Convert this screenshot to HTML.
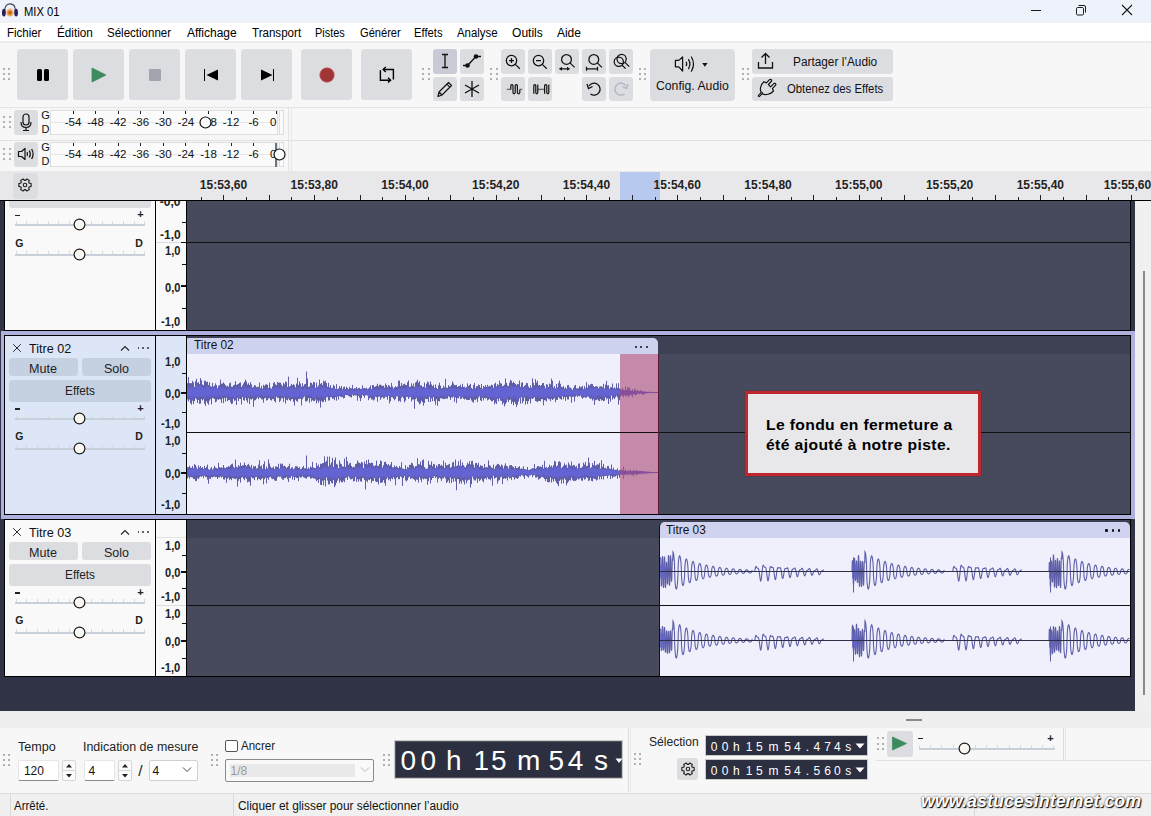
<!DOCTYPE html><html><head><meta charset="utf-8"><style>html,body{margin:0;padding:0;width:1151px;height:816px;overflow:hidden;}body{position:relative;background:#f0f0f0;font-family:"Liberation Sans",sans-serif;}div{box-sizing:border-box;}</style></head><body><div style="position:absolute;left:0px;top:0px;width:1151px;height:23px;background:#eef2fa;"></div><div style="position:absolute;left:0px;top:19.5px;width:1151px;height:3.5px;background:#eef1f5;"></div><svg style="position:absolute;left:0px;top:0px;" width="22" height="22" viewBox="0 0 22 22"><defs><radialGradient id="ag" cx="50%" cy="62%" r="55%"><stop offset="0" stop-color="#a84a08"/><stop offset="0.45" stop-color="#e89a40"/><stop offset="1" stop-color="#f6dcc0" stop-opacity="0"/></radialGradient></defs><ellipse cx="10" cy="11.5" rx="4.8" ry="5.2" fill="url(#ag)"/><path d="M4.7 10.5 C4.7 5.6 7.4 3.9 10 3.9 C12.6 3.9 15.3 5.6 15.3 10.5" fill="none" stroke="#3a3f58" stroke-width="1.1"/><ellipse cx="3.9" cy="12.6" rx="1.9" ry="3.9" fill="#2b1c5c"/><ellipse cx="16.1" cy="12.6" rx="1.9" ry="3.9" fill="#2b1c5c"/></svg><div style="position:absolute;left:23.50px;top:5.84px;font-size:12px;line-height:12px;white-space:pre;color:#000;transform:scaleX(0.9338);transform-origin:0 0;">MIX 01</div><div style="position:absolute;left:1031px;top:10px;width:10px;height:1px;background:#1a1a1a;"></div><svg style="position:absolute;left:1075px;top:4px;" width="13" height="13" viewBox="0 0 13 13"><rect x="1.5" y="3.5" width="7" height="7.5" rx="1.2" fill="none" stroke="#1a1a1a" stroke-width="1"/><path d="M3.5 1.5 H9 Q10.5 1.5 10.5 3 V8.5" fill="none" stroke="#1a1a1a" stroke-width="1"/></svg><svg style="position:absolute;left:1121px;top:4px;" width="12" height="12" viewBox="0 0 12 12"><path d="M1 1 L11 11 M11 1 L1 11" stroke="#1a1a1a" stroke-width="1.1"/></svg><div style="position:absolute;left:0px;top:23px;width:1151px;height:18px;background:#ffffff;"></div><div style="position:absolute;left:7.30px;top:26.84px;font-size:12px;line-height:12px;white-space:pre;color:#000;transform:scaleX(0.9554);transform-origin:0 0;">Fichier</div><div style="position:absolute;left:56.60px;top:26.84px;font-size:12px;line-height:12px;white-space:pre;color:#000;transform:scaleX(0.9784);transform-origin:0 0;">Édition</div><div style="position:absolute;left:107.40px;top:26.84px;font-size:12px;line-height:12px;white-space:pre;color:#000;transform:scaleX(0.9609);transform-origin:0 0;">Sélectionner</div><div style="position:absolute;left:186.90px;top:26.84px;font-size:12px;line-height:12px;white-space:pre;color:#000;">Affichage</div><div style="position:absolute;left:251.90px;top:26.84px;font-size:12px;line-height:12px;white-space:pre;color:#000;transform:scaleX(0.9645);transform-origin:0 0;">Transport</div><div style="position:absolute;left:315.00px;top:26.84px;font-size:12px;line-height:12px;white-space:pre;color:#000;transform:scaleX(0.9119);transform-origin:0 0;">Pistes</div><div style="position:absolute;left:359.50px;top:26.84px;font-size:12px;line-height:12px;white-space:pre;color:#000;transform:scaleX(0.9245);transform-origin:0 0;">Générer</div><div style="position:absolute;left:414.20px;top:26.84px;font-size:12px;line-height:12px;white-space:pre;color:#000;transform:scaleX(0.9356);transform-origin:0 0;">Effets</div><div style="position:absolute;left:457.40px;top:26.84px;font-size:12px;line-height:12px;white-space:pre;color:#000;transform:scaleX(0.9510);transform-origin:0 0;">Analyse</div><div style="position:absolute;left:512.10px;top:26.84px;font-size:12px;line-height:12px;white-space:pre;color:#000;">Outils</div><div style="position:absolute;left:556.90px;top:26.84px;font-size:12px;line-height:12px;white-space:pre;color:#000;">Aide</div><div style="position:absolute;left:0px;top:41px;width:1151px;height:66px;background:#f7f7f7;"></div><div style="position:absolute;left:0px;top:41px;width:1151px;height:2px;background:#ececec;"></div><div style="position:absolute;left:0px;top:107px;width:1151px;height:1px;background:#e4e4e4;"></div><div style="position:absolute;left:2.8px;top:67.6px;width:2px;height:2px;background:#9a9a9a;border-radius:1px;"></div><div style="position:absolute;left:2.8px;top:72.8px;width:2px;height:2px;background:#9a9a9a;border-radius:1px;"></div><div style="position:absolute;left:2.8px;top:78.0px;width:2px;height:2px;background:#9a9a9a;border-radius:1px;"></div><div style="position:absolute;left:8.2px;top:67.6px;width:2px;height:2px;background:#9a9a9a;border-radius:1px;"></div><div style="position:absolute;left:8.2px;top:72.8px;width:2px;height:2px;background:#9a9a9a;border-radius:1px;"></div><div style="position:absolute;left:8.2px;top:78.0px;width:2px;height:2px;background:#9a9a9a;border-radius:1px;"></div><div style="position:absolute;left:17.3px;top:49px;width:51.2px;height:51.3px;background:#dcdde1;border-radius:3px;"></div><div style="position:absolute;left:73.3px;top:49px;width:51.2px;height:51.3px;background:#dcdde1;border-radius:3px;"></div><div style="position:absolute;left:129.3px;top:49px;width:51.2px;height:51.3px;background:#dcdde1;border-radius:3px;"></div><div style="position:absolute;left:185.3px;top:49px;width:51.2px;height:51.3px;background:#dcdde1;border-radius:3px;"></div><div style="position:absolute;left:241.3px;top:49px;width:51.2px;height:51.3px;background:#dcdde1;border-radius:3px;"></div><div style="position:absolute;left:301.3px;top:49px;width:51.2px;height:51.3px;background:#dcdde1;border-radius:3px;"></div><div style="position:absolute;left:361.3px;top:49px;width:51.2px;height:51.3px;background:#dcdde1;border-radius:3px;"></div><div style="position:absolute;left:36.5px;top:68.5px;width:5px;height:12.5px;background:#000;border-radius:1.5px;"></div><div style="position:absolute;left:44px;top:68.5px;width:5px;height:12.5px;background:#000;border-radius:1.5px;"></div><svg style="position:absolute;left:91px;top:67px;" width="16" height="16" viewBox="0 0 16 16"><path d="M1 1 L15 8 L1 15 Z" fill="#3d8b5e" stroke="#3d8b5e" stroke-width="0.8" stroke-linejoin="round"/></svg><div style="position:absolute;left:149px;top:69px;width:11.7px;height:11.7px;background:#a2a5ae;border-radius:1px;"></div><div style="position:absolute;left:203.8px;top:69px;width:1.5px;height:12px;background:#000;"></div><svg style="position:absolute;left:206px;top:69px;" width="13" height="12" viewBox="0 0 13 12"><path d="M0.5 6 L12 0.5 L12 11.5 Z" fill="#000"/></svg><svg style="position:absolute;left:259.5px;top:69px;" width="13" height="12" viewBox="0 0 13 12"><path d="M12.5 6 L1 0.5 L1 11.5 Z" fill="#000"/></svg><div style="position:absolute;left:272.7px;top:69px;width:1.5px;height:12px;background:#000;"></div><svg style="position:absolute;left:318px;top:66px;" width="18" height="18" viewBox="0 0 18 18"><circle cx="9" cy="9" r="7.3" fill="#a03535" stroke="#c86464" stroke-width="0.6"/></svg><svg style="position:absolute;left:376px;top:64px;" width="22" height="22" viewBox="0 0 22 22"><path d="M4.4 6.2 V16.2 H14.2" fill="none" stroke="#000" stroke-width="1.4"/><path d="M12 13.8 L14.6 16.2 L12 18.6" fill="none" stroke="#000" stroke-width="1.4"/><path d="M17.4 15.5 V5.5 H7.6" fill="none" stroke="#000" stroke-width="1.4"/><path d="M9.8 3.1 L7.2 5.5 L9.8 7.9" fill="none" stroke="#000" stroke-width="1.4"/></svg><div style="position:absolute;left:422.3px;top:67.6px;width:2px;height:2px;background:#9a9a9a;border-radius:1px;"></div><div style="position:absolute;left:422.3px;top:72.8px;width:2px;height:2px;background:#9a9a9a;border-radius:1px;"></div><div style="position:absolute;left:422.3px;top:78.0px;width:2px;height:2px;background:#9a9a9a;border-radius:1px;"></div><div style="position:absolute;left:427.7px;top:67.6px;width:2px;height:2px;background:#9a9a9a;border-radius:1px;"></div><div style="position:absolute;left:427.7px;top:72.8px;width:2px;height:2px;background:#9a9a9a;border-radius:1px;"></div><div style="position:absolute;left:427.7px;top:78.0px;width:2px;height:2px;background:#9a9a9a;border-radius:1px;"></div><div style="position:absolute;left:432.5px;top:49px;width:24px;height:24.5px;background:#c8cad6;border-radius:3px;"></div><div style="position:absolute;left:459.5px;top:49px;width:24px;height:24.5px;background:#dcdde1;border-radius:3px;"></div><div style="position:absolute;left:432.5px;top:76.5px;width:24px;height:24px;background:#dcdde1;border-radius:3px;"></div><div style="position:absolute;left:459.5px;top:76.5px;width:24px;height:24px;background:#dcdde1;border-radius:3px;"></div><svg style="position:absolute;left:432.5px;top:49px;" width="24" height="24" viewBox="0 0 24 24"><path d="M9 5.5 H15 M12 5.5 V18.5 M9 18.5 H15" stroke="#111" stroke-width="1.3" fill="none"/></svg><svg style="position:absolute;left:459.5px;top:49px;" width="24" height="24" viewBox="0 0 24 24"><path d="M3 16.5 H7.5 L16 7.5 H21" stroke="#111" stroke-width="1.3" fill="none"/><circle cx="7.5" cy="16.5" r="2.3" fill="#111"/><circle cx="16" cy="7.5" r="2.3" fill="#111"/></svg><svg style="position:absolute;left:432.5px;top:76.5px;" width="24" height="24" viewBox="0 0 24 24"><path d="M5 19.5 L6 15 L15.5 5.5 L18.5 8.5 L9 18 Z M13.8 7.2 L16.8 10.2 M6 15 L9 18" stroke="#111" stroke-width="1.2" fill="none" stroke-linejoin="round"/></svg><svg style="position:absolute;left:459.5px;top:76.5px;" width="24" height="24" viewBox="0 0 24 24"><path d="M12 4 V20 M5 8 L19 16 M19 8 L5 16" stroke="#111" stroke-width="1.3" fill="none"/></svg><div style="position:absolute;left:490.3px;top:67.6px;width:2px;height:2px;background:#9a9a9a;border-radius:1px;"></div><div style="position:absolute;left:490.3px;top:72.8px;width:2px;height:2px;background:#9a9a9a;border-radius:1px;"></div><div style="position:absolute;left:490.3px;top:78.0px;width:2px;height:2px;background:#9a9a9a;border-radius:1px;"></div><div style="position:absolute;left:495.7px;top:67.6px;width:2px;height:2px;background:#9a9a9a;border-radius:1px;"></div><div style="position:absolute;left:495.7px;top:72.8px;width:2px;height:2px;background:#9a9a9a;border-radius:1px;"></div><div style="position:absolute;left:495.7px;top:78.0px;width:2px;height:2px;background:#9a9a9a;border-radius:1px;"></div><div style="position:absolute;left:500.5px;top:49px;width:24px;height:24.5px;background:#dcdde1;border-radius:3px;"></div><div style="position:absolute;left:527.5px;top:49px;width:24px;height:24.5px;background:#dcdde1;border-radius:3px;"></div><div style="position:absolute;left:554.5px;top:49px;width:24px;height:24.5px;background:#dcdde1;border-radius:3px;"></div><div style="position:absolute;left:581.5px;top:49px;width:24px;height:24.5px;background:#dcdde1;border-radius:3px;"></div><div style="position:absolute;left:608.5px;top:49px;width:24px;height:24.5px;background:#dcdde1;border-radius:3px;"></div><div style="position:absolute;left:500.5px;top:76.5px;width:24px;height:24px;background:#dcdde1;border-radius:3px;"></div><div style="position:absolute;left:527.5px;top:76.5px;width:24px;height:24px;background:#dcdde1;border-radius:3px;"></div><div style="position:absolute;left:581.5px;top:76.5px;width:24px;height:24px;background:#dcdde1;border-radius:3px;"></div><div style="position:absolute;left:608.5px;top:76.5px;width:24px;height:24px;background:#dcdde1;border-radius:3px;"></div><svg style="position:absolute;left:500.5px;top:49px;" width="24" height="24" viewBox="0 0 24 24"><circle cx="10.5" cy="11.6" r="5.2" stroke="#111" stroke-width="1.25" fill="none"/><path d="M14.3 15.4 L18.8 19.8 M8 11.6 H13 M10.5 9.1 V14.1" stroke="#111" stroke-width="1.25"/></svg><svg style="position:absolute;left:527.5px;top:49px;" width="24" height="24" viewBox="0 0 24 24"><circle cx="10.5" cy="11.6" r="5.2" stroke="#111" stroke-width="1.25" fill="none"/><path d="M14.3 15.4 L18.8 19.8 M8 11.6 H13" stroke="#111" stroke-width="1.25"/></svg><svg style="position:absolute;left:554.5px;top:49px;" width="24" height="24" viewBox="0 0 24 24"><circle cx="11.5" cy="10.4" r="4.9" stroke="#111" stroke-width="1.25" fill="none"/><path d="M15 13.9 L19.6 18.4 M4.5 19.8 H14.5" stroke="#111" stroke-width="1.25" fill="none"/><path d="M4.2 19.8 L7 17.8 V21.8 Z M14.8 19.8 L12 17.8 V21.8 Z" fill="#111"/></svg><svg style="position:absolute;left:581.5px;top:49px;" width="24" height="24" viewBox="0 0 24 24"><circle cx="11.8" cy="10.4" r="4.9" stroke="#111" stroke-width="1.25" fill="none"/><path d="M15.3 13.9 L19.9 18.4 M4.5 19.8 H15.5 M4.5 17.8 V21.8 M15.5 17.8 V21.8" stroke="#111" stroke-width="1.25" fill="none"/></svg><svg style="position:absolute;left:608.5px;top:49px;" width="24" height="24" viewBox="0 0 24 24"><circle cx="9.8" cy="12.8" r="4.6" stroke="#111" stroke-width="1.25" fill="none"/><circle cx="12.6" cy="10" r="4.6" stroke="#111" stroke-width="1.25" fill="none"/><path d="M16 13.4 L20.2 17.6 M13.2 16.2 L16.6 19.6" stroke="#111" stroke-width="1.25"/></svg><svg style="position:absolute;left:500.5px;top:76.5px;" width="24" height="24" viewBox="0 0 24 24"><path d="M5.8 12.4 H9.8 M18.8 12.4 H21.2" stroke="#6a6a6a" stroke-width="1.4"/><path d="M9.8 12.4 V8.8 Q9.8 7.6 10.9 7.6 Q12 7.6 12 8.8 V15.6 Q12 16.8 13.1 16.8 Q14.2 16.8 14.2 15.6 V8.8 Q14.2 7.6 15.3 7.6 Q16.4 7.6 16.4 8.8 V15.6 Q16.4 16.8 17.6 16.8 Q18.8 16.8 18.8 15.6 V12.4" stroke="#111" stroke-width="1.2" fill="none"/></svg><svg style="position:absolute;left:527.5px;top:76.5px;" width="24" height="24" viewBox="0 0 24 24"><path d="M9.8 12.4 H16.6" stroke="#6a6a6a" stroke-width="1.4"/><path d="M5.8 16.8 V8.8 Q5.8 7.6 6.8 7.6 Q7.8 7.6 7.8 8.8 V15.6 Q7.8 16.8 8.8 16.8 Q9.8 16.8 9.8 15.6 V7.6 M16.6 16.8 V8.8 Q16.6 7.6 17.7 7.6 Q18.8 7.6 18.8 8.8 V15.6 Q18.8 16.8 19.8 16.8 Q20.8 16.8 20.8 15.6 V7.6" stroke="#111" stroke-width="1.2" fill="none"/></svg><svg style="position:absolute;left:581.5px;top:76.5px;" width="24" height="24" viewBox="0 0 24 24"><path d="M7 9 A6 6 0 1 1 8.5 17" stroke="#111" stroke-width="1.3" fill="none"/><path d="M5 7 L6.5 11.5 L10.5 9.5" stroke="#111" stroke-width="1.3" fill="none"/></svg><svg style="position:absolute;left:608.5px;top:76.5px;" width="24" height="24" viewBox="0 0 24 24"><path d="M17 9 A6 6 0 1 0 15.5 17" stroke="#b0b3c0" stroke-width="1.3" fill="none"/><path d="M19 7 L17.5 11.5 L13.5 9.5" stroke="#b0b3c0" stroke-width="1.3" fill="none"/></svg><div style="position:absolute;left:639.0px;top:67.6px;width:2px;height:2px;background:#9a9a9a;border-radius:1px;"></div><div style="position:absolute;left:639.0px;top:72.8px;width:2px;height:2px;background:#9a9a9a;border-radius:1px;"></div><div style="position:absolute;left:639.0px;top:78.0px;width:2px;height:2px;background:#9a9a9a;border-radius:1px;"></div><div style="position:absolute;left:644.4px;top:67.6px;width:2px;height:2px;background:#9a9a9a;border-radius:1px;"></div><div style="position:absolute;left:644.4px;top:72.8px;width:2px;height:2px;background:#9a9a9a;border-radius:1px;"></div><div style="position:absolute;left:644.4px;top:78.0px;width:2px;height:2px;background:#9a9a9a;border-radius:1px;"></div><div style="position:absolute;left:649.5px;top:49px;width:85px;height:51.5px;background:#dcdde1;border-radius:4px;"></div><svg style="position:absolute;left:672px;top:55px;" width="36" height="18" viewBox="0 0 36 18"><path d="M3.4 5.4 H6.8 L10.6 2 V16 L6.8 11.8 H3.4 Z" stroke="#111" stroke-width="1.25" fill="none" stroke-linejoin="round"/><path d="M14.2 7.2 Q15.3 8.9 14.2 10.6 M16.6 4.6 Q19.2 9 16.6 13.6 M19.4 2 Q23.6 9 19.4 16.2" stroke="#111" stroke-width="1.25" fill="none" stroke-linecap="round"/><path d="M30.2 8 L35.6 8 L32.9 11.8 Z" fill="#111"/></svg><div style="position:absolute;left:655.80px;top:80.34px;font-size:12px;line-height:12px;white-space:pre;color:#111;transform:scaleX(1.0184);transform-origin:0 0;">Config. Audio</div><div style="position:absolute;left:741.5px;top:67.6px;width:2px;height:2px;background:#9a9a9a;border-radius:1px;"></div><div style="position:absolute;left:741.5px;top:72.8px;width:2px;height:2px;background:#9a9a9a;border-radius:1px;"></div><div style="position:absolute;left:741.5px;top:78.0px;width:2px;height:2px;background:#9a9a9a;border-radius:1px;"></div><div style="position:absolute;left:746.9px;top:67.6px;width:2px;height:2px;background:#9a9a9a;border-radius:1px;"></div><div style="position:absolute;left:746.9px;top:72.8px;width:2px;height:2px;background:#9a9a9a;border-radius:1px;"></div><div style="position:absolute;left:746.9px;top:78.0px;width:2px;height:2px;background:#9a9a9a;border-radius:1px;"></div><div style="position:absolute;left:751.5px;top:49px;width:141.5px;height:24.5px;background:#dcdde1;border-radius:3px;"></div><div style="position:absolute;left:751.5px;top:76.5px;width:141.5px;height:24px;background:#dcdde1;border-radius:3px;"></div><svg style="position:absolute;left:756px;top:51px;" width="20" height="20" viewBox="0 0 20 20"><path d="M2.5 11 V17 H16.5 V11" stroke="#111" stroke-width="1.3" fill="none"/><path d="M9.5 13 V2.5 M5.5 6.5 L9.5 2.5 L13.5 6.5" stroke="#111" stroke-width="1.3" fill="none"/></svg><div style="position:absolute;left:792.60px;top:55.84px;font-size:12px;line-height:12px;white-space:pre;color:#111;transform:scaleX(0.9861);transform-origin:0 0;">Partager l’Audio</div><svg style="position:absolute;left:756px;top:78px;" width="22" height="22" viewBox="0 0 22 22"><path d="M5.4 14.6 C3.4 11.8 4.4 7 7.9 3.8 L10.4 4.9 L13.5 1.7 Q14.5 0.9 15.3 1.7 Q16.1 2.6 15.2 3.5 L12.4 6.5 L14.6 8.8 L17.8 5.6 Q18.7 4.8 19.5 5.6 Q20.3 6.5 19.4 7.4 L16.4 10.6 L17.5 13 C14.6 16.4 9.2 17.4 6.4 15.8 Z" stroke="#111" stroke-width="1.2" fill="none" stroke-linejoin="round"/><path d="M5.6 15.2 L3 17.8" stroke="#111" stroke-width="2.6" stroke-linecap="round"/><path d="M5.6 15.2 L3 17.8" stroke="#dcdde1" stroke-width="0.6" stroke-linecap="round"/></svg><div style="position:absolute;left:786.70px;top:82.84px;font-size:12px;line-height:12px;white-space:pre;color:#111;transform:scaleX(0.9446);transform-origin:0 0;">Obtenez des Effets</div><div style="position:absolute;left:0px;top:108px;width:1151px;height:63px;background:#f7f7f7;"></div><div style="position:absolute;left:3.3px;top:115.6px;width:2px;height:2px;background:#9a9a9a;border-radius:1px;"></div><div style="position:absolute;left:3.3px;top:120.8px;width:2px;height:2px;background:#9a9a9a;border-radius:1px;"></div><div style="position:absolute;left:3.3px;top:126.0px;width:2px;height:2px;background:#9a9a9a;border-radius:1px;"></div><div style="position:absolute;left:8.7px;top:115.6px;width:2px;height:2px;background:#9a9a9a;border-radius:1px;"></div><div style="position:absolute;left:8.7px;top:120.8px;width:2px;height:2px;background:#9a9a9a;border-radius:1px;"></div><div style="position:absolute;left:8.7px;top:126.0px;width:2px;height:2px;background:#9a9a9a;border-radius:1px;"></div><div style="position:absolute;left:14.3px;top:110px;width:24px;height:24.5px;background:#dcdde1;border-radius:3px;"></div><svg style="position:absolute;left:14.3px;top:110px;" width="24" height="24" viewBox="0 0 24 24"><rect x="9" y="4" width="6" height="11" rx="3" fill="none" stroke="#111" stroke-width="1.2"/><path d="M7 12 Q7 17.5 12 17.5 Q17 17.5 17 12 M12 17.5 V20 M9 20.5 H15" fill="none" stroke="#111" stroke-width="1.2"/></svg><div style="position:absolute;left:41.20px;top:109.99px;font-size:11px;line-height:11px;white-space:pre;color:#111;">G</div><div style="position:absolute;left:41.50px;top:124.29px;font-size:11px;line-height:11px;white-space:pre;color:#111;">D</div><div style="position:absolute;left:49.5px;top:110px;width:228.5px;height:25px;background:#fbfbfb;border:1px solid #dedede;"></div><div style="position:absolute;left:49.5px;top:122px;width:228.5px;height:1px;background:#e6e6e6;"></div><div style="position:absolute;left:279px;top:110px;width:5px;height:25px;background:#fbfbfb;border:1px solid #dedede;"></div><div style="position:absolute;left:72.5px;top:111px;width:1px;height:3px;background:#222;"></div><div style="position:absolute;left:64.69px;top:117.07px;font-size:11.5px;line-height:11.5px;white-space:pre;color:#111;">-54</div><div style="position:absolute;left:95.08px;top:111px;width:1px;height:3px;background:#222;"></div><div style="position:absolute;left:87.27px;top:117.07px;font-size:11.5px;line-height:11.5px;white-space:pre;color:#111;">-48</div><div style="position:absolute;left:117.66px;top:111px;width:1px;height:3px;background:#222;"></div><div style="position:absolute;left:109.85px;top:117.07px;font-size:11.5px;line-height:11.5px;white-space:pre;color:#111;">-42</div><div style="position:absolute;left:140.24px;top:111px;width:1px;height:3px;background:#222;"></div><div style="position:absolute;left:132.43px;top:117.07px;font-size:11.5px;line-height:11.5px;white-space:pre;color:#111;">-36</div><div style="position:absolute;left:162.82px;top:111px;width:1px;height:3px;background:#222;"></div><div style="position:absolute;left:155.01px;top:117.07px;font-size:11.5px;line-height:11.5px;white-space:pre;color:#111;">-30</div><div style="position:absolute;left:185.39999999999998px;top:111px;width:1px;height:3px;background:#222;"></div><div style="position:absolute;left:177.59px;top:117.07px;font-size:11.5px;line-height:11.5px;white-space:pre;color:#111;">-24</div><div style="position:absolute;left:207.98px;top:111px;width:1px;height:3px;background:#222;"></div><div style="position:absolute;left:200.17px;top:117.07px;font-size:11.5px;line-height:11.5px;white-space:pre;color:#111;">-18</div><div style="position:absolute;left:230.56px;top:111px;width:1px;height:3px;background:#222;"></div><div style="position:absolute;left:222.75px;top:117.07px;font-size:11.5px;line-height:11.5px;white-space:pre;color:#111;">-12</div><div style="position:absolute;left:253.14px;top:111px;width:1px;height:3px;background:#222;"></div><div style="position:absolute;left:248.53px;top:117.07px;font-size:11.5px;line-height:11.5px;white-space:pre;color:#111;">-6</div><div style="position:absolute;left:275.71999999999997px;top:111px;width:1px;height:3px;background:#222;"></div><div style="position:absolute;left:269.90px;top:117.07px;font-size:11.5px;line-height:11.5px;white-space:pre;color:#111;">0</div><div style="position:absolute;left:288px;top:107px;width:1px;height:32px;background:#e2e2e2;"></div><div style="position:absolute;left:290.5px;top:107px;width:1px;height:32px;background:#e8e8e8;"></div><div style="position:absolute;left:0px;top:139.5px;width:1151px;height:1px;background:#e0e0e0;"></div><div style="position:absolute;left:3.3px;top:147.6px;width:2px;height:2px;background:#9a9a9a;border-radius:1px;"></div><div style="position:absolute;left:3.3px;top:152.79999999999998px;width:2px;height:2px;background:#9a9a9a;border-radius:1px;"></div><div style="position:absolute;left:3.3px;top:158.0px;width:2px;height:2px;background:#9a9a9a;border-radius:1px;"></div><div style="position:absolute;left:8.7px;top:147.6px;width:2px;height:2px;background:#9a9a9a;border-radius:1px;"></div><div style="position:absolute;left:8.7px;top:152.79999999999998px;width:2px;height:2px;background:#9a9a9a;border-radius:1px;"></div><div style="position:absolute;left:8.7px;top:158.0px;width:2px;height:2px;background:#9a9a9a;border-radius:1px;"></div><div style="position:absolute;left:14.3px;top:142px;width:24px;height:24.5px;background:#dcdde1;border-radius:3px;"></div><svg style="position:absolute;left:14.3px;top:142px;" width="24" height="24" viewBox="0 0 24 24"><path d="M4.5 9.5 H7.5 L11 6.5 V17.5 L7.5 14.5 H4.5 Z" stroke="#111" stroke-width="1.2" fill="none" stroke-linejoin="round"/><path d="M13 10 Q14 12 13 14 M15.3 8.5 Q17.3 12 15.3 15.5 M17.6 7 Q20.6 12 17.6 17" stroke="#111" stroke-width="1.2" fill="none"/></svg><div style="position:absolute;left:41.20px;top:141.99px;font-size:11px;line-height:11px;white-space:pre;color:#111;">G</div><div style="position:absolute;left:41.50px;top:156.29px;font-size:11px;line-height:11px;white-space:pre;color:#111;">D</div><div style="position:absolute;left:49.5px;top:142px;width:228.5px;height:25px;background:#fbfbfb;border:1px solid #dedede;"></div><div style="position:absolute;left:49.5px;top:154px;width:228.5px;height:1px;background:#e6e6e6;"></div><div style="position:absolute;left:279px;top:142px;width:5px;height:25px;background:#fbfbfb;border:1px solid #dedede;"></div><div style="position:absolute;left:72.5px;top:143px;width:1px;height:3px;background:#222;"></div><div style="position:absolute;left:64.69px;top:149.07px;font-size:11.5px;line-height:11.5px;white-space:pre;color:#111;">-54</div><div style="position:absolute;left:95.08px;top:143px;width:1px;height:3px;background:#222;"></div><div style="position:absolute;left:87.27px;top:149.07px;font-size:11.5px;line-height:11.5px;white-space:pre;color:#111;">-48</div><div style="position:absolute;left:117.66px;top:143px;width:1px;height:3px;background:#222;"></div><div style="position:absolute;left:109.85px;top:149.07px;font-size:11.5px;line-height:11.5px;white-space:pre;color:#111;">-42</div><div style="position:absolute;left:140.24px;top:143px;width:1px;height:3px;background:#222;"></div><div style="position:absolute;left:132.43px;top:149.07px;font-size:11.5px;line-height:11.5px;white-space:pre;color:#111;">-36</div><div style="position:absolute;left:162.82px;top:143px;width:1px;height:3px;background:#222;"></div><div style="position:absolute;left:155.01px;top:149.07px;font-size:11.5px;line-height:11.5px;white-space:pre;color:#111;">-30</div><div style="position:absolute;left:185.39999999999998px;top:143px;width:1px;height:3px;background:#222;"></div><div style="position:absolute;left:177.59px;top:149.07px;font-size:11.5px;line-height:11.5px;white-space:pre;color:#111;">-24</div><div style="position:absolute;left:207.98px;top:143px;width:1px;height:3px;background:#222;"></div><div style="position:absolute;left:200.17px;top:149.07px;font-size:11.5px;line-height:11.5px;white-space:pre;color:#111;">-18</div><div style="position:absolute;left:230.56px;top:143px;width:1px;height:3px;background:#222;"></div><div style="position:absolute;left:222.75px;top:149.07px;font-size:11.5px;line-height:11.5px;white-space:pre;color:#111;">-12</div><div style="position:absolute;left:253.14px;top:143px;width:1px;height:3px;background:#222;"></div><div style="position:absolute;left:248.53px;top:149.07px;font-size:11.5px;line-height:11.5px;white-space:pre;color:#111;">-6</div><div style="position:absolute;left:275.71999999999997px;top:143px;width:1px;height:3px;background:#222;"></div><div style="position:absolute;left:269.90px;top:149.07px;font-size:11.5px;line-height:11.5px;white-space:pre;color:#111;">0</div><div style="position:absolute;left:288px;top:139px;width:1px;height:32px;background:#e2e2e2;"></div><div style="position:absolute;left:290.5px;top:139px;width:1px;height:32px;background:#e8e8e8;"></div><div style="position:absolute;left:0px;top:170.5px;width:1151px;height:1px;background:#e0e0e0;"></div><svg style="position:absolute;left:199px;top:116px;" width="13" height="13" viewBox="0 0 13 13"><circle cx="6.5" cy="6.5" r="5.5" fill="#fbfbfb" stroke="#111" stroke-width="1.2"/></svg><div style="position:absolute;left:274.5px;top:143px;width:2px;height:24px;background:#6e7480;"></div><svg style="position:absolute;left:272.5px;top:148px;" width="13" height="13" viewBox="0 0 13 13"><circle cx="6.5" cy="6.5" r="5.5" fill="#fbfbfb" stroke="#111" stroke-width="1.2"/></svg><div style="position:absolute;left:0px;top:201px;width:1135px;height:510px;background:#313447;"></div><div style="position:absolute;left:1135px;top:201px;width:16px;height:510px;background:#f0f0f0;"></div><div style="position:absolute;left:1143px;top:271px;width:2px;height:424px;background:#8a8a8a;"></div><div style="position:absolute;left:4px;top:201px;width:1127px;height:130px;background:#000;"></div><div style="position:absolute;left:5px;top:201px;width:150px;height:129px;background:#f9f9f9;"></div><div style="position:absolute;left:156px;top:201px;width:30px;height:129px;background:#f9f9f9;"></div><div style="position:absolute;left:187px;top:201px;width:943px;height:129px;background:#474a5c;"></div><div style="position:absolute;left:9.2px;top:196px;width:141.6px;height:11.5px;background:#dcdde1;border-radius:3px;"></div><div style="position:absolute;left:5px;top:196px;width:150px;height:5px;background:#e8e8ea;"></div><div style="position:absolute;left:15.2px;top:214.6px;width:4.8px;height:1.3px;background:#222;"></div><div style="position:absolute;left:137.29px;top:209.29px;font-size:11px;line-height:11px;white-space:pre;color:#222;font-weight:bold;">+</div><div style="position:absolute;left:14.8px;top:224.2px;width:130.7px;height:2px;background:#c8d0da;"></div><div style="position:absolute;left:16px;top:221.2px;width:1px;height:3px;background:#d4dae2;"></div><div style="position:absolute;left:26px;top:221.2px;width:1px;height:3px;background:#d4dae2;"></div><div style="position:absolute;left:37px;top:221.2px;width:1px;height:3px;background:#d4dae2;"></div><div style="position:absolute;left:48px;top:221.2px;width:1px;height:3px;background:#d4dae2;"></div><div style="position:absolute;left:58px;top:221.2px;width:1px;height:3px;background:#d4dae2;"></div><div style="position:absolute;left:69px;top:221.2px;width:1px;height:3px;background:#d4dae2;"></div><div style="position:absolute;left:80px;top:221.2px;width:1px;height:3px;background:#d4dae2;"></div><div style="position:absolute;left:91px;top:221.2px;width:1px;height:3px;background:#d4dae2;"></div><div style="position:absolute;left:102px;top:221.2px;width:1px;height:3px;background:#d4dae2;"></div><div style="position:absolute;left:112px;top:221.2px;width:1px;height:3px;background:#d4dae2;"></div><div style="position:absolute;left:123px;top:221.2px;width:1px;height:3px;background:#d4dae2;"></div><div style="position:absolute;left:134px;top:221.2px;width:1px;height:3px;background:#d4dae2;"></div><div style="position:absolute;left:144px;top:221.2px;width:1px;height:3px;background:#d4dae2;"></div><svg style="position:absolute;left:73px;top:218px;" width="13" height="13" viewBox="0 0 13 13"><circle cx="6.5" cy="6.5" r="5.4" fill="#f8f7f2" stroke="#1a1a1a" stroke-width="1.2"/></svg><div style="position:absolute;left:15.20px;top:237.61px;font-size:10.5px;line-height:10.5px;white-space:pre;color:#222;font-weight:bold;">G</div><div style="position:absolute;left:135.32px;top:237.61px;font-size:10.5px;line-height:10.5px;white-space:pre;color:#222;font-weight:bold;">D</div><div style="position:absolute;left:14.8px;top:253.89999999999998px;width:130.7px;height:2px;background:#c8d0da;"></div><div style="position:absolute;left:16px;top:250.89999999999998px;width:1px;height:3px;background:#d4dae2;"></div><div style="position:absolute;left:26px;top:250.89999999999998px;width:1px;height:3px;background:#d4dae2;"></div><div style="position:absolute;left:37px;top:250.89999999999998px;width:1px;height:3px;background:#d4dae2;"></div><div style="position:absolute;left:48px;top:250.89999999999998px;width:1px;height:3px;background:#d4dae2;"></div><div style="position:absolute;left:58px;top:250.89999999999998px;width:1px;height:3px;background:#d4dae2;"></div><div style="position:absolute;left:69px;top:250.89999999999998px;width:1px;height:3px;background:#d4dae2;"></div><div style="position:absolute;left:80px;top:250.89999999999998px;width:1px;height:3px;background:#d4dae2;"></div><div style="position:absolute;left:91px;top:250.89999999999998px;width:1px;height:3px;background:#d4dae2;"></div><div style="position:absolute;left:102px;top:250.89999999999998px;width:1px;height:3px;background:#d4dae2;"></div><div style="position:absolute;left:112px;top:250.89999999999998px;width:1px;height:3px;background:#d4dae2;"></div><div style="position:absolute;left:123px;top:250.89999999999998px;width:1px;height:3px;background:#d4dae2;"></div><div style="position:absolute;left:134px;top:250.89999999999998px;width:1px;height:3px;background:#d4dae2;"></div><div style="position:absolute;left:144px;top:250.89999999999998px;width:1px;height:3px;background:#d4dae2;"></div><svg style="position:absolute;left:73px;top:248px;" width="13" height="13" viewBox="0 0 13 13"><circle cx="6.5" cy="6.5" r="5.4" fill="#f8f7f2" stroke="#1a1a1a" stroke-width="1.2"/></svg><div style="position:absolute;left:156px;top:242px;width:30px;height:1px;background:#ddd;"></div><div style="position:absolute;left:187px;top:242px;width:943px;height:1.2px;background:#111;"></div><div style="position:absolute;left:159.82px;top:196.14px;font-size:12px;line-height:12px;white-space:pre;color:#222;font-weight:bold;">-0,0</div><div style="position:absolute;left:182px;top:221.5px;width:4px;height:1px;background:#111;"></div><div style="position:absolute;left:160.12px;top:229.04px;font-size:12px;line-height:12px;white-space:pre;color:#222;font-weight:bold;">-1,0</div><div style="position:absolute;left:181px;top:242px;width:5px;height:1px;background:#111;"></div><div style="position:absolute;left:182px;top:264px;width:4px;height:1px;background:#111;"></div><div style="position:absolute;left:181px;top:285px;width:5px;height:2px;background:#111;"></div><div style="position:absolute;left:182px;top:308px;width:4px;height:1px;background:#111;"></div><div style="position:absolute;left:165.10px;top:244.54px;font-size:12px;line-height:12px;white-space:pre;color:#222;font-weight:bold;transform:scaleX(0.9232);transform-origin:0 0;">1,0</div><div style="position:absolute;left:165.10px;top:281.89px;font-size:12px;line-height:12px;white-space:pre;color:#222;font-weight:bold;transform:scaleX(0.9232);transform-origin:0 0;">0,0</div><div style="position:absolute;left:161.30px;top:316.04px;font-size:12px;line-height:12px;white-space:pre;color:#222;font-weight:bold;transform:scaleX(0.9285);transform-origin:0 0;">-1,0</div><div style="position:absolute;left:1px;top:331px;width:1134px;height:4px;background:#aeb0de;"></div><div style="position:absolute;left:1px;top:331px;width:3px;height:184px;background:#aeb0de;"></div><div style="position:absolute;left:1131px;top:331px;width:4px;height:188px;background:#aeb0de;"></div><div style="position:absolute;left:4px;top:335px;width:1127px;height:180px;background:#000;"></div><div style="position:absolute;left:5px;top:336px;width:150px;height:178px;background:#dce6f7;"></div><div style="position:absolute;left:156px;top:336px;width:30px;height:178px;background:#dce6f7;"></div><div style="position:absolute;left:187px;top:336px;width:943px;height:178px;background:#474a5c;"></div><div style="position:absolute;left:187px;top:336px;width:943px;height:17.5px;background:#3e4154;"></div><svg style="position:absolute;left:12px;top:343px;" width="10" height="10" viewBox="0 0 10 10"><path d="M1.2 1.2 L8.8 8.8 M8.8 1.2 L1.2 8.8" stroke="#222" stroke-width="0.95"/></svg><div style="position:absolute;left:29.20px;top:342.72px;font-size:12.5px;line-height:12.5px;white-space:pre;color:#111;transform:scaleX(1.0092);transform-origin:0 0;">Titre 02</div><svg style="position:absolute;left:120px;top:345px;" width="10" height="6" viewBox="0 0 10 6"><path d="M1 5.5 L5 1.5 L9 5.5" stroke="#222" stroke-width="1.1" fill="none"/></svg><div style="position:absolute;left:137.8px;top:347.2px;width:1.7px;height:1.7px;background:#333;border-radius:1px;"></div><div style="position:absolute;left:142.4px;top:347.2px;width:1.7px;height:1.7px;background:#333;border-radius:1px;"></div><div style="position:absolute;left:147.0px;top:347.2px;width:1.7px;height:1.7px;background:#333;border-radius:1px;"></div><div style="position:absolute;left:9.2px;top:358.2px;width:68.5px;height:17.5px;background:#c5d0e0;border-radius:3px;"></div><div style="position:absolute;left:82.2px;top:358.2px;width:68.6px;height:17.5px;background:#c5d0e0;border-radius:3px;"></div><div style="position:absolute;left:29.40px;top:362.72px;font-size:12.5px;line-height:12.5px;white-space:pre;color:#222;transform:scaleX(1.0076);transform-origin:0 0;">Mute</div><div style="position:absolute;left:104.00px;top:362.72px;font-size:12.5px;line-height:12.5px;white-space:pre;color:#222;">Solo</div><div style="position:absolute;left:9.2px;top:380.2px;width:141.6px;height:21.4px;background:#c5d0e0;border-radius:3px;"></div><div style="position:absolute;left:65.00px;top:385.02px;font-size:12.5px;line-height:12.5px;white-space:pre;color:#222;transform:scaleX(0.9454);transform-origin:0 0;">Effets</div><div style="position:absolute;left:15.2px;top:408.4px;width:4.8px;height:1.3px;background:#222;"></div><div style="position:absolute;left:137.29px;top:403.09px;font-size:11px;line-height:11px;white-space:pre;color:#222;font-weight:bold;">+</div><div style="position:absolute;left:14.8px;top:418px;width:130.7px;height:2px;background:#c8d0da;"></div><div style="position:absolute;left:16px;top:415px;width:1px;height:3px;background:#d4dae2;"></div><div style="position:absolute;left:26px;top:415px;width:1px;height:3px;background:#d4dae2;"></div><div style="position:absolute;left:37px;top:415px;width:1px;height:3px;background:#d4dae2;"></div><div style="position:absolute;left:48px;top:415px;width:1px;height:3px;background:#d4dae2;"></div><div style="position:absolute;left:58px;top:415px;width:1px;height:3px;background:#d4dae2;"></div><div style="position:absolute;left:69px;top:415px;width:1px;height:3px;background:#d4dae2;"></div><div style="position:absolute;left:80px;top:415px;width:1px;height:3px;background:#d4dae2;"></div><div style="position:absolute;left:91px;top:415px;width:1px;height:3px;background:#d4dae2;"></div><div style="position:absolute;left:102px;top:415px;width:1px;height:3px;background:#d4dae2;"></div><div style="position:absolute;left:112px;top:415px;width:1px;height:3px;background:#d4dae2;"></div><div style="position:absolute;left:123px;top:415px;width:1px;height:3px;background:#d4dae2;"></div><div style="position:absolute;left:134px;top:415px;width:1px;height:3px;background:#d4dae2;"></div><div style="position:absolute;left:144px;top:415px;width:1px;height:3px;background:#d4dae2;"></div><svg style="position:absolute;left:73px;top:412px;" width="13" height="13" viewBox="0 0 13 13"><circle cx="6.5" cy="6.5" r="5.4" fill="#f8f7f2" stroke="#1a1a1a" stroke-width="1.2"/></svg><div style="position:absolute;left:15.20px;top:431.41px;font-size:10.5px;line-height:10.5px;white-space:pre;color:#222;font-weight:bold;">G</div><div style="position:absolute;left:135.32px;top:431.41px;font-size:10.5px;line-height:10.5px;white-space:pre;color:#222;font-weight:bold;">D</div><div style="position:absolute;left:14.8px;top:447.7px;width:130.7px;height:2px;background:#c8d0da;"></div><div style="position:absolute;left:16px;top:444.7px;width:1px;height:3px;background:#d4dae2;"></div><div style="position:absolute;left:26px;top:444.7px;width:1px;height:3px;background:#d4dae2;"></div><div style="position:absolute;left:37px;top:444.7px;width:1px;height:3px;background:#d4dae2;"></div><div style="position:absolute;left:48px;top:444.7px;width:1px;height:3px;background:#d4dae2;"></div><div style="position:absolute;left:58px;top:444.7px;width:1px;height:3px;background:#d4dae2;"></div><div style="position:absolute;left:69px;top:444.7px;width:1px;height:3px;background:#d4dae2;"></div><div style="position:absolute;left:80px;top:444.7px;width:1px;height:3px;background:#d4dae2;"></div><div style="position:absolute;left:91px;top:444.7px;width:1px;height:3px;background:#d4dae2;"></div><div style="position:absolute;left:102px;top:444.7px;width:1px;height:3px;background:#d4dae2;"></div><div style="position:absolute;left:112px;top:444.7px;width:1px;height:3px;background:#d4dae2;"></div><div style="position:absolute;left:123px;top:444.7px;width:1px;height:3px;background:#d4dae2;"></div><div style="position:absolute;left:134px;top:444.7px;width:1px;height:3px;background:#d4dae2;"></div><div style="position:absolute;left:144px;top:444.7px;width:1px;height:3px;background:#d4dae2;"></div><svg style="position:absolute;left:73px;top:442px;" width="13" height="13" viewBox="0 0 13 13"><circle cx="6.5" cy="6.5" r="5.4" fill="#f8f7f2" stroke="#1a1a1a" stroke-width="1.2"/></svg><div style="position:absolute;left:182px;top:373px;width:4px;height:1px;background:#111;"></div><div style="position:absolute;left:181px;top:392px;width:5px;height:2px;background:#111;"></div><div style="position:absolute;left:182px;top:412px;width:4px;height:1px;background:#111;"></div><div style="position:absolute;left:165.10px;top:355.54px;font-size:12px;line-height:12px;white-space:pre;color:#222;font-weight:bold;transform:scaleX(0.9232);transform-origin:0 0;">1,0</div><div style="position:absolute;left:165.10px;top:388.39px;font-size:12px;line-height:12px;white-space:pre;color:#222;font-weight:bold;transform:scaleX(0.9232);transform-origin:0 0;">0,0</div><div style="position:absolute;left:161.30px;top:418.04px;font-size:12px;line-height:12px;white-space:pre;color:#222;font-weight:bold;transform:scaleX(0.9285);transform-origin:0 0;">-1,0</div><div style="position:absolute;left:182px;top:453px;width:4px;height:1px;background:#111;"></div><div style="position:absolute;left:181px;top:472px;width:5px;height:2px;background:#111;"></div><div style="position:absolute;left:182px;top:493px;width:4px;height:1px;background:#111;"></div><div style="position:absolute;left:165.10px;top:434.54px;font-size:12px;line-height:12px;white-space:pre;color:#222;font-weight:bold;transform:scaleX(0.9232);transform-origin:0 0;">1,0</div><div style="position:absolute;left:165.10px;top:468.39px;font-size:12px;line-height:12px;white-space:pre;color:#222;font-weight:bold;transform:scaleX(0.9232);transform-origin:0 0;">0,0</div><div style="position:absolute;left:161.30px;top:499.04px;font-size:12px;line-height:12px;white-space:pre;color:#222;font-weight:bold;transform:scaleX(0.9285);transform-origin:0 0;">-1,0</div><div style="position:absolute;left:1px;top:515px;width:1134px;height:4px;background:#aeb0de;"></div><div style="position:absolute;left:4px;top:519px;width:1127px;height:158px;background:#000;"></div><div style="position:absolute;left:5px;top:520px;width:150px;height:156px;background:#f9f9f9;"></div><div style="position:absolute;left:156px;top:520px;width:30px;height:156px;background:#f9f9f9;"></div><div style="position:absolute;left:187px;top:520px;width:943px;height:156px;background:#474a5c;"></div><div style="position:absolute;left:187px;top:520px;width:943px;height:17.5px;background:#3e4154;"></div><div style="position:absolute;left:156px;top:537px;width:30px;height:1px;background:#e4e4e4;"></div><svg style="position:absolute;left:12px;top:527px;" width="10" height="10" viewBox="0 0 10 10"><path d="M1.2 1.2 L8.8 8.8 M8.8 1.2 L1.2 8.8" stroke="#222" stroke-width="0.95"/></svg><div style="position:absolute;left:29.20px;top:526.72px;font-size:12.5px;line-height:12.5px;white-space:pre;color:#111;transform:scaleX(1.0092);transform-origin:0 0;">Titre 03</div><svg style="position:absolute;left:120px;top:529px;" width="10" height="6" viewBox="0 0 10 6"><path d="M1 5.5 L5 1.5 L9 5.5" stroke="#222" stroke-width="1.1" fill="none"/></svg><div style="position:absolute;left:137.8px;top:531.2px;width:1.7px;height:1.7px;background:#333;border-radius:1px;"></div><div style="position:absolute;left:142.4px;top:531.2px;width:1.7px;height:1.7px;background:#333;border-radius:1px;"></div><div style="position:absolute;left:147.0px;top:531.2px;width:1.7px;height:1.7px;background:#333;border-radius:1px;"></div><div style="position:absolute;left:9.2px;top:542.2px;width:68.5px;height:17.5px;background:#dcdde1;border-radius:3px;"></div><div style="position:absolute;left:82.2px;top:542.2px;width:68.6px;height:17.5px;background:#dcdde1;border-radius:3px;"></div><div style="position:absolute;left:29.40px;top:546.72px;font-size:12.5px;line-height:12.5px;white-space:pre;color:#222;transform:scaleX(1.0076);transform-origin:0 0;">Mute</div><div style="position:absolute;left:104.00px;top:546.72px;font-size:12.5px;line-height:12.5px;white-space:pre;color:#222;">Solo</div><div style="position:absolute;left:9.2px;top:564.2px;width:141.6px;height:21.4px;background:#dcdde1;border-radius:3px;"></div><div style="position:absolute;left:65.00px;top:569.02px;font-size:12.5px;line-height:12.5px;white-space:pre;color:#222;transform:scaleX(0.9454);transform-origin:0 0;">Effets</div><div style="position:absolute;left:15.2px;top:592.4px;width:4.8px;height:1.3px;background:#222;"></div><div style="position:absolute;left:137.29px;top:587.09px;font-size:11px;line-height:11px;white-space:pre;color:#222;font-weight:bold;">+</div><div style="position:absolute;left:14.8px;top:602px;width:130.7px;height:2px;background:#c8d0da;"></div><div style="position:absolute;left:16px;top:599px;width:1px;height:3px;background:#d4dae2;"></div><div style="position:absolute;left:26px;top:599px;width:1px;height:3px;background:#d4dae2;"></div><div style="position:absolute;left:37px;top:599px;width:1px;height:3px;background:#d4dae2;"></div><div style="position:absolute;left:48px;top:599px;width:1px;height:3px;background:#d4dae2;"></div><div style="position:absolute;left:58px;top:599px;width:1px;height:3px;background:#d4dae2;"></div><div style="position:absolute;left:69px;top:599px;width:1px;height:3px;background:#d4dae2;"></div><div style="position:absolute;left:80px;top:599px;width:1px;height:3px;background:#d4dae2;"></div><div style="position:absolute;left:91px;top:599px;width:1px;height:3px;background:#d4dae2;"></div><div style="position:absolute;left:102px;top:599px;width:1px;height:3px;background:#d4dae2;"></div><div style="position:absolute;left:112px;top:599px;width:1px;height:3px;background:#d4dae2;"></div><div style="position:absolute;left:123px;top:599px;width:1px;height:3px;background:#d4dae2;"></div><div style="position:absolute;left:134px;top:599px;width:1px;height:3px;background:#d4dae2;"></div><div style="position:absolute;left:144px;top:599px;width:1px;height:3px;background:#d4dae2;"></div><svg style="position:absolute;left:73px;top:596px;" width="13" height="13" viewBox="0 0 13 13"><circle cx="6.5" cy="6.5" r="5.4" fill="#f8f7f2" stroke="#1a1a1a" stroke-width="1.2"/></svg><div style="position:absolute;left:15.20px;top:615.41px;font-size:10.5px;line-height:10.5px;white-space:pre;color:#222;font-weight:bold;">G</div><div style="position:absolute;left:135.32px;top:615.41px;font-size:10.5px;line-height:10.5px;white-space:pre;color:#222;font-weight:bold;">D</div><div style="position:absolute;left:14.8px;top:631.7px;width:130.7px;height:2px;background:#c8d0da;"></div><div style="position:absolute;left:16px;top:628.7px;width:1px;height:3px;background:#d4dae2;"></div><div style="position:absolute;left:26px;top:628.7px;width:1px;height:3px;background:#d4dae2;"></div><div style="position:absolute;left:37px;top:628.7px;width:1px;height:3px;background:#d4dae2;"></div><div style="position:absolute;left:48px;top:628.7px;width:1px;height:3px;background:#d4dae2;"></div><div style="position:absolute;left:58px;top:628.7px;width:1px;height:3px;background:#d4dae2;"></div><div style="position:absolute;left:69px;top:628.7px;width:1px;height:3px;background:#d4dae2;"></div><div style="position:absolute;left:80px;top:628.7px;width:1px;height:3px;background:#d4dae2;"></div><div style="position:absolute;left:91px;top:628.7px;width:1px;height:3px;background:#d4dae2;"></div><div style="position:absolute;left:102px;top:628.7px;width:1px;height:3px;background:#d4dae2;"></div><div style="position:absolute;left:112px;top:628.7px;width:1px;height:3px;background:#d4dae2;"></div><div style="position:absolute;left:123px;top:628.7px;width:1px;height:3px;background:#d4dae2;"></div><div style="position:absolute;left:134px;top:628.7px;width:1px;height:3px;background:#d4dae2;"></div><div style="position:absolute;left:144px;top:628.7px;width:1px;height:3px;background:#d4dae2;"></div><svg style="position:absolute;left:73px;top:626px;" width="13" height="13" viewBox="0 0 13 13"><circle cx="6.5" cy="6.5" r="5.4" fill="#f8f7f2" stroke="#1a1a1a" stroke-width="1.2"/></svg><div style="position:absolute;left:182px;top:555px;width:4px;height:1px;background:#111;"></div><div style="position:absolute;left:181px;top:571px;width:5px;height:2px;background:#111;"></div><div style="position:absolute;left:182px;top:588px;width:4px;height:1px;background:#111;"></div><div style="position:absolute;left:165.10px;top:540.04px;font-size:12px;line-height:12px;white-space:pre;color:#222;font-weight:bold;transform:scaleX(0.9232);transform-origin:0 0;">1,0</div><div style="position:absolute;left:165.10px;top:567.14px;font-size:12px;line-height:12px;white-space:pre;color:#222;font-weight:bold;transform:scaleX(0.9232);transform-origin:0 0;">0,0</div><div style="position:absolute;left:161.30px;top:591.04px;font-size:12px;line-height:12px;white-space:pre;color:#222;font-weight:bold;transform:scaleX(0.9285);transform-origin:0 0;">-1,0</div><div style="position:absolute;left:182px;top:623px;width:4px;height:1px;background:#111;"></div><div style="position:absolute;left:181px;top:640px;width:5px;height:2px;background:#111;"></div><div style="position:absolute;left:182px;top:658px;width:4px;height:1px;background:#111;"></div><div style="position:absolute;left:165.10px;top:607.54px;font-size:12px;line-height:12px;white-space:pre;color:#222;font-weight:bold;transform:scaleX(0.9232);transform-origin:0 0;">1,0</div><div style="position:absolute;left:165.10px;top:636.39px;font-size:12px;line-height:12px;white-space:pre;color:#222;font-weight:bold;transform:scaleX(0.9232);transform-origin:0 0;">0,0</div><div style="position:absolute;left:161.30px;top:662.04px;font-size:12px;line-height:12px;white-space:pre;color:#222;font-weight:bold;transform:scaleX(0.9285);transform-origin:0 0;">-1,0</div><div style="position:absolute;left:156px;top:605px;width:30px;height:1px;background:#ddd;"></div><div style="position:absolute;left:187px;top:605px;width:473px;height:1.2px;background:#111;"></div><div style="position:absolute;left:0px;top:677px;width:1135px;height:34px;background:#313447;"></div><div style="position:absolute;left:0px;top:710.5px;width:1151px;height:18px;background:#eeeeee;"></div><div style="position:absolute;left:905.5px;top:719px;width:16.5px;height:1.5px;background:#8a8a8a;"></div><div style="position:absolute;left:187px;top:337.5px;width:471px;height:16.5px;background:#cdd2ef;border-top-right-radius:5px;"></div><div style="position:absolute;left:187px;top:354px;width:471px;height:160px;background:#eff0fb;"></div><div style="position:absolute;left:620.3px;top:354px;width:37.700000000000045px;height:160px;background:#c58aa9;"></div><div style="position:absolute;left:193.50px;top:339.34px;font-size:12px;line-height:12px;white-space:pre;color:#111;transform:scaleX(0.9866);transform-origin:0 0;">Titre 02</div><div style="position:absolute;left:634.5px;top:345.5px;width:2.2px;height:2.2px;background:#111;border-radius:1px;"></div><div style="position:absolute;left:640.3px;top:345.5px;width:2.2px;height:2.2px;background:#111;border-radius:1px;"></div><div style="position:absolute;left:646.1px;top:345.5px;width:2.2px;height:2.2px;background:#111;border-radius:1px;"></div><div style="position:absolute;left:187px;top:432px;width:943px;height:1.2px;background:#111;"></div><svg style="position:absolute;left:0px;top:0px;pointer-events:none;" width="1151" height="816" viewBox="0 0 1151 816"><path d="M187.5 383.2V399.4M188.5 377.0V401.5M189.5 383.2V399.6M190.5 383.2V403.4M191.5 383.2V404.6M192.5 380.8V400.7M193.5 382.5V404.2M194.5 386.9V401.2M195.5 381.1V398.2M196.5 378.8V399.3M197.5 382.9V403.0M198.5 382.1V400.0M199.5 384.1V403.9M200.5 378.1V403.6M201.5 380.2V399.1M202.5 384.5V400.4M203.5 385.2V399.3M204.5 380.6V403.7M205.5 380.9V405.9M206.5 382.1V401.2M207.5 381.6V403.2M208.5 384.9V404.8M209.5 382.3V400.6M210.5 386.2V399.1M211.5 386.7V404.4M212.5 382.8V397.9M213.5 386.4V398.3M214.5 385.6V398.9M215.5 383.3V402.3M216.5 385.1V401.5M217.5 388.2V399.3M218.5 385.7V399.8M219.5 385.1V399.1M220.5 379.7V399.5M221.5 383.7V403.0M222.5 383.5V398.4M223.5 382.4V403.2M224.5 383.8V397.9M225.5 385.2V401.6M226.5 386.4V397.7M227.5 385.8V401.2M228.5 386.7V400.1M229.5 383.3V399.9M230.5 382.6V402.2M231.5 386.7V404.1M232.5 386.7V403.5M233.5 385.3V398.9M234.5 384.7V400.9M235.5 381.1V400.3M236.5 384.8V405.0M237.5 384.4V397.9M238.5 383.9V401.0M239.5 382.8V398.7M240.5 382.5V399.0M241.5 387.0V404.5M242.5 385.3V397.1M243.5 383.5V400.2M244.5 381.8V400.7M245.5 379.6V397.8M246.5 381.5V400.4M247.5 384.5V402.7M248.5 383.2V398.3M249.5 384.9V404.1M250.5 382.2V399.1M251.5 384.4V399.6M252.5 387.4V398.5M253.5 386.9V406.9M254.5 385.0V400.5M255.5 385.5V400.1M256.5 387.1V398.8M257.5 386.7V397.4M258.5 386.9V399.1M259.5 382.5V397.5M260.5 388.3V398.0M261.5 385.8V399.4M262.5 388.5V399.4M263.5 384.8V402.7M264.5 385.9V398.3M265.5 384.6V397.8M266.5 384.2V400.6M267.5 384.9V400.1M268.5 388.1V398.5M269.5 382.6V398.2M270.5 387.7V400.1M271.5 388.7V400.5M272.5 386.5V398.9M273.5 382.9V399.2M274.5 382.1V401.1M275.5 384.4V402.5M276.5 385.1V396.6M277.5 381.9V397.9M278.5 382.7V397.9M279.5 382.6V402.0M280.5 382.7V400.7M281.5 384.7V398.4M282.5 386.2V398.2M283.5 382.9V401.9M284.5 384.4V397.6M285.5 381.5V403.5M286.5 382.2V399.8M287.5 387.0V400.4M288.5 376.7V398.6M289.5 386.7V400.0M290.5 385.8V401.1M291.5 383.9V399.4M292.5 385.2V399.0M293.5 384.2V401.9M294.5 385.1V405.6M295.5 387.4V399.7M296.5 383.6V400.9M297.5 377.8V401.9M298.5 384.9V399.0M299.5 381.6V398.8M300.5 383.6V398.6M301.5 386.7V405.5M302.5 383.2V399.2M303.5 386.2V397.5M304.5 384.3V396.5M305.5 383.9V401.3M306.5 371.5V401.6M307.5 378.5V400.6M308.5 387.0V398.0M309.5 386.4V402.8M310.5 382.5V398.0M311.5 383.0V401.5M312.5 384.6V400.1M313.5 381.9V401.1M314.5 382.2V401.0M315.5 387.9V399.4M316.5 382.7V403.4M317.5 386.9V400.6M318.5 385.3V402.7M319.5 379.6V400.7M320.5 383.9V407.5M321.5 383.0V400.9M322.5 385.0V402.2M323.5 380.6V401.9M324.5 381.7V399.9M325.5 380.7V401.9M326.5 383.0V397.4M327.5 386.7V396.9M328.5 382.9V400.5M329.5 387.3V400.4M330.5 385.1V397.3M331.5 388.2V397.1M332.5 387.8V398.9M333.5 384.7V398.4M334.5 386.1V400.2M335.5 388.8V397.2M336.5 384.2V400.7M337.5 389.1V396.7M338.5 388.6V399.6M339.5 386.2V396.0M340.5 387.8V396.7M341.5 385.8V397.2M342.5 389.2V396.8M343.5 387.1V398.5M344.5 386.6V398.0M345.5 389.1V395.2M346.5 386.6V395.1M347.5 388.0V395.1M348.5 389.3V395.9M349.5 386.8V396.5M350.5 388.2V396.9M351.5 388.3V397.6M352.5 384.9V394.8M353.5 389.0V396.0M354.5 388.2V395.2M355.5 388.3V395.5M356.5 387.0V395.5M357.5 388.7V400.7M358.5 388.2V395.9M359.5 387.8V397.8M360.5 389.0V401.2M361.5 388.7V398.0M362.5 385.3V394.9M363.5 388.3V396.0M364.5 387.9V397.8M365.5 388.3V395.3M366.5 387.8V395.3M367.5 389.2V395.6M368.5 388.5V400.2M369.5 387.5V398.3M370.5 385.4V397.7M371.5 389.1V399.5M372.5 385.0V399.4M373.5 385.2V400.6M374.5 387.0V399.5M375.5 386.5V396.7M376.5 385.7V397.2M377.5 383.7V401.8M378.5 386.3V396.8M379.5 384.8V396.6M380.5 384.6V399.9M381.5 385.4V397.9M382.5 386.0V397.0M383.5 385.6V398.6M384.5 387.6V398.3M385.5 383.5V396.7M386.5 385.0V397.1M387.5 387.2V399.7M388.5 385.0V395.9M389.5 385.8V403.4M390.5 387.2V401.2M391.5 382.9V397.2M392.5 386.4V397.3M393.5 388.5V398.7M394.5 387.3V400.3M395.5 386.3V399.0M396.5 387.1V396.5M397.5 386.5V396.4M398.5 380.7V401.5M399.5 380.6V400.7M400.5 386.1V401.8M401.5 382.9V397.6M402.5 385.4V396.7M403.5 384.1V398.3M404.5 383.7V402.4M405.5 384.8V400.7M406.5 385.1V396.9M407.5 382.2V396.9M408.5 380.5V399.0M409.5 386.9V397.5M410.5 386.5V396.9M411.5 383.3V401.5M412.5 385.9V399.7M413.5 383.5V399.3M414.5 386.7V408.8M415.5 382.5V399.2M416.5 381.6V398.2M417.5 379.7V401.3M418.5 382.7V402.2M419.5 381.2V404.3M420.5 385.3V403.5M421.5 385.4V400.7M422.5 387.0V402.1M423.5 386.7V405.7M424.5 382.6V403.0M425.5 387.7V398.6M426.5 383.8V399.2M427.5 381.5V399.0M428.5 382.4V402.0M429.5 384.8V396.8M430.5 381.4V402.0M431.5 384.4V398.4M432.5 386.1V401.2M433.5 384.8V397.0M434.5 387.9V401.2M435.5 384.4V404.8M436.5 387.9V399.2M437.5 388.9V405.8M438.5 385.2V401.0M439.5 382.7V401.4M440.5 385.6V398.3M441.5 388.5V398.3M442.5 388.0V398.7M443.5 385.6V399.1M444.5 387.3V399.1M445.5 378.9V398.5M446.5 387.6V398.7M447.5 387.9V398.7M448.5 385.2V396.3M449.5 386.4V397.2M450.5 386.4V399.9M451.5 384.8V397.3M452.5 381.4V397.7M453.5 383.4V396.6M454.5 385.0V401.7M455.5 385.2V397.5M456.5 384.9V403.2M457.5 387.0V398.3M458.5 386.1V398.3M459.5 386.1V396.3M460.5 384.7V399.2M461.5 387.0V398.6M462.5 383.8V397.4M463.5 386.9V398.8M464.5 386.5V399.5M465.5 387.9V398.7M466.5 387.1V399.8M467.5 383.4V400.0M468.5 385.9V400.0M469.5 385.0V399.9M470.5 383.9V398.3M471.5 388.0V400.5M472.5 388.9V401.9M473.5 385.0V402.7M474.5 382.9V399.6M475.5 388.3V400.2M476.5 386.1V398.9M477.5 386.3V402.2M478.5 384.5V397.7M479.5 385.2V396.3M480.5 387.7V400.4M481.5 383.9V401.1M482.5 388.8V397.8M483.5 386.0V400.4M484.5 386.9V398.0M485.5 385.0V398.6M486.5 387.0V397.9M487.5 384.8V400.4M488.5 386.5V399.7M489.5 385.8V398.9M490.5 386.3V400.1M491.5 384.6V401.4M492.5 385.1V401.2M493.5 387.7V400.1M494.5 383.8V404.4M495.5 382.7V402.6M496.5 386.3V403.9M497.5 384.1V398.9M498.5 385.1V401.3M499.5 380.6V398.2M500.5 383.2V400.7M501.5 383.5V400.9M502.5 386.2V404.6M503.5 385.8V402.8M504.5 384.7V406.5M505.5 378.4V404.3M506.5 382.8V402.5M507.5 385.4V399.5M508.5 386.1V402.0M509.5 382.7V400.1M510.5 379.9V399.6M511.5 380.8V404.0M512.5 383.0V401.9M513.5 381.7V405.3M514.5 383.0V401.8M515.5 383.9V403.8M516.5 385.2V407.0M517.5 383.9V404.8M518.5 384.2V401.5M519.5 380.6V398.4M520.5 386.8V403.6M521.5 382.6V397.2M522.5 382.4V403.3M523.5 387.0V401.2M524.5 385.8V397.6M525.5 384.9V404.6M526.5 382.9V401.0M527.5 383.2V404.1M528.5 386.5V401.3M529.5 388.0V399.2M530.5 385.3V403.5M531.5 387.7V398.5M532.5 378.3V399.0M533.5 382.8V398.1M534.5 385.3V397.3M535.5 379.1V401.0M536.5 382.5V401.4M537.5 380.6V402.2M538.5 385.3V401.0M539.5 385.0V401.0M540.5 385.9V401.4M541.5 385.0V399.0M542.5 383.2V399.3M543.5 383.0V405.3M544.5 385.8V400.1M545.5 388.3V400.5M546.5 384.2V401.4M547.5 384.6V398.0M548.5 387.0V399.1M549.5 383.6V399.2M550.5 384.4V401.3M551.5 378.6V398.8M552.5 380.7V400.0M553.5 387.6V399.1M554.5 386.0V398.1M555.5 388.4V402.1M556.5 384.0V399.9M557.5 387.4V399.8M558.5 383.1V397.1M559.5 380.6V398.4M560.5 383.8V399.0M561.5 386.9V399.8M562.5 387.2V396.2M563.5 385.9V399.2M564.5 388.5V397.0M565.5 387.2V400.9M566.5 388.7V397.0M567.5 385.2V399.4M568.5 385.0V399.5M569.5 387.3V396.4M570.5 387.7V396.7M571.5 388.6V402.8M572.5 389.9V397.0M573.5 388.0V396.5M574.5 385.8V401.6M575.5 384.9V396.7M576.5 388.4V395.6M577.5 388.3V397.0M578.5 388.4V395.9M579.5 386.1V396.3M580.5 387.2V395.6M581.5 386.8V397.4M582.5 385.9V398.7M583.5 389.1V397.7M584.5 386.1V397.2M585.5 388.2V397.8M586.5 382.1V397.6M587.5 387.6V396.5M588.5 384.5V396.8M589.5 385.6V398.1M590.5 384.3V399.2M591.5 383.8V398.5M592.5 384.0V400.6M593.5 386.1V399.2M594.5 387.0V404.9M595.5 386.3V400.3M596.5 386.2V399.8M597.5 386.6V399.4M598.5 388.4V400.6M599.5 386.6V401.2M600.5 386.4V399.1M601.5 386.2V400.7M602.5 387.2V400.1M603.5 383.8V401.2M604.5 388.5V400.8M605.5 384.6V397.2M606.5 380.8V399.3M607.5 385.5V398.3M608.5 385.2V404.0M609.5 388.7V398.7M610.5 387.2V401.7M611.5 387.2V395.6M612.5 383.5V399.6M613.5 388.3V397.9M614.5 387.4V399.1M615.5 388.5V397.3M616.5 383.4V395.8M617.5 387.9V397.5M618.5 383.2V404.6M619.5 388.4V400.3" stroke="#5e5ea8" stroke-width="1" fill="none"/><path d="M187.5 387.5V397.7M188.5 388.0V396.3M189.5 388.4V396.1M190.5 387.1V398.4M191.5 385.9V398.7M192.5 387.5V399.6M193.5 387.4V396.4M194.5 388.4V397.1M195.5 386.1V396.7M196.5 385.9V397.3M197.5 385.2V396.9M198.5 386.7V397.0M199.5 385.7V396.8M200.5 385.5V396.8M201.5 385.5V396.9M202.5 386.5V396.2M203.5 388.3V396.0M204.5 387.9V398.9M205.5 389.1V398.9M206.5 385.9V396.0M207.5 386.3V396.9M208.5 387.5V397.6M209.5 387.1V396.8M210.5 389.4V397.4M211.5 388.8V395.5M212.5 387.0V396.4M213.5 388.5V397.1M214.5 387.0V396.1M215.5 388.3V396.2M216.5 387.8V396.8M217.5 389.1V395.6M218.5 387.2V397.1M219.5 389.1V396.1M220.5 387.4V395.4M221.5 388.3V397.5M222.5 387.6V396.9M223.5 387.7V396.0M224.5 388.5V395.3M225.5 389.4V396.6M226.5 389.5V395.9M227.5 388.2V396.1M228.5 388.2V396.9M229.5 388.2V396.5M230.5 388.4V398.1M231.5 388.2V396.3M232.5 388.9V397.5M233.5 388.7V396.1M234.5 388.8V397.5M235.5 387.1V398.1M236.5 386.6V396.0M237.5 389.0V396.9M238.5 389.0V397.2M239.5 387.6V397.3M240.5 389.0V395.9M241.5 388.0V397.5M242.5 388.8V396.1M243.5 387.4V396.9M244.5 387.1V398.0M245.5 387.2V396.8M246.5 387.7V396.2M247.5 388.5V398.3M248.5 387.5V396.1M249.5 388.3V398.0M250.5 387.7V395.3M251.5 387.4V396.3M252.5 389.2V396.9M253.5 387.7V396.9M254.5 387.7V395.5M255.5 388.7V395.2M256.5 388.6V395.9M257.5 388.0V396.5M258.5 389.6V396.3M259.5 388.1V396.7M260.5 389.1V394.8M261.5 389.9V395.4M262.5 389.9V395.6M263.5 389.1V396.3M264.5 389.1V395.7M265.5 389.6V396.3M266.5 388.7V396.0M267.5 389.5V395.7M268.5 389.3V395.7M269.5 389.7V396.7M270.5 388.5V396.9M271.5 389.8V396.5M272.5 388.7V397.0M273.5 388.1V396.9M274.5 387.7V397.5M275.5 388.7V395.6M276.5 387.1V395.4M277.5 388.4V397.0M278.5 387.9V396.0M279.5 388.2V396.2M280.5 388.9V395.6M281.5 386.5V397.5M282.5 387.6V396.0M283.5 386.4V396.4M284.5 389.2V396.4M285.5 386.8V396.5M286.5 387.8V396.1M287.5 388.3V397.7M288.5 389.4V396.8M289.5 388.8V397.5M290.5 387.4V396.3M291.5 388.5V398.0M292.5 387.0V397.3M293.5 388.3V397.0M294.5 389.5V396.6M295.5 388.6V397.3M296.5 389.2V397.6M297.5 386.9V396.8M298.5 389.0V396.9M299.5 387.1V395.6M300.5 387.1V397.5M301.5 388.2V397.4M302.5 389.0V397.0M303.5 389.5V396.2M304.5 388.1V395.3M305.5 388.2V397.0M306.5 388.7V396.3M307.5 389.0V395.3M308.5 388.2V395.4M309.5 388.3V395.9M310.5 387.3V396.4M311.5 387.4V395.7M312.5 387.1V397.7M313.5 388.1V398.1M314.5 388.9V398.0M315.5 388.9V398.2M316.5 387.2V396.0M317.5 388.8V396.2M318.5 387.5V396.4M319.5 386.2V397.1M320.5 389.0V396.6M321.5 386.2V395.8M322.5 387.5V397.7M323.5 387.2V397.3M324.5 387.0V398.1M325.5 389.3V397.4M326.5 388.2V396.3M327.5 388.9V395.9M328.5 387.9V395.6M329.5 389.5V396.4M330.5 389.4V396.4M331.5 389.1V396.2M332.5 389.3V396.4M333.5 388.6V395.0M334.5 388.1V395.9M335.5 389.8V396.0M336.5 388.2V396.1M337.5 390.4V394.9M338.5 390.2V396.3M339.5 389.9V394.6M340.5 390.2V394.4M341.5 389.5V394.7M342.5 390.2V395.6M343.5 389.9V395.0M344.5 389.9V395.1M345.5 390.4V394.1M346.5 390.4V394.2M347.5 390.1V394.7M348.5 391.1V394.6M349.5 390.0V394.6M350.5 390.4V395.1M351.5 390.1V395.0M352.5 389.9V394.0M353.5 390.9V394.5M354.5 390.7V394.3M355.5 390.0V394.1M356.5 390.4V394.2M357.5 390.1V394.1M358.5 390.7V394.7M359.5 390.5V395.1M360.5 389.7V395.3M361.5 389.4V395.6M362.5 389.2V394.2M363.5 390.2V394.2M364.5 390.2V394.9M365.5 389.2V394.6M366.5 390.0V394.4M367.5 389.9V394.9M368.5 389.6V396.5M369.5 390.4V395.6M370.5 389.5V396.3M371.5 389.7V395.7M372.5 388.8V395.5M373.5 389.4V396.2M374.5 388.8V396.5M375.5 390.1V395.5M376.5 390.0V395.1M377.5 388.1V395.2M378.5 389.7V395.7M379.5 389.8V395.6M380.5 388.8V396.8M381.5 388.6V395.8M382.5 389.1V394.8M383.5 389.2V397.0M384.5 390.0V397.0M385.5 388.5V395.9M386.5 389.2V395.9M387.5 388.5V395.8M388.5 388.5V395.1M389.5 389.9V395.6M390.5 388.3V396.3M391.5 389.7V396.1M392.5 388.2V396.1M393.5 389.6V395.7M394.5 389.1V396.9M395.5 389.6V396.7M396.5 389.2V395.0M397.5 388.6V395.4M398.5 388.2V396.9M399.5 388.5V395.7M400.5 389.3V396.6M401.5 388.4V396.7M402.5 387.4V395.6M403.5 388.2V396.7M404.5 388.6V395.2M405.5 389.5V397.3M406.5 387.6V395.9M407.5 387.3V395.6M408.5 387.2V398.1M409.5 388.1V395.5M410.5 388.3V395.7M411.5 386.9V398.3M412.5 388.7V396.6M413.5 386.9V395.7M414.5 388.5V397.1M415.5 386.5V396.7M416.5 387.9V397.2M417.5 386.7V396.8M418.5 386.9V398.0M419.5 387.5V395.6M420.5 386.4V398.4M421.5 388.1V395.9M422.5 389.2V395.9M423.5 388.0V397.9M424.5 386.9V396.8M425.5 389.1V396.4M426.5 387.3V396.3M427.5 389.0V397.3M428.5 388.1V396.7M429.5 389.6V395.9M430.5 389.5V397.5M431.5 388.5V395.3M432.5 387.7V396.7M433.5 388.8V395.5M434.5 389.0V396.9M435.5 389.0V396.3M436.5 389.7V395.7M437.5 389.8V396.8M438.5 390.1V396.8M439.5 388.9V396.4M440.5 390.0V396.1M441.5 390.1V395.2M442.5 388.6V396.5M443.5 388.5V394.7M444.5 390.4V396.3M445.5 388.8V396.6M446.5 389.2V395.7M447.5 390.1V395.1M448.5 389.2V395.2M449.5 388.9V396.4M450.5 388.1V395.5M451.5 388.5V395.5M452.5 388.4V394.8M453.5 388.1V395.6M454.5 388.6V396.9M455.5 387.9V395.0M456.5 388.7V396.7M457.5 388.9V395.3M458.5 388.6V397.0M459.5 389.0V395.1M460.5 388.7V396.6M461.5 388.8V396.6M462.5 388.8V395.9M463.5 388.7V397.5M464.5 387.5V395.8M465.5 388.6V396.0M466.5 389.7V396.3M467.5 387.9V395.6M468.5 388.6V397.4M469.5 389.5V395.6M470.5 388.2V397.0M471.5 390.0V396.3M472.5 389.9V396.6M473.5 388.2V397.4M474.5 388.0V396.3M475.5 389.7V396.8M476.5 389.4V395.3M477.5 389.4V397.2M478.5 389.0V395.0M479.5 388.7V395.5M480.5 389.1V395.8M481.5 388.8V396.4M482.5 389.6V396.7M483.5 389.3V396.8M484.5 387.7V397.1M485.5 389.0V396.4M486.5 388.2V395.3M487.5 387.5V397.2M488.5 389.3V397.4M489.5 388.0V396.3M490.5 389.0V397.3M491.5 387.0V397.5M492.5 387.8V397.2M493.5 388.6V397.5M494.5 388.3V398.4M495.5 387.6V397.7M496.5 387.7V398.7M497.5 387.5V397.4M498.5 386.6V397.1M499.5 386.0V397.0M500.5 387.8V396.8M501.5 386.1V399.2M502.5 387.3V398.4M503.5 387.8V399.1M504.5 386.7V399.6M505.5 387.3V399.1M506.5 385.7V397.0M507.5 386.9V398.3M508.5 388.6V396.5M509.5 387.1V397.2M510.5 388.8V397.3M511.5 385.6V398.9M512.5 387.1V397.8M513.5 387.8V396.2M514.5 386.5V398.7M515.5 386.0V396.3M516.5 387.2V399.4M517.5 387.1V399.2M518.5 386.1V398.2M519.5 389.1V396.6M520.5 388.9V397.9M521.5 386.7V396.2M522.5 386.7V396.3M523.5 388.6V397.9M524.5 387.3V395.8M525.5 387.4V397.4M526.5 389.4V395.6M527.5 388.1V396.9M528.5 389.5V396.0M529.5 389.5V397.8M530.5 389.5V397.8M531.5 389.1V397.2M532.5 388.2V396.4M533.5 388.6V396.8M534.5 387.2V395.4M535.5 389.2V396.4M536.5 388.0V398.0M537.5 387.0V395.7M538.5 388.0V395.8M539.5 389.2V397.7M540.5 386.9V397.1M541.5 387.0V396.5M542.5 389.2V397.5M543.5 387.6V397.0M544.5 388.1V397.8M545.5 389.5V396.9M546.5 387.6V397.9M547.5 387.5V397.1M548.5 388.2V395.5M549.5 388.4V396.7M550.5 388.7V398.1M551.5 387.6V396.5M552.5 389.4V395.6M553.5 389.7V397.7M554.5 387.4V397.3M555.5 389.3V396.8M556.5 387.6V397.1M557.5 388.6V395.8M558.5 388.3V396.1M559.5 389.2V395.3M560.5 388.7V396.9M561.5 388.7V395.6M562.5 388.9V395.3M563.5 390.1V395.0M564.5 389.7V395.6M565.5 389.1V396.2M566.5 389.3V395.1M567.5 388.9V395.6M568.5 388.7V395.5M569.5 389.4V394.7M570.5 389.2V395.9M571.5 389.8V395.3M572.5 390.5V395.9M573.5 389.8V394.7M574.5 389.7V394.3M575.5 389.4V395.8M576.5 389.8V394.5M577.5 389.8V395.2M578.5 390.4V394.4M579.5 390.6V395.0M580.5 390.4V394.5M581.5 389.9V396.0M582.5 390.0V396.2M583.5 390.0V396.2M584.5 388.5V396.5M585.5 389.0V396.5M586.5 390.1V395.7M587.5 389.1V395.7M588.5 389.0V394.9M589.5 388.2V396.3M590.5 387.8V396.8M591.5 387.8V395.2M592.5 389.0V397.5M593.5 387.6V395.1M594.5 388.0V397.1M595.5 387.4V397.7M596.5 388.7V396.4M597.5 389.3V395.8M598.5 389.8V395.3M599.5 387.6V395.7M600.5 388.0V396.3M601.5 387.6V395.5M602.5 388.1V396.3M603.5 388.4V396.0M604.5 389.4V396.3M605.5 389.3V396.3M606.5 389.4V396.2M607.5 389.6V395.3M608.5 388.8V396.5M609.5 389.3V395.2M610.5 389.1V396.3M611.5 389.9V394.9M612.5 390.0V395.7M613.5 390.3V395.1M614.5 389.5V395.4M615.5 389.3V395.4M616.5 390.1V394.5M617.5 390.0V394.5M618.5 389.8V394.1M619.5 391.0V395.2" stroke="#6363d4" stroke-width="1" fill="none"/><path d="M620.5 389.1V397.1M621.5 389.6V395.6M622.5 388.0V396.0M623.5 389.4V397.4M624.5 390.0V395.4M625.5 386.6V396.1M626.5 389.9V396.5M627.5 387.1V395.5M628.5 387.7V397.3M629.5 387.6V395.7M630.5 390.2V394.9M631.5 390.6V395.6M632.5 389.0V397.2M633.5 391.1V394.4M634.5 388.7V394.6M635.5 389.4V395.5M636.5 390.8V394.8M637.5 390.1V393.7M638.5 390.7V393.5M639.5 391.3V394.5M640.5 390.1V393.7M641.5 390.9V393.9M642.5 390.7V395.0M643.5 391.8V394.6M644.5 391.2V393.8M645.5 391.5V393.9M646.5 391.8V393.0M647.5 392.0V393.2M648.5 391.8V393.3M649.5 391.6V393.0M650.5 392.0V393.0M651.5 391.9V392.9M652.5 392.0V393.0M653.5 392.0V393.0M654.5 392.0V393.0M655.5 391.9V392.9M656.5 392.0V393.0M657.5 392.0V393.0" stroke="#8a5a96" stroke-width="1" fill="none"/><path d="M620.5 389.7V394.9M621.5 390.5V394.6M622.5 390.9V393.9M623.5 391.1V394.6M624.5 391.2V394.4M625.5 391.1V393.8M626.5 390.4V394.0M627.5 390.9V394.7M628.5 391.1V394.1M629.5 390.5V393.9M630.5 390.7V393.8M631.5 391.1V393.6M632.5 391.4V394.2M633.5 391.5V394.0M634.5 391.5V393.7M635.5 390.9V394.0M636.5 391.3V394.1M637.5 391.1V393.4M638.5 391.4V393.2M639.5 391.6V393.4M640.5 391.9V393.2M641.5 391.9V393.2M642.5 391.8V393.4M643.5 391.9V393.1M644.5 392.0V393.2M645.5 392.0V393.2M646.5 391.9V392.9M647.5 392.1V393.1M648.5 392.0V393.0M649.5 392.0V393.0M650.5 392.0V393.0M651.5 392.0V393.0M652.5 392.0V393.0M653.5 392.0V393.0M654.5 392.0V393.0M655.5 392.0V393.0M656.5 392.0V393.0M657.5 392.0V393.0" stroke="#8a4c9c" stroke-width="1" fill="none"/><path d="M187.5 467.3V478.3M188.5 467.1V476.8M189.5 465.7V478.7M190.5 467.6V476.9M191.5 467.9V477.2M192.5 465.9V477.5M193.5 468.3V478.9M194.5 463.9V479.1M195.5 465.1V481.2M196.5 467.2V480.9M197.5 469.1V478.2M198.5 465.4V479.0M199.5 467.4V477.4M200.5 466.0V476.3M201.5 468.0V476.9M202.5 467.1V476.1M203.5 468.9V478.2M204.5 465.8V475.7M205.5 468.0V476.9M206.5 466.7V477.0M207.5 464.6V479.6M208.5 469.2V483.7M209.5 469.8V478.5M210.5 468.4V479.1M211.5 467.0V477.0M212.5 469.6V477.5M213.5 468.4V476.9M214.5 465.9V476.5M215.5 467.6V477.2M216.5 468.1V477.0M217.5 468.6V479.0M218.5 462.8V477.3M219.5 467.2V477.5M220.5 467.6V476.5M221.5 467.3V477.6M222.5 467.8V476.6M223.5 465.0V479.4M224.5 467.7V479.6M225.5 468.1V477.8M226.5 467.2V482.8M227.5 467.1V478.7M228.5 466.0V477.7M229.5 466.7V480.1M230.5 465.1V479.0M231.5 464.2V480.2M232.5 463.6V478.2M233.5 466.7V478.3M234.5 467.8V478.8M235.5 459.7V479.2M236.5 466.8V478.5M237.5 467.5V486.5M238.5 465.0V480.8M239.5 466.3V479.1M240.5 462.7V482.6M241.5 466.0V477.7M242.5 465.3V477.2M243.5 465.3V478.8M244.5 462.5V480.2M245.5 465.0V477.8M246.5 466.3V478.8M247.5 464.8V482.4M248.5 463.8V481.6M249.5 465.5V481.9M250.5 467.2V485.7M251.5 464.8V477.1M252.5 468.6V478.4M253.5 465.9V478.3M254.5 466.6V480.2M255.5 465.9V477.1M256.5 468.5V476.9M257.5 468.1V480.2M258.5 464.7V478.7M259.5 460.2V479.2M260.5 466.3V480.1M261.5 465.5V479.0M262.5 468.8V477.9M263.5 464.1V484.3M264.5 461.3V479.2M265.5 469.2V477.5M266.5 466.5V483.4M267.5 468.5V478.1M268.5 459.4V479.8M269.5 463.4V477.2M270.5 466.5V476.9M271.5 467.9V478.5M272.5 467.7V479.2M273.5 466.4V478.7M274.5 469.1V480.3M275.5 466.5V481.0M276.5 466.4V480.6M277.5 467.0V477.4M278.5 463.7V476.3M279.5 468.6V476.9M280.5 463.5V476.6M281.5 464.4V478.2M282.5 463.5V479.5M283.5 466.3V479.9M284.5 465.7V477.9M285.5 466.5V478.2M286.5 468.2V476.9M287.5 467.0V479.2M288.5 466.1V482.0M289.5 463.7V477.8M290.5 468.8V477.9M291.5 467.5V476.1M292.5 467.2V479.6M293.5 469.2V476.7M294.5 468.4V480.1M295.5 466.2V477.2M296.5 466.3V477.9M297.5 466.5V478.1M298.5 468.0V481.1M299.5 466.9V476.7M300.5 469.2V477.7M301.5 468.8V477.3M302.5 467.2V476.2M303.5 465.9V477.4M304.5 468.4V477.7M305.5 468.2V478.4M306.5 455.5V478.6M307.5 469.0V477.2M308.5 467.3V476.6M309.5 468.7V476.7M310.5 466.5V478.6M311.5 467.3V478.4M312.5 461.9V477.8M313.5 467.5V478.4M314.5 467.9V478.4M315.5 468.1V479.2M316.5 462.8V481.1M317.5 466.1V480.1M318.5 464.6V482.8M319.5 467.2V479.2M320.5 463.7V484.8M321.5 464.1V485.1M322.5 463.1V480.7M323.5 462.9V485.3M324.5 456.3V480.2M325.5 462.1V486.5M326.5 460.8V477.6M327.5 456.6V480.6M328.5 466.4V484.3M329.5 456.5V484.5M330.5 464.6V481.0M331.5 462.3V482.8M332.5 457.8V483.4M333.5 466.9V479.9M334.5 460.1V487.2M335.5 457.5V485.5M336.5 463.9V482.9M337.5 464.7V480.7M338.5 468.1V478.5M339.5 460.4V482.7M340.5 463.4V480.6M341.5 464.2V482.3M342.5 466.5V482.2M343.5 466.6V480.7M344.5 458.6V482.2M345.5 466.8V478.1M346.5 456.8V477.5M347.5 461.2V479.9M348.5 464.8V476.3M349.5 463.4V477.8M350.5 462.7V479.4M351.5 466.0V479.2M352.5 467.5V478.6M353.5 466.6V481.5M354.5 467.2V481.0M355.5 464.1V476.9M356.5 463.7V481.8M357.5 460.5V479.2M358.5 462.3V481.8M359.5 463.0V479.3M360.5 463.6V481.4M361.5 461.9V481.7M362.5 462.6V478.1M363.5 468.0V478.1M364.5 461.5V480.0M365.5 464.0V489.5M366.5 460.2V480.8M367.5 464.3V482.2M368.5 459.5V479.7M369.5 463.0V480.1M370.5 463.2V479.0M371.5 462.7V483.1M372.5 462.9V480.8M373.5 465.6V481.0M374.5 466.2V478.0M375.5 465.2V481.3M376.5 460.6V482.1M377.5 465.8V481.9M378.5 466.0V484.5M379.5 464.0V477.9M380.5 460.4V482.8M381.5 461.2V482.7M382.5 467.5V482.3M383.5 465.2V480.1M384.5 462.0V482.9M385.5 461.7V485.8M386.5 463.8V479.1M387.5 465.2V477.5M388.5 464.0V480.2M389.5 465.8V479.1M390.5 464.5V481.2M391.5 462.0V478.3M392.5 467.3V479.3M393.5 467.4V477.1M394.5 465.4V479.1M395.5 466.9V485.2M396.5 465.9V477.9M397.5 467.4V477.0M398.5 467.9V479.3M399.5 466.0V479.1M400.5 467.4V476.4M401.5 462.2V477.1M402.5 468.5V486.0M403.5 468.8V478.0M404.5 469.1V476.0M405.5 465.1V480.4M406.5 469.1V481.5M407.5 466.9V480.2M408.5 467.6V477.5M409.5 464.8V476.6M410.5 464.9V479.0M411.5 462.7V478.4M412.5 463.4V478.3M413.5 465.8V479.2M414.5 467.8V479.8M415.5 466.1V481.4M416.5 466.0V479.5M417.5 458.3V479.9M418.5 464.2V482.6M419.5 464.5V477.2M420.5 461.6V479.6M421.5 465.4V482.2M422.5 460.2V478.3M423.5 459.4V479.5M424.5 467.0V478.5M425.5 468.6V479.0M426.5 468.8V478.7M427.5 468.6V484.7M428.5 460.7V481.0M429.5 464.6V477.6M430.5 464.9V483.4M431.5 461.4V480.0M432.5 466.3V478.0M433.5 463.8V477.8M434.5 464.3V476.0M435.5 468.1V478.2M436.5 465.2V477.0M437.5 466.6V482.5M438.5 464.1V478.8M439.5 464.0V477.7M440.5 465.7V478.7M441.5 464.7V480.9M442.5 466.0V478.3M443.5 460.6V478.4M444.5 468.0V476.9M445.5 462.7V478.6M446.5 465.4V483.0M447.5 465.1V481.8M448.5 464.5V480.4M449.5 463.9V483.1M450.5 467.9V477.5M451.5 466.9V482.9M452.5 462.6V479.0M453.5 461.9V481.8M454.5 466.5V478.2M455.5 459.6V481.4M456.5 466.1V490.3M457.5 465.4V479.1M458.5 461.2V479.1M459.5 465.7V483.7M460.5 459.7V481.3M461.5 465.8V483.6M462.5 462.5V480.1M463.5 465.2V481.6M464.5 466.7V484.5M465.5 467.3V479.7M466.5 465.2V483.3M467.5 462.7V480.7M468.5 463.9V479.9M469.5 461.1V479.5M470.5 464.4V487.5M471.5 461.1V484.1M472.5 460.8V476.7M473.5 464.7V479.2M474.5 467.5V480.5M475.5 463.1V480.4M476.5 462.8V478.3M477.5 464.8V482.8M478.5 462.7V478.7M479.5 467.0V481.1M480.5 465.1V479.9M481.5 465.9V478.6M482.5 465.9V480.9M483.5 467.9V482.3M484.5 464.0V478.9M485.5 467.4V478.1M486.5 467.2V479.5M487.5 467.3V477.3M488.5 460.4V479.2M489.5 465.2V479.2M490.5 465.9V480.3M491.5 467.5V478.2M492.5 467.9V485.7M493.5 464.5V475.8M494.5 469.0V478.6M495.5 466.3V477.9M496.5 465.1V477.2M497.5 463.8V483.6M498.5 464.1V480.8M499.5 465.0V480.0M500.5 466.5V477.5M501.5 464.4V476.6M502.5 465.5V484.1M503.5 468.4V478.9M504.5 465.6V478.3M505.5 463.3V478.9M506.5 465.9V478.0M507.5 466.3V480.5M508.5 468.5V476.8M509.5 465.4V478.5M510.5 465.1V478.1M511.5 465.1V479.9M512.5 466.3V476.9M513.5 466.8V477.4M514.5 468.3V479.7M515.5 466.0V477.9M516.5 468.0V478.3M517.5 467.9V479.0M518.5 466.9V477.8M519.5 466.2V476.1M520.5 468.9V476.6M521.5 468.4V474.9M522.5 468.6V475.5M523.5 466.2V476.6M524.5 469.1V479.0M525.5 469.2V475.2M526.5 469.6V475.8M527.5 466.9V476.7M528.5 470.2V477.7M529.5 469.7V475.6M530.5 469.4V475.3M531.5 468.8V474.6M532.5 468.2V477.1M533.5 468.3V475.4M534.5 464.1V474.8M535.5 468.8V477.5M536.5 467.8V477.6M537.5 466.0V476.9M538.5 466.2V479.7M539.5 466.7V478.9M540.5 466.4V478.2M541.5 467.1V476.9M542.5 464.8V477.1M543.5 468.5V477.7M544.5 460.8V479.0M545.5 467.5V481.1M546.5 466.8V479.0M547.5 468.2V482.1M548.5 467.1V482.3M549.5 464.7V482.1M550.5 466.6V477.5M551.5 465.5V482.5M552.5 467.3V479.3M553.5 465.2V481.7M554.5 460.9V478.8M555.5 461.6V480.9M556.5 466.3V482.9M557.5 465.6V484.2M558.5 461.8V486.2M559.5 461.2V480.9M560.5 462.3V479.6M561.5 468.3V483.7M562.5 467.0V479.5M563.5 465.8V483.4M564.5 463.3V478.4M565.5 465.1V479.8M566.5 464.7V485.4M567.5 467.7V483.1M568.5 462.5V481.6M569.5 464.5V480.0M570.5 465.7V480.7M571.5 461.5V477.7M572.5 465.9V479.8M573.5 464.9V481.0M574.5 465.2V480.8M575.5 466.9V480.9M576.5 465.8V480.2M577.5 468.3V478.5M578.5 463.6V479.5M579.5 463.4V478.8M580.5 467.9V478.1M581.5 467.8V480.6M582.5 466.6V480.8M583.5 462.7V477.9M584.5 464.6V479.6M585.5 461.9V479.2M586.5 466.2V477.2M587.5 465.6V478.0M588.5 457.6V481.0M589.5 462.8V480.4M590.5 468.1V477.9M591.5 467.2V480.9M592.5 463.1V481.4M593.5 465.0V478.4M594.5 460.8V478.8M595.5 465.8V479.2M596.5 464.8V480.5M597.5 464.4V479.7M598.5 464.5V476.3M599.5 462.9V479.4M600.5 468.5V476.8M601.5 460.2V479.3M602.5 466.7V476.2M603.5 463.9V479.5M604.5 467.9V476.2M605.5 467.8V476.0M606.5 468.7V475.7M607.5 466.0V478.4M608.5 466.1V475.7M609.5 468.5V475.4M610.5 468.8V479.1M611.5 464.5V476.0M612.5 469.4V478.3M613.5 467.7V476.7M614.5 469.8V476.7M615.5 469.8V476.5M616.5 469.8V475.6M617.5 468.3V478.8M618.5 470.7V475.1M619.5 469.9V477.8" stroke="#5e5ea8" stroke-width="1" fill="none"/><path d="M187.5 470.2V475.9M188.5 470.3V474.8M189.5 468.7V475.9M190.5 469.1V476.1M191.5 469.0V475.0M192.5 469.7V475.9M193.5 469.2V475.2M194.5 468.4V475.9M195.5 468.9V476.7M196.5 468.3V475.4M197.5 470.2V475.8M198.5 469.5V475.3M199.5 468.7V475.9M200.5 468.7V474.8M201.5 470.3V475.7M202.5 470.5V475.2M203.5 469.7V475.3M204.5 469.6V475.0M205.5 469.3V475.5M206.5 469.9V475.1M207.5 470.3V474.8M208.5 470.3V475.8M209.5 470.5V475.7M210.5 469.2V475.3M211.5 469.6V475.0M212.5 470.3V474.4M213.5 470.0V475.6M214.5 469.4V475.7M215.5 470.2V475.3M216.5 470.2V475.5M217.5 470.6V475.5M218.5 469.3V475.8M219.5 470.8V474.8M220.5 469.8V474.3M221.5 469.6V474.8M222.5 469.0V474.8M223.5 470.6V475.8M224.5 468.9V476.2M225.5 469.3V475.4M226.5 469.0V476.0M227.5 470.4V476.2M228.5 468.7V475.4M229.5 469.6V476.2M230.5 469.9V476.1M231.5 468.9V476.2M232.5 468.4V477.2M233.5 467.6V476.8M234.5 468.6V475.6M235.5 468.5V476.7M236.5 467.8V476.0M237.5 468.8V477.1M238.5 469.5V477.2M239.5 469.4V476.1M240.5 467.1V476.4M241.5 468.9V475.5M242.5 468.9V475.6M243.5 469.4V477.1M244.5 466.9V475.7M245.5 467.3V475.4M246.5 468.5V477.7M247.5 468.5V477.3M248.5 468.4V477.4M249.5 469.7V476.5M250.5 468.1V475.7M251.5 467.7V475.8M252.5 469.4V476.1M253.5 469.4V475.7M254.5 469.9V476.4M255.5 469.2V476.2M256.5 469.8V475.4M257.5 468.9V476.8M258.5 470.1V475.8M259.5 468.2V476.8M260.5 468.0V476.2M261.5 468.3V475.7M262.5 469.7V475.7M263.5 468.5V476.7M264.5 469.9V475.5M265.5 469.9V476.3M266.5 469.3V476.7M267.5 469.3V475.9M268.5 468.6V476.6M269.5 468.3V476.1M270.5 469.0V475.2M271.5 469.0V476.9M272.5 469.8V476.4M273.5 469.3V476.6M274.5 470.0V476.5M275.5 469.3V476.9M276.5 468.5V475.2M277.5 470.1V476.5M278.5 468.5V474.9M279.5 469.6V475.5M280.5 468.5V475.7M281.5 468.1V476.7M282.5 467.9V476.6M283.5 468.2V476.9M284.5 468.9V475.2M285.5 468.6V476.0M286.5 470.0V474.9M287.5 469.5V475.4M288.5 469.4V477.0M289.5 468.3V474.9M290.5 469.9V476.4M291.5 469.6V474.7M292.5 468.4V476.6M293.5 469.9V475.5M294.5 469.8V476.2M295.5 469.9V476.0M296.5 470.0V475.2M297.5 470.2V474.4M298.5 469.8V475.6M299.5 469.2V474.9M300.5 469.8V474.3M301.5 470.5V475.1M302.5 469.9V475.3M303.5 469.2V475.6M304.5 470.2V475.8M305.5 470.1V474.9M306.5 470.0V475.6M307.5 470.7V474.7M308.5 469.5V474.7M309.5 470.0V474.7M310.5 469.9V475.9M311.5 469.9V475.0M312.5 468.6V475.8M313.5 468.6V476.4M314.5 469.1V477.2M315.5 469.7V476.8M316.5 469.0V477.0M317.5 468.2V478.3M318.5 467.2V477.2M319.5 468.8V477.8M320.5 468.5V477.8M321.5 468.4V478.7M322.5 468.8V476.7M323.5 466.8V478.3M324.5 465.7V478.5M325.5 465.4V479.1M326.5 468.4V476.4M327.5 467.1V478.2M328.5 468.5V476.5M329.5 467.1V477.3M330.5 466.3V477.8M331.5 465.9V478.1M332.5 467.4V478.6M333.5 468.4V476.3M334.5 466.5V478.9M335.5 468.2V477.1M336.5 467.8V478.1M337.5 467.2V477.4M338.5 469.2V476.0M339.5 466.7V477.5M340.5 466.7V478.4M341.5 469.5V476.6M342.5 468.2V476.9M343.5 469.4V475.9M344.5 468.1V477.0M345.5 468.5V476.6M346.5 467.5V475.4M347.5 466.8V476.5M348.5 469.2V475.4M349.5 467.6V476.3M350.5 468.5V478.1M351.5 469.0V477.0M352.5 469.3V475.5M353.5 468.9V478.0M354.5 469.1V475.7M355.5 466.8V475.8M356.5 468.0V478.0M357.5 467.4V477.3M358.5 467.1V476.6M359.5 468.7V477.4M360.5 467.1V475.9M361.5 468.9V477.3M362.5 466.6V475.8M363.5 469.2V477.0M364.5 466.0V476.4M365.5 467.3V477.5M366.5 468.0V477.3M367.5 468.1V478.2M368.5 466.9V478.1M369.5 468.2V477.9M370.5 465.9V477.2M371.5 467.6V476.8M372.5 466.6V476.5M373.5 467.4V478.1M374.5 469.0V476.8M375.5 467.3V478.9M376.5 465.9V477.6M377.5 466.8V478.1M378.5 468.5V476.7M379.5 469.2V476.6M380.5 467.4V478.7M381.5 467.2V477.1M382.5 468.6V477.2M383.5 468.1V475.8M384.5 467.3V476.4M385.5 466.7V477.8M386.5 467.1V477.7M387.5 467.0V476.0M388.5 467.5V476.9M389.5 468.3V477.0M390.5 468.7V476.3M391.5 469.8V475.1M392.5 469.2V476.4M393.5 469.4V476.3M394.5 469.7V476.4M395.5 468.3V476.1M396.5 469.1V475.0M397.5 469.3V476.3M398.5 469.0V475.2M399.5 469.9V475.9M400.5 469.5V475.5M401.5 468.5V475.8M402.5 469.2V476.0M403.5 469.5V475.9M404.5 469.9V474.9M405.5 468.3V477.1M406.5 470.0V476.7M407.5 468.9V475.9M408.5 469.4V476.3M409.5 467.7V475.4M410.5 469.7V477.1M411.5 468.7V476.6M412.5 468.3V476.1M413.5 468.2V476.8M414.5 469.9V475.4M415.5 469.3V476.1M416.5 467.4V477.5M417.5 467.3V475.5M418.5 468.0V476.3M419.5 468.1V475.4M420.5 468.1V475.4M421.5 468.7V477.3M422.5 469.0V476.9M423.5 468.2V476.7M424.5 469.2V475.5M425.5 469.8V476.0M426.5 469.7V476.7M427.5 469.8V476.7M428.5 469.4V476.1M429.5 469.2V476.5M430.5 468.1V477.3M431.5 467.7V475.8M432.5 470.0V476.7M433.5 468.4V476.9M434.5 469.6V475.2M435.5 469.9V475.1M436.5 467.7V475.2M437.5 467.6V476.6M438.5 469.4V475.5M439.5 468.6V475.3M440.5 467.7V477.0M441.5 469.5V477.3M442.5 468.4V476.9M443.5 468.9V476.6M444.5 469.1V475.9M445.5 468.6V477.2M446.5 467.7V477.2M447.5 467.2V476.7M448.5 468.3V477.8M449.5 468.7V477.4M450.5 469.6V476.3M451.5 468.9V477.5M452.5 468.9V476.0M453.5 467.7V478.0M454.5 467.8V476.2M455.5 466.5V477.7M456.5 467.8V477.8M457.5 467.6V477.6M458.5 466.3V476.3M459.5 469.1V476.5M460.5 466.3V475.8M461.5 468.8V479.1M462.5 467.9V477.6M463.5 467.5V477.6M464.5 467.8V476.7M465.5 469.0V478.6M466.5 468.2V478.8M467.5 468.6V477.3M468.5 466.9V478.0M469.5 466.3V476.4M470.5 468.7V478.0M471.5 466.3V477.5M472.5 469.0V475.6M473.5 469.4V478.1M474.5 469.3V477.6M475.5 467.0V476.2M476.5 467.2V476.7M477.5 467.4V477.7M478.5 467.8V476.5M479.5 469.8V475.8M480.5 469.2V475.3M481.5 469.8V476.9M482.5 469.9V477.2M483.5 469.2V476.2M484.5 469.1V475.3M485.5 469.0V476.2M486.5 469.4V476.8M487.5 469.0V476.3M488.5 468.7V475.7M489.5 468.9V476.7M490.5 470.0V475.7M491.5 468.3V476.5M492.5 468.8V476.8M493.5 469.0V474.8M494.5 470.2V475.2M495.5 469.6V474.7M496.5 468.6V475.7M497.5 468.6V476.8M498.5 469.4V476.4M499.5 468.9V476.5M500.5 469.6V474.8M501.5 469.2V475.9M502.5 469.0V475.6M503.5 469.2V476.6M504.5 469.1V474.7M505.5 469.7V476.2M506.5 468.4V474.8M507.5 469.5V476.6M508.5 469.1V475.5M509.5 468.6V476.4M510.5 469.5V476.6M511.5 469.9V476.6M512.5 470.0V475.0M513.5 469.3V475.2M514.5 469.2V476.3M515.5 469.0V474.5M516.5 469.7V475.0M517.5 469.4V475.1M518.5 470.3V475.5M519.5 469.1V474.8M520.5 470.2V474.4M521.5 469.5V474.3M522.5 469.8V474.2M523.5 470.0V475.4M524.5 470.0V474.6M525.5 470.1V474.4M526.5 470.4V474.2M527.5 470.7V474.0M528.5 470.9V475.3M529.5 470.6V475.0M530.5 470.5V474.5M531.5 470.1V474.0M532.5 469.7V474.0M533.5 469.8V474.1M534.5 470.7V474.3M535.5 470.7V475.2M536.5 469.3V474.4M537.5 469.4V475.6M538.5 469.6V474.6M539.5 469.1V475.1M540.5 469.4V476.0M541.5 470.2V475.2M542.5 469.9V475.7M543.5 470.3V474.7M544.5 469.6V474.9M545.5 469.9V476.6M546.5 467.8V475.9M547.5 468.9V477.3M548.5 469.7V476.1M549.5 468.0V476.2M550.5 468.7V476.4M551.5 467.2V476.4M552.5 468.3V477.9M553.5 469.3V477.4M554.5 466.7V475.6M555.5 467.3V476.5M556.5 467.3V477.6M557.5 468.4V477.8M558.5 466.4V478.3M559.5 467.3V476.0M560.5 467.8V476.9M561.5 469.4V478.3M562.5 468.1V476.0M563.5 469.0V477.3M564.5 468.2V475.7M565.5 467.5V476.8M566.5 467.0V477.2M567.5 469.4V477.8M568.5 468.1V476.4M569.5 467.5V475.5M570.5 468.9V476.3M571.5 468.6V475.6M572.5 469.1V477.5M573.5 469.7V475.7M574.5 467.5V475.5M575.5 469.8V476.7M576.5 468.7V477.4M577.5 469.1V476.9M578.5 467.8V476.1M579.5 467.6V477.2M580.5 469.0V476.5M581.5 468.7V475.4M582.5 469.9V477.2M583.5 469.4V475.3M584.5 468.5V475.1M585.5 469.5V475.2M586.5 468.1V475.3M587.5 468.4V475.4M588.5 467.2V476.4M589.5 467.9V476.2M590.5 469.4V476.3M591.5 468.3V476.9M592.5 467.8V476.1M593.5 467.1V476.7M594.5 468.1V477.2M595.5 468.6V476.9M596.5 469.5V477.8M597.5 468.9V476.1M598.5 469.0V475.4M599.5 467.7V476.6M600.5 469.6V476.0M601.5 468.8V476.7M602.5 468.8V475.0M603.5 468.5V475.4M604.5 469.0V475.0M605.5 469.4V475.3M606.5 469.7V474.9M607.5 469.1V475.4M608.5 469.7V474.9M609.5 469.6V474.4M610.5 469.5V475.3M611.5 470.3V475.3M612.5 470.2V474.2M613.5 470.6V473.9M614.5 470.4V474.9M615.5 471.1V473.9M616.5 471.0V474.4M617.5 470.3V474.7M618.5 471.2V474.2M619.5 471.0V474.0" stroke="#6363d4" stroke-width="1" fill="none"/><path d="M620.5 469.9V475.3M621.5 469.4V474.4M622.5 470.3V474.8M623.5 466.6V478.9M624.5 470.6V475.4M625.5 469.6V474.7M626.5 470.8V474.5M627.5 471.3V474.7M628.5 469.9V475.2M629.5 470.9V473.7M630.5 469.6V475.2M631.5 471.1V474.7M632.5 470.9V475.2M633.5 469.8V476.2M634.5 471.1V473.9M635.5 470.4V474.9M636.5 470.2V474.8M637.5 470.6V475.1M638.5 471.2V473.7M639.5 470.8V474.0M640.5 470.7V473.9M641.5 471.1V473.6M642.5 471.0V474.5M643.5 471.2V473.7M644.5 471.3V473.4M645.5 471.7V474.3M646.5 471.4V473.3M647.5 471.5V473.5M648.5 471.5V473.4M649.5 471.8V473.1M650.5 471.9V473.2M651.5 472.0V473.4M652.5 472.1V473.1M653.5 472.1V473.1M654.5 472.2V473.2M655.5 472.0V473.0M656.5 472.0V473.0M657.5 472.0V473.0" stroke="#8a5a96" stroke-width="1" fill="none"/><path d="M620.5 470.8V474.4M621.5 471.2V473.8M622.5 471.3V474.4M623.5 471.2V474.4M624.5 470.9V473.9M625.5 471.2V473.7M626.5 471.3V473.7M627.5 471.6V474.0M628.5 471.5V473.5M629.5 471.3V473.4M630.5 471.2V473.7M631.5 471.6V473.6M632.5 471.4V473.6M633.5 471.3V473.8M634.5 471.6V473.3M635.5 471.5V473.8M636.5 471.1V473.3M637.5 471.2V473.6M638.5 471.4V473.4M639.5 471.6V473.7M640.5 471.7V473.3M641.5 471.6V473.3M642.5 471.5V473.4M643.5 471.9V473.0M644.5 471.9V473.1M645.5 471.9V473.2M646.5 471.8V472.9M647.5 472.2V473.2M648.5 472.0V473.0M649.5 472.0V473.0M650.5 472.0V473.0M651.5 471.9V472.9M652.5 472.0V473.0M653.5 472.0V473.0M654.5 472.0V473.0M655.5 472.0V473.0M656.5 472.0V473.0M657.5 472.0V473.0" stroke="#8a4c9c" stroke-width="1" fill="none"/></svg><div style="position:absolute;left:658px;top:354px;width:1.2px;height:160px;background:#5a1a3a;"></div><div style="position:absolute;left:659px;top:521.5px;width:471px;height:16.5px;background:#cfd3ef;border-top-left-radius:5px;border-top-right-radius:5px;border-left:1px solid #111;"></div><div style="position:absolute;left:659px;top:538px;width:471px;height:138px;background:#eff0fb;border-left:1px solid #111;"></div><div style="position:absolute;left:665.60px;top:523.94px;font-size:12px;line-height:12px;white-space:pre;color:#111;transform:scaleX(0.9891);transform-origin:0 0;">Titre 03</div><div style="position:absolute;left:1105.4px;top:529.4px;width:2.2px;height:2.2px;background:#111;border-radius:1px;"></div><div style="position:absolute;left:1111.6000000000001px;top:529.4px;width:2.2px;height:2.2px;background:#111;border-radius:1px;"></div><div style="position:absolute;left:1117.8000000000002px;top:529.4px;width:2.2px;height:2.2px;background:#111;border-radius:1px;"></div><div style="position:absolute;left:660px;top:605px;width:470px;height:1.2px;background:#111;"></div><svg style="position:absolute;left:0px;top:0px;pointer-events:none;" width="1151" height="816" viewBox="0 0 1151 816"><path d="M660.50,557.38 660.75,559.63 661.00,571.50 661.25,584.13 661.50,586.52 661.75,584.13 662.00,571.50 662.25,558.52 662.50,556.07 662.75,558.52 663.00,571.50 663.25,585.43 663.50,588.06 663.75,585.43 664.00,571.50 664.25,558.88 664.50,556.49 664.75,558.88 665.00,571.50 665.25,585.30 665.50,587.91 665.75,585.30 666.00,571.50 666.25,563.45 666.50,561.93 666.75,563.45 667.00,571.50 667.25,582.36 667.50,584.41 667.75,582.36 668.00,571.50 668.25,557.57 668.50,554.93 668.75,557.57 669.00,571.50 669.25,583.54 669.50,585.81 669.75,583.54 670.00,571.50 670.25,557.84 670.50,555.26 670.75,557.84 671.00,571.50 671.25,580.09 671.50,581.72 671.75,580.09 672.00,571.50 672.25,560.62 672.50,558.56 672.75,560.62 673.00,551.95 673.25,552.41 673.50,553.44 673.75,555.07 674.00,557.33 674.25,560.36 674.50,564.63 674.75,575.78 675.00,580.93 675.25,584.07 675.50,586.27 675.75,587.77 676.00,588.66 676.25,589.00 676.50,588.80 676.75,588.08 677.00,586.84 677.25,585.05 677.50,582.64 677.75,579.37 678.00,573.60 678.25,564.55 678.50,561.26 678.75,559.00 679.00,557.42 679.25,556.41 679.50,555.91 679.75,555.90 680.00,556.36 680.25,557.28 680.50,558.68 680.75,560.60 681.00,563.17 681.25,566.94 681.50,576.02 681.75,579.63 682.00,581.96 682.25,583.59 682.50,584.69 682.75,585.32 683.00,585.50 683.25,585.26 683.50,584.60 683.75,583.52 684.00,582.00 684.25,579.96 684.50,577.14 684.75,569.82 685.00,565.32 685.25,562.89 685.50,561.21 685.75,560.04 686.00,559.32 686.25,559.00 686.50,559.06 686.75,559.51 687.00,560.32 687.25,561.52 687.50,563.14 687.75,565.33 688.00,568.75 688.25,575.84 688.50,578.43 688.75,580.16 689.00,581.38 689.25,582.18 689.50,582.61 689.75,582.69 690.00,582.42 690.25,581.83 690.50,580.90 690.75,579.61 691.00,577.88 691.25,575.43 691.50,569.05 691.75,566.10 692.00,564.31 692.25,563.05 692.50,562.19 692.75,561.68 693.00,561.49 693.25,561.60 693.50,562.01 693.75,562.72 694.00,563.75 694.25,565.12 694.50,567.00 694.75,570.30 695.00,575.47 695.25,577.36 695.50,578.65 695.75,579.56 696.00,580.13 696.25,580.42 696.50,580.43 696.75,580.16 697.00,579.64 697.25,578.84 697.50,577.74 697.75,576.27 698.00,574.11 698.25,568.91 698.50,566.85 698.75,565.52 699.00,564.58 699.25,563.95 699.50,563.59 699.75,563.49 700.00,563.63 700.25,564.01 700.50,564.62 700.75,565.49 701.00,566.66 701.25,568.27 701.50,572.46 701.75,575.04 702.00,576.42 702.25,577.39 702.50,578.06 702.75,578.47 703.00,578.65 703.25,578.62 703.50,578.36 703.75,577.90 704.00,577.21 704.25,576.28 704.50,575.03 704.75,573.07 705.00,569.02 705.25,567.54 705.50,566.54 705.75,565.85 706.00,565.39 706.25,565.14 706.50,565.10 706.75,565.25 707.00,565.59 707.25,566.12 707.50,566.86 707.75,567.85 708.00,569.25 708.25,572.90 708.50,574.59 708.75,575.62 709.00,576.33 709.25,576.83 709.50,577.12 709.75,577.23 710.00,577.16 710.25,576.93 710.50,576.52 710.75,575.94 711.00,575.15 711.25,574.08 711.50,572.19 711.75,569.23 712.00,568.15 712.25,567.41 712.50,566.89 712.75,566.56 713.00,566.40 713.25,566.39 713.50,566.54 713.75,566.84 714.00,567.30 714.25,567.93 714.50,568.77 714.75,570.01 715.00,572.98 715.25,574.16 715.50,574.92 715.75,575.46 716.00,575.82 716.25,576.02 716.50,576.08 716.75,576.00 717.00,575.79 717.25,575.43 717.50,574.94 717.75,574.27 718.00,573.35 718.25,570.95 718.50,569.48 718.75,568.68 719.00,568.13 719.25,567.75 719.50,567.51 719.75,567.41 720.00,567.43 720.25,567.57 720.50,567.84 720.75,568.23 721.00,568.76 721.25,569.48 721.50,570.60 721.75,572.92 722.00,573.77 722.25,574.34 722.50,574.73 722.75,575.00 723.00,575.14 723.25,575.16 723.50,575.08 723.75,574.88 724.00,574.58 724.25,574.15 724.50,573.59 724.75,572.79 725.00,570.70 725.25,569.73 725.50,569.15 725.75,568.73 726.00,568.45 726.25,568.29 726.50,568.22 726.75,568.26 727.00,568.39 727.25,568.63 727.50,568.96 727.75,569.41 728.00,570.03 728.25,571.11 728.50,572.80 728.75,573.42 729.00,573.84 729.25,574.14 729.50,574.33 729.75,574.42 730.00,574.42 730.25,574.34 730.50,574.16 730.75,573.90 731.00,573.54 731.25,573.06 731.50,572.35 731.75,570.65 732.00,569.98 732.25,569.54 732.50,569.23 732.75,569.03 733.00,568.91 733.25,568.88 733.50,568.92 733.75,569.05 734.00,569.25 734.25,569.53 734.50,569.92 734.75,570.44 735.00,571.81 735.25,572.66 735.50,573.11 735.75,573.43 736.00,573.65 736.25,573.78 736.50,573.84 736.75,573.83 737.00,573.75 737.25,573.59 737.50,573.37 737.75,573.07 738.00,572.66 738.25,572.02 738.50,570.69 738.75,570.20 739.00,569.88 739.25,569.65 739.50,569.50 739.75,569.42 740.00,569.40 740.25,569.45 740.50,569.56 740.75,569.74 741.00,569.98 741.25,570.31 741.50,570.76 741.75,571.96 742.00,572.51 742.25,572.85 742.50,573.08 742.75,573.24 743.00,573.34 743.25,573.38 743.50,573.35 743.75,573.28 744.00,573.14 744.25,572.95 744.50,572.69 744.75,572.34 745.00,571.73 745.25,570.76 745.50,570.40 745.75,570.16 746.00,569.99 746.25,569.88 746.50,569.83 746.75,569.83 747.00,569.88 747.25,569.98 747.50,570.13 747.75,570.33 748.00,570.61 748.25,571.01 748.50,571.98 748.75,572.37 749.00,572.62 749.25,572.80 749.50,572.91 749.75,572.98 750.00,573.00 750.25,572.97 750.50,572.90 750.75,572.79 751.00,572.62 751.25,572.41 751.50,572.10 751.75,571.32 752.00,570.84 752.25,571.50 752.50,571.50 752.75,571.50 753.00,571.50 753.25,571.50 753.50,571.50 753.75,571.50 754.00,571.50 754.25,571.50 754.50,571.50 754.75,571.50 755.00,569.83 755.25,568.38 755.50,567.30 755.75,566.66 756.00,566.44 756.25,566.56 756.50,566.91 756.75,567.36 757.00,567.77 757.25,568.06 757.50,568.21 757.75,568.25 758.00,568.28 758.25,568.41 758.50,568.80 758.75,569.54 759.00,570.70 759.25,572.26 759.50,574.13 759.75,576.13 760.00,578.04 760.25,579.63 760.50,580.66 760.75,580.98 761.00,580.52 761.25,579.28 761.50,577.41 761.75,575.10 762.00,572.62 762.25,570.22 762.50,568.16 762.75,566.58 763.00,565.59 763.25,565.24 763.50,565.35 763.75,565.76 764.00,566.28 764.25,566.76 764.50,567.09 764.75,567.23 765.00,567.25 765.25,567.23 765.50,567.35 765.75,567.73 766.00,568.52 766.25,569.75 766.50,571.42 766.75,573.40 767.00,575.52 767.25,577.55 767.50,579.25 767.75,580.40 768.00,580.84 768.25,580.52 768.50,579.46 768.75,577.79 769.00,575.71 769.25,573.46 769.50,571.29 769.75,569.40 770.00,567.96 770.25,567.02 770.50,566.57 770.75,566.53 771.00,566.75 771.25,567.08 771.50,567.38 771.75,567.56 772.00,567.59 772.25,567.51 772.50,567.40 772.75,567.39 773.00,567.63 773.25,568.21 773.50,569.22 773.75,570.62 774.00,572.35 774.25,574.25 774.50,576.13 774.75,577.76 775.00,578.95 775.25,579.56 775.50,579.50 775.75,578.79 776.00,577.52 776.25,575.84 776.50,573.97 776.75,572.11 777.00,570.45 777.25,569.13 777.50,568.22 777.75,567.72 778.00,567.57 778.25,567.64 778.50,567.83 778.75,568.00 779.00,568.07 779.25,568.01 779.50,567.85 779.75,567.66 780.00,567.55 780.25,567.65 780.50,568.07 780.75,568.86 781.00,570.03 781.25,571.52 781.50,573.20 781.75,574.91 782.00,576.45 782.25,577.65 782.50,578.36 782.75,578.50 783.00,578.08 783.25,577.14 783.50,575.81 783.75,574.27 784.00,572.70 784.25,571.25 784.50,570.07 784.75,569.21 785.00,568.69 785.25,568.47 785.50,568.45 785.75,568.52 786.00,568.59 786.25,568.58 786.50,568.45 786.75,568.23 787.00,567.98 787.25,567.79 787.50,567.79 787.75,568.06 788.00,568.66 788.25,569.62 788.50,570.88 788.75,572.35 789.00,573.88 789.25,575.31 789.50,576.48 789.75,577.26 790.00,577.55 790.25,577.35 790.50,576.68 790.75,575.66 791.00,574.41 791.25,573.09 791.50,571.85 791.75,570.80 792.00,570.01 792.25,569.50 792.50,569.24 792.75,569.15 793.00,569.15 793.25,569.14 793.50,569.07 793.75,568.90 794.00,568.63 794.25,568.34 794.50,568.09 794.75,568.00 795.00,568.14 795.25,568.58 795.50,569.35 795.75,570.40 796.00,571.67 796.25,573.03 796.50,574.35 796.75,575.46 797.00,576.26 797.25,576.66 797.50,576.63 797.75,576.18 798.00,575.41 798.25,574.41 798.50,573.32 798.75,572.27 799.00,571.36 799.25,570.65 799.50,570.16 799.75,569.88 800.00,569.76 800.25,569.70 800.50,569.65 800.75,569.53 801.00,569.33 801.25,569.04 801.50,568.72 801.75,568.43 802.00,568.26 802.25,568.30 802.50,568.60 802.75,569.20 803.00,570.07 803.25,571.15 803.50,572.35 803.75,573.53 804.00,574.58 804.25,575.38 804.50,575.84 804.75,575.94 805.00,575.67 805.25,575.10 805.50,574.32 805.75,573.44 806.00,572.55 806.25,571.77 806.50,571.14 806.75,570.69 807.00,570.42 807.25,570.27 807.50,570.18 807.75,570.10 808.00,569.96 808.25,569.73 808.50,569.44 808.75,569.10 809.00,568.78 809.25,568.56 809.50,568.51 809.75,568.70 810.00,569.14 810.25,569.85 810.50,570.76 810.75,571.80 811.00,572.86 811.25,573.82 811.50,574.60 811.75,575.10 812.00,575.29 812.25,575.16 812.50,574.76 812.75,574.16 813.00,573.45 813.25,572.72 813.50,572.05 813.75,571.51 814.00,571.11 814.25,570.85 814.50,570.69 814.75,570.59 815.00,570.49 815.25,570.33 815.50,570.11 815.75,569.81 816.00,569.46 816.25,569.13 816.50,568.87 816.75,568.76 817.00,568.85 817.25,569.17 817.50,569.73 817.75,570.48 818.00,571.37 818.25,572.31 818.50,573.19 818.75,573.92 819.00,574.44 819.25,574.69 819.50,574.67 819.75,574.41 820.00,573.96 820.25,573.40 820.50,572.80 820.75,572.24 821.00,571.78 821.25,571.42 821.50,571.18 821.75,571.03 822.00,570.93 822.25,570.82 822.50,570.66 822.75,570.44 823.00,570.15 823.25,571.50 823.50,571.50 823.75,571.50 824.00,571.50 824.25,571.50 824.50,571.50 824.75,571.50 825.00,571.50 825.25,571.50 825.50,571.50 825.75,571.50 826.00,571.50 826.25,571.50 826.50,571.50 826.75,571.50 827.00,571.50 827.25,571.50 827.50,571.50 827.75,571.50 828.00,571.50 828.25,571.50 828.50,571.50 828.75,571.50 829.00,571.50 829.25,571.50 829.50,571.50 829.75,571.50 830.00,571.50 830.25,571.50 830.50,571.50 830.75,571.50 831.00,571.50 831.25,571.50 831.50,571.50 831.75,571.50 832.00,571.50 832.25,571.50 832.50,571.50 832.75,571.50 833.00,571.50 833.25,571.50 833.50,571.50 833.75,571.50 834.00,571.50 834.25,571.50 834.50,571.50 834.75,571.50 835.00,571.50 835.25,571.50 835.50,571.50 835.75,571.50 836.00,571.50 836.25,571.50 836.50,571.50 836.75,571.50 837.00,571.50 837.25,571.50 837.50,571.50 837.75,571.50 838.00,571.50 838.25,571.50 838.50,571.50 838.75,571.50 839.00,571.50 839.25,571.50 839.50,571.50 839.75,571.50 840.00,571.50 840.25,571.50 840.50,571.50 840.75,571.50 841.00,571.50 841.25,571.50 841.50,571.50 841.75,571.50 842.00,571.50 842.25,571.50 842.50,571.50 842.75,571.50 843.00,571.50 843.25,571.50 843.50,571.50 843.75,571.50 844.00,571.50 844.25,571.50 844.50,571.50 844.75,571.50 845.00,571.50 845.25,571.50 845.50,571.50 845.75,571.50 846.00,571.50 846.25,571.50 846.50,571.50 846.75,571.50 847.00,571.50 847.25,571.50 847.50,571.50 847.75,571.50 848.00,571.50 848.25,571.50 848.50,571.50 848.75,571.50 849.00,571.50 849.25,571.50 849.50,571.50 849.75,571.50 850.00,571.50 850.25,571.50 850.50,571.50 850.75,571.50 851.00,571.50 851.25,571.50 851.50,571.50 851.75,571.50 852.00,571.50 852.25,562.05 852.50,560.26 852.75,562.05 853.00,571.50 853.25,582.86 853.50,585.01 853.75,582.86 854.00,571.50 854.25,559.95 854.50,557.76 854.75,559.95 855.00,571.50 855.25,579.45 855.50,580.95 855.75,579.45 856.00,571.50 856.25,562.24 856.50,560.49 856.75,562.24 857.00,571.50 857.25,581.16 857.50,582.99 857.75,581.16 858.00,571.50 858.25,557.74 858.50,555.14 858.75,557.74 859.00,571.50 859.25,584.29 859.50,586.71 859.75,584.29 860.00,571.50 860.25,562.61 860.50,560.93 860.75,562.61 861.00,571.50 861.25,584.49 861.50,586.95 861.75,584.49 862.00,571.50 862.25,562.74 862.50,561.09 862.75,562.74 863.00,571.50 863.25,583.33 863.50,585.57 863.75,583.33 864.00,571.50 864.25,562.82 864.50,561.18 864.75,562.82 865.00,551.95 865.25,552.41 865.50,553.44 865.75,555.07 866.00,557.33 866.25,560.36 866.50,564.63 866.75,575.78 867.00,580.93 867.25,584.07 867.50,586.27 867.75,587.77 868.00,588.66 868.25,589.00 868.50,588.80 868.75,588.08 869.00,586.84 869.25,585.05 869.50,582.64 869.75,579.37 870.00,573.60 870.25,564.55 870.50,561.26 870.75,559.00 871.00,557.42 871.25,556.41 871.50,555.91 871.75,555.90 872.00,556.36 872.25,557.28 872.50,558.68 872.75,560.60 873.00,563.17 873.25,566.94 873.50,576.02 873.75,579.63 874.00,581.96 874.25,583.59 874.50,584.69 874.75,585.32 875.00,585.50 875.25,585.26 875.50,584.60 875.75,583.52 876.00,582.00 876.25,579.96 876.50,577.14 876.75,569.82 877.00,565.32 877.25,562.89 877.50,561.21 877.75,560.04 878.00,559.32 878.25,559.00 878.50,559.06 878.75,559.51 879.00,560.32 879.25,561.52 879.50,563.14 879.75,565.33 880.00,568.75 880.25,575.84 880.50,578.43 880.75,580.16 881.00,581.38 881.25,582.18 881.50,582.61 881.75,582.69 882.00,582.42 882.25,581.83 882.50,580.90 882.75,579.61 883.00,577.88 883.25,575.43 883.50,569.05 883.75,566.10 884.00,564.31 884.25,563.05 884.50,562.19 884.75,561.68 885.00,561.49 885.25,561.60 885.50,562.01 885.75,562.72 886.00,563.75 886.25,565.12 886.50,567.00 886.75,570.30 887.00,575.47 887.25,577.36 887.50,578.65 887.75,579.56 888.00,580.13 888.25,580.42 888.50,580.43 888.75,580.16 889.00,579.64 889.25,578.84 889.50,577.74 889.75,576.27 890.00,574.11 890.25,568.91 890.50,566.85 890.75,565.52 891.00,564.58 891.25,563.95 891.50,563.59 891.75,563.49 892.00,563.63 892.25,564.01 892.50,564.62 892.75,565.49 893.00,566.66 893.25,568.27 893.50,572.46 893.75,575.04 894.00,576.42 894.25,577.39 894.50,578.06 894.75,578.47 895.00,578.65 895.25,578.62 895.50,578.36 895.75,577.90 896.00,577.21 896.25,576.28 896.50,575.03 896.75,573.07 897.00,569.02 897.25,567.54 897.50,566.54 897.75,565.85 898.00,565.39 898.25,565.14 898.50,565.10 898.75,565.25 899.00,565.59 899.25,566.12 899.50,566.86 899.75,567.85 900.00,569.25 900.25,572.90 900.50,574.59 900.75,575.62 901.00,576.33 901.25,576.83 901.50,577.12 901.75,577.23 902.00,577.16 902.25,576.93 902.50,576.52 902.75,575.94 903.00,575.15 903.25,574.08 903.50,572.19 903.75,569.23 904.00,568.15 904.25,567.41 904.50,566.89 904.75,566.56 905.00,566.40 905.25,566.39 905.50,566.54 905.75,566.84 906.00,567.30 906.25,567.93 906.50,568.77 906.75,570.01 907.00,572.98 907.25,574.16 907.50,574.92 907.75,575.46 908.00,575.82 908.25,576.02 908.50,576.08 908.75,576.00 909.00,575.79 909.25,575.43 909.50,574.94 909.75,574.27 910.00,573.35 910.25,570.95 910.50,569.48 910.75,568.68 911.00,568.13 911.25,567.75 911.50,567.51 911.75,567.41 912.00,567.43 912.25,567.57 912.50,567.84 912.75,568.23 913.00,568.76 913.25,569.48 913.50,570.60 913.75,572.92 914.00,573.77 914.25,574.34 914.50,574.73 914.75,575.00 915.00,575.14 915.25,575.16 915.50,575.08 915.75,574.88 916.00,574.58 916.25,574.15 916.50,573.59 916.75,572.79 917.00,570.70 917.25,569.73 917.50,569.15 917.75,568.73 918.00,568.45 918.25,568.29 918.50,568.22 918.75,568.26 919.00,568.39 919.25,568.63 919.50,568.96 919.75,569.41 920.00,570.03 920.25,571.11 920.50,572.80 920.75,573.42 921.00,573.84 921.25,574.14 921.50,574.33 921.75,574.42 922.00,574.42 922.25,574.34 922.50,574.16 922.75,573.90 923.00,573.54 923.25,573.06 923.50,572.35 923.75,570.65 924.00,569.98 924.25,569.54 924.50,569.23 924.75,569.03 925.00,568.91 925.25,568.88 925.50,568.92 925.75,569.05 926.00,569.25 926.25,569.53 926.50,569.92 926.75,570.44 927.00,571.81 927.25,572.66 927.50,573.11 927.75,573.43 928.00,573.65 928.25,573.78 928.50,573.84 928.75,573.83 929.00,573.75 929.25,573.59 929.50,573.37 929.75,573.07 930.00,572.66 930.25,572.02 930.50,570.69 930.75,570.20 931.00,569.88 931.25,569.65 931.50,569.50 931.75,569.42 932.00,569.40 932.25,569.45 932.50,569.56 932.75,569.74 933.00,569.98 933.25,570.31 933.50,570.76 933.75,571.96 934.00,572.51 934.25,572.85 934.50,573.08 934.75,573.24 935.00,573.34 935.25,573.38 935.50,573.35 935.75,573.28 936.00,573.14 936.25,572.95 936.50,572.69 936.75,572.34 937.00,571.73 937.25,570.76 937.50,570.40 937.75,570.16 938.00,569.99 938.25,569.88 938.50,569.83 938.75,569.83 939.00,569.88 939.25,569.98 939.50,570.13 939.75,570.33 940.00,570.61 940.25,571.01 940.50,571.98 940.75,572.37 941.00,572.62 941.25,572.80 941.50,572.91 941.75,572.98 942.00,573.00 942.25,572.97 942.50,572.90 942.75,572.79 943.00,572.62 943.25,572.41 943.50,572.10 943.75,571.32 944.00,570.84 944.25,571.50 944.50,571.50 944.75,571.50 945.00,571.50 945.25,571.50 945.50,571.50 945.75,571.50 946.00,571.50 946.25,571.50 946.50,571.50 946.75,571.50 947.00,571.50 947.25,571.50 947.50,571.50 947.75,571.50 948.00,571.50 948.25,571.50 948.50,571.50 948.75,571.50 949.00,571.50 949.25,571.50 949.50,571.50 949.75,571.50 950.00,571.50 950.25,571.50 950.50,571.50 950.75,571.50 951.00,571.50 951.25,571.50 951.50,571.50 951.75,571.50 952.00,571.50 952.25,571.50 952.50,571.50 952.75,571.50 953.00,569.83 953.25,568.38 953.50,567.30 953.75,566.66 954.00,566.44 954.25,566.56 954.50,566.91 954.75,567.36 955.00,567.77 955.25,568.06 955.50,568.21 955.75,568.25 956.00,568.28 956.25,568.41 956.50,568.80 956.75,569.54 957.00,570.70 957.25,572.26 957.50,574.13 957.75,576.13 958.00,578.04 958.25,579.63 958.50,580.66 958.75,580.98 959.00,580.52 959.25,579.28 959.50,577.41 959.75,575.10 960.00,572.62 960.25,570.22 960.50,568.16 960.75,566.58 961.00,565.59 961.25,565.24 961.50,565.35 961.75,565.76 962.00,566.28 962.25,566.76 962.50,567.09 962.75,567.23 963.00,567.25 963.25,567.23 963.50,567.35 963.75,567.73 964.00,568.52 964.25,569.75 964.50,571.42 964.75,573.40 965.00,575.52 965.25,577.55 965.50,579.25 965.75,580.40 966.00,580.84 966.25,580.52 966.50,579.46 966.75,577.79 967.00,575.71 967.25,573.46 967.50,571.29 967.75,569.40 968.00,567.96 968.25,567.02 968.50,566.57 968.75,566.53 969.00,566.75 969.25,567.08 969.50,567.38 969.75,567.56 970.00,567.59 970.25,567.51 970.50,567.40 970.75,567.39 971.00,567.63 971.25,568.21 971.50,569.22 971.75,570.62 972.00,572.35 972.25,574.25 972.50,576.13 972.75,577.76 973.00,578.95 973.25,579.56 973.50,579.50 973.75,578.79 974.00,577.52 974.25,575.84 974.50,573.97 974.75,572.11 975.00,570.45 975.25,569.13 975.50,568.22 975.75,567.72 976.00,567.57 976.25,567.64 976.50,567.83 976.75,568.00 977.00,568.07 977.25,568.01 977.50,567.85 977.75,567.66 978.00,567.55 978.25,567.65 978.50,568.07 978.75,568.86 979.00,570.03 979.25,571.52 979.50,573.20 979.75,574.91 980.00,576.45 980.25,577.65 980.50,578.36 980.75,578.50 981.00,578.08 981.25,577.14 981.50,575.81 981.75,574.27 982.00,572.70 982.25,571.25 982.50,570.07 982.75,569.21 983.00,568.69 983.25,568.47 983.50,568.45 983.75,568.52 984.00,568.59 984.25,568.58 984.50,568.45 984.75,568.23 985.00,567.98 985.25,567.79 985.50,567.79 985.75,568.06 986.00,568.66 986.25,569.62 986.50,570.88 986.75,572.35 987.00,573.88 987.25,575.31 987.50,576.48 987.75,577.26 988.00,577.55 988.25,577.35 988.50,576.68 988.75,575.66 989.00,574.41 989.25,573.09 989.50,571.85 989.75,570.80 990.00,570.01 990.25,569.50 990.50,569.24 990.75,569.15 991.00,569.15 991.25,569.14 991.50,569.07 991.75,568.90 992.00,568.63 992.25,568.34 992.50,568.09 992.75,568.00 993.00,568.14 993.25,568.58 993.50,569.35 993.75,570.40 994.00,571.67 994.25,573.03 994.50,574.35 994.75,575.46 995.00,576.26 995.25,576.66 995.50,576.63 995.75,576.18 996.00,575.41 996.25,574.41 996.50,573.32 996.75,572.27 997.00,571.36 997.25,570.65 997.50,570.16 997.75,569.88 998.00,569.76 998.25,569.70 998.50,569.65 998.75,569.53 999.00,569.33 999.25,569.04 999.50,568.72 999.75,568.43 1000.00,568.26 1000.25,568.30 1000.50,568.60 1000.75,569.20 1001.00,570.07 1001.25,571.15 1001.50,572.35 1001.75,573.53 1002.00,574.58 1002.25,575.38 1002.50,575.84 1002.75,575.94 1003.00,575.67 1003.25,575.10 1003.50,574.32 1003.75,573.44 1004.00,572.55 1004.25,571.77 1004.50,571.14 1004.75,570.69 1005.00,570.42 1005.25,570.27 1005.50,570.18 1005.75,570.10 1006.00,569.96 1006.25,569.73 1006.50,569.44 1006.75,569.10 1007.00,568.78 1007.25,568.56 1007.50,568.51 1007.75,568.70 1008.00,569.14 1008.25,569.85 1008.50,570.76 1008.75,571.80 1009.00,572.86 1009.25,573.82 1009.50,574.60 1009.75,575.10 1010.00,575.29 1010.25,575.16 1010.50,574.76 1010.75,574.16 1011.00,573.45 1011.25,572.72 1011.50,572.05 1011.75,571.51 1012.00,571.11 1012.25,570.85 1012.50,570.69 1012.75,570.59 1013.00,570.49 1013.25,570.33 1013.50,570.11 1013.75,569.81 1014.00,569.46 1014.25,569.13 1014.50,568.87 1014.75,568.76 1015.00,568.85 1015.25,569.17 1015.50,569.73 1015.75,570.48 1016.00,571.37 1016.25,572.31 1016.50,573.19 1016.75,573.92 1017.00,574.44 1017.25,574.69 1017.50,574.67 1017.75,574.41 1018.00,573.96 1018.25,573.40 1018.50,572.80 1018.75,572.24 1019.00,571.78 1019.25,571.42 1019.50,571.18 1019.75,571.03 1020.00,570.93 1020.25,570.82 1020.50,570.66 1020.75,570.44 1021.00,570.15 1021.25,571.50 1021.50,571.50 1021.75,571.50 1022.00,571.50 1022.25,571.50 1022.50,571.50 1022.75,571.50 1023.00,571.50 1023.25,571.50 1023.50,571.50 1023.75,571.50 1024.00,571.50 1024.25,571.50 1024.50,571.50 1024.75,571.50 1025.00,571.50 1025.25,571.50 1025.50,571.50 1025.75,571.50 1026.00,571.50 1026.25,571.50 1026.50,571.50 1026.75,571.50 1027.00,571.50 1027.25,571.50 1027.50,571.50 1027.75,571.50 1028.00,571.50 1028.25,571.50 1028.50,571.50 1028.75,571.50 1029.00,571.50 1029.25,571.50 1029.50,571.50 1029.75,571.50 1030.00,571.50 1030.25,571.50 1030.50,571.50 1030.75,571.50 1031.00,571.50 1031.25,571.50 1031.50,571.50 1031.75,571.50 1032.00,571.50 1032.25,571.50 1032.50,571.50 1032.75,571.50 1033.00,571.50 1033.25,571.50 1033.50,571.50 1033.75,571.50 1034.00,571.50 1034.25,571.50 1034.50,571.50 1034.75,571.50 1035.00,571.50 1035.25,571.50 1035.50,571.50 1035.75,571.50 1036.00,571.50 1036.25,571.50 1036.50,571.50 1036.75,571.50 1037.00,571.50 1037.25,571.50 1037.50,571.50 1037.75,571.50 1038.00,571.50 1038.25,571.50 1038.50,571.50 1038.75,571.50 1039.00,571.50 1039.25,571.50 1039.50,571.50 1039.75,571.50 1040.00,571.50 1040.25,571.50 1040.50,571.50 1040.75,571.50 1041.00,571.50 1041.25,571.50 1041.50,571.50 1041.75,571.50 1042.00,571.50 1042.25,571.50 1042.50,571.50 1042.75,571.50 1043.00,571.50 1043.25,571.50 1043.50,571.50 1043.75,571.50 1044.00,571.50 1044.25,571.50 1044.50,571.50 1044.75,571.50 1045.00,571.50 1045.25,571.50 1045.50,571.50 1045.75,571.50 1046.00,571.50 1046.25,571.50 1046.50,571.50 1046.75,571.50 1047.00,571.50 1047.25,571.50 1047.50,571.50 1047.75,571.50 1048.00,571.50 1048.25,571.50 1048.50,571.50 1048.75,571.50 1049.00,571.50 1049.25,563.63 1049.50,562.14 1049.75,563.63 1050.00,571.50 1050.25,584.97 1050.50,587.52 1050.75,584.97 1051.00,571.50 1051.25,562.29 1051.50,560.55 1051.75,562.29 1052.00,571.50 1052.25,580.75 1052.50,582.50 1052.75,580.75 1053.00,571.50 1053.25,557.32 1053.50,554.63 1053.75,557.32 1054.00,571.50 1054.25,584.97 1054.50,587.52 1054.75,584.97 1055.00,571.50 1055.25,561.78 1055.50,559.94 1055.75,561.78 1056.00,571.50 1056.25,585.55 1056.50,588.21 1056.75,585.55 1057.00,571.50 1057.25,560.17 1057.50,558.02 1057.75,560.17 1058.00,571.50 1058.25,583.72 1058.50,586.04 1058.75,583.72 1059.00,571.50 1059.25,562.32 1059.50,560.58 1059.75,562.32 1060.00,571.50 1060.25,585.42 1060.50,588.05 1060.75,585.42 1061.00,571.50 1061.25,559.19 1061.50,556.87 1061.75,559.19 1062.00,551.95 1062.25,552.41 1062.50,553.44 1062.75,555.07 1063.00,557.33 1063.25,560.36 1063.50,564.63 1063.75,575.78 1064.00,580.93 1064.25,584.07 1064.50,586.27 1064.75,587.77 1065.00,588.66 1065.25,589.00 1065.50,588.80 1065.75,588.08 1066.00,586.84 1066.25,585.05 1066.50,582.64 1066.75,579.37 1067.00,573.60 1067.25,564.55 1067.50,561.26 1067.75,559.00 1068.00,557.42 1068.25,556.41 1068.50,555.91 1068.75,555.90 1069.00,556.36 1069.25,557.28 1069.50,558.68 1069.75,560.60 1070.00,563.17 1070.25,566.94 1070.50,576.02 1070.75,579.63 1071.00,581.96 1071.25,583.59 1071.50,584.69 1071.75,585.32 1072.00,585.50 1072.25,585.26 1072.50,584.60 1072.75,583.52 1073.00,582.00 1073.25,579.96 1073.50,577.14 1073.75,569.82 1074.00,565.32 1074.25,562.89 1074.50,561.21 1074.75,560.04 1075.00,559.32 1075.25,559.00 1075.50,559.06 1075.75,559.51 1076.00,560.32 1076.25,561.52 1076.50,563.14 1076.75,565.33 1077.00,568.75 1077.25,575.84 1077.50,578.43 1077.75,580.16 1078.00,581.38 1078.25,582.18 1078.50,582.61 1078.75,582.69 1079.00,582.42 1079.25,581.83 1079.50,580.90 1079.75,579.61 1080.00,577.88 1080.25,575.43 1080.50,569.05 1080.75,566.10 1081.00,564.31 1081.25,563.05 1081.50,562.19 1081.75,561.68 1082.00,561.49 1082.25,561.60 1082.50,562.01 1082.75,562.72 1083.00,563.75 1083.25,565.12 1083.50,567.00 1083.75,570.30 1084.00,575.47 1084.25,577.36 1084.50,578.65 1084.75,579.56 1085.00,580.13 1085.25,580.42 1085.50,580.43 1085.75,580.16 1086.00,579.64 1086.25,578.84 1086.50,577.74 1086.75,576.27 1087.00,574.11 1087.25,568.91 1087.50,566.85 1087.75,565.52 1088.00,564.58 1088.25,563.95 1088.50,563.59 1088.75,563.49 1089.00,563.63 1089.25,564.01 1089.50,564.62 1089.75,565.49 1090.00,566.66 1090.25,568.27 1090.50,572.46 1090.75,575.04 1091.00,576.42 1091.25,577.39 1091.50,578.06 1091.75,578.47 1092.00,578.65 1092.25,578.62 1092.50,578.36 1092.75,577.90 1093.00,577.21 1093.25,576.28 1093.50,575.03 1093.75,573.07 1094.00,569.02 1094.25,567.54 1094.50,566.54 1094.75,565.85 1095.00,565.39 1095.25,565.14 1095.50,565.10 1095.75,565.25 1096.00,565.59 1096.25,566.12 1096.50,566.86 1096.75,567.85 1097.00,569.25 1097.25,572.90 1097.50,574.59 1097.75,575.62 1098.00,576.33 1098.25,576.83 1098.50,577.12 1098.75,577.23 1099.00,577.16 1099.25,576.93 1099.50,576.52 1099.75,575.94 1100.00,575.15 1100.25,574.08 1100.50,572.19 1100.75,569.23 1101.00,568.15 1101.25,567.41 1101.50,566.89 1101.75,566.56 1102.00,566.40 1102.25,566.39 1102.50,566.54 1102.75,566.84 1103.00,567.30 1103.25,567.93 1103.50,568.77 1103.75,570.01 1104.00,572.98 1104.25,574.16 1104.50,574.92 1104.75,575.46 1105.00,575.82 1105.25,576.02 1105.50,576.08 1105.75,576.00 1106.00,575.79 1106.25,575.43 1106.50,574.94 1106.75,574.27 1107.00,573.35 1107.25,570.95 1107.50,569.48 1107.75,568.68 1108.00,568.13 1108.25,567.75 1108.50,567.51 1108.75,567.41 1109.00,567.43 1109.25,567.57 1109.50,567.84 1109.75,568.23 1110.00,568.76 1110.25,569.48 1110.50,570.60 1110.75,572.92 1111.00,573.77 1111.25,574.34 1111.50,574.73 1111.75,575.00 1112.00,575.14 1112.25,575.16 1112.50,575.08 1112.75,574.88 1113.00,574.58 1113.25,574.15 1113.50,573.59 1113.75,572.79 1114.00,570.70 1114.25,569.73 1114.50,569.15 1114.75,568.73 1115.00,568.45 1115.25,568.29 1115.50,568.22 1115.75,568.26 1116.00,568.39 1116.25,568.63 1116.50,568.96 1116.75,569.41 1117.00,570.03 1117.25,571.11 1117.50,572.80 1117.75,573.42 1118.00,573.84 1118.25,574.14 1118.50,574.33 1118.75,574.42 1119.00,574.42 1119.25,574.34 1119.50,574.16 1119.75,573.90 1120.00,573.54 1120.25,573.06 1120.50,572.35 1120.75,570.65 1121.00,569.98 1121.25,569.54 1121.50,569.23 1121.75,569.03 1122.00,568.91 1122.25,568.88 1122.50,568.92 1122.75,569.05 1123.00,569.25 1123.25,569.53 1123.50,569.92 1123.75,570.44 1124.00,571.81 1124.25,572.66 1124.50,573.11 1124.75,573.43 1125.00,573.65 1125.25,573.78 1125.50,573.84 1125.75,573.83 1126.00,573.75 1126.25,573.59 1126.50,573.37 1126.75,573.07 1127.00,572.66 1127.25,572.02 1127.50,570.69 1127.75,570.20 1128.00,569.88 1128.25,569.65 1128.50,569.50 1128.75,569.42 1129.00,569.40 1129.25,569.45 1129.50,569.56" fill="none" stroke="#5f5fa8" stroke-width="1.1"/><rect x="660" y="564.5" width="5" height="14" fill="#6464c8" fill-opacity="0.8"/><rect x="852" y="564.5" width="5" height="14" fill="#6464c8" fill-opacity="0.8"/><rect x="1049" y="564.5" width="5" height="14" fill="#6464c8" fill-opacity="0.8"/><rect x="853" y="557.5" width="1" height="35" fill="#5f5fa8"/><rect x="1050" y="557.5" width="1" height="35" fill="#5f5fa8"/><rect x="660" y="571.0" width="470" height="1" fill="#2e2e44"/><path d="M660.50,628.67 660.75,630.55 661.00,640.50 661.25,649.33 661.50,651.00 661.75,649.33 662.00,640.50 662.25,628.45 662.50,626.17 662.75,628.45 663.00,640.50 663.25,648.83 663.50,650.40 663.75,648.83 664.00,640.50 664.25,629.19 664.50,627.05 664.75,629.19 665.00,640.50 665.25,650.71 665.50,652.65 665.75,650.71 666.00,640.50 666.25,632.26 666.50,630.71 666.75,632.26 667.00,640.50 667.25,651.63 667.50,653.73 667.75,651.63 668.00,640.50 668.25,632.40 668.50,630.86 668.75,632.40 669.00,640.50 669.25,651.15 669.50,653.17 669.75,651.15 670.00,640.50 670.25,632.19 670.50,630.62 670.75,632.19 671.00,640.50 671.25,648.95 671.50,650.54 671.75,648.95 672.00,640.50 672.25,629.91 672.50,627.90 672.75,629.91 673.00,620.95 673.25,621.41 673.50,622.44 673.75,624.07 674.00,626.33 674.25,629.36 674.50,633.63 674.75,644.78 675.00,649.93 675.25,653.07 675.50,655.27 675.75,656.77 676.00,657.66 676.25,658.00 676.50,657.80 676.75,657.08 677.00,655.84 677.25,654.05 677.50,651.64 677.75,648.37 678.00,642.60 678.25,633.55 678.50,630.26 678.75,628.00 679.00,626.42 679.25,625.41 679.50,624.91 679.75,624.90 680.00,625.36 680.25,626.28 680.50,627.68 680.75,629.60 681.00,632.17 681.25,635.94 681.50,645.02 681.75,648.63 682.00,650.96 682.25,652.59 682.50,653.69 682.75,654.32 683.00,654.50 683.25,654.26 683.50,653.60 683.75,652.52 684.00,651.00 684.25,648.96 684.50,646.14 684.75,638.82 685.00,634.32 685.25,631.89 685.50,630.21 685.75,629.04 686.00,628.32 686.25,628.00 686.50,628.06 686.75,628.51 687.00,629.32 687.25,630.52 687.50,632.14 687.75,634.33 688.00,637.75 688.25,644.84 688.50,647.43 688.75,649.16 689.00,650.38 689.25,651.18 689.50,651.61 689.75,651.69 690.00,651.42 690.25,650.83 690.50,649.90 690.75,648.61 691.00,646.88 691.25,644.43 691.50,638.05 691.75,635.10 692.00,633.31 692.25,632.05 692.50,631.19 692.75,630.68 693.00,630.49 693.25,630.60 693.50,631.01 693.75,631.72 694.00,632.75 694.25,634.12 694.50,636.00 694.75,639.30 695.00,644.47 695.25,646.36 695.50,647.65 695.75,648.56 696.00,649.13 696.25,649.42 696.50,649.43 696.75,649.16 697.00,648.64 697.25,647.84 697.50,646.74 697.75,645.27 698.00,643.11 698.25,637.91 698.50,635.85 698.75,634.52 699.00,633.58 699.25,632.95 699.50,632.59 699.75,632.49 700.00,632.63 700.25,633.01 700.50,633.62 700.75,634.49 701.00,635.66 701.25,637.27 701.50,641.46 701.75,644.04 702.00,645.42 702.25,646.39 702.50,647.06 702.75,647.47 703.00,647.65 703.25,647.62 703.50,647.36 703.75,646.90 704.00,646.21 704.25,645.28 704.50,644.03 704.75,642.07 705.00,638.02 705.25,636.54 705.50,635.54 705.75,634.85 706.00,634.39 706.25,634.14 706.50,634.10 706.75,634.25 707.00,634.59 707.25,635.12 707.50,635.86 707.75,636.85 708.00,638.25 708.25,641.90 708.50,643.59 708.75,644.62 709.00,645.33 709.25,645.83 709.50,646.12 709.75,646.23 710.00,646.16 710.25,645.93 710.50,645.52 710.75,644.94 711.00,644.15 711.25,643.08 711.50,641.19 711.75,638.23 712.00,637.15 712.25,636.41 712.50,635.89 712.75,635.56 713.00,635.40 713.25,635.39 713.50,635.54 713.75,635.84 714.00,636.30 714.25,636.93 714.50,637.77 714.75,639.01 715.00,641.98 715.25,643.16 715.50,643.92 715.75,644.46 716.00,644.82 716.25,645.02 716.50,645.08 716.75,645.00 717.00,644.79 717.25,644.43 717.50,643.94 717.75,643.27 718.00,642.35 718.25,639.95 718.50,638.48 718.75,637.68 719.00,637.13 719.25,636.75 719.50,636.51 719.75,636.41 720.00,636.43 720.25,636.57 720.50,636.84 720.75,637.23 721.00,637.76 721.25,638.48 721.50,639.60 721.75,641.92 722.00,642.77 722.25,643.34 722.50,643.73 722.75,644.00 723.00,644.14 723.25,644.16 723.50,644.08 723.75,643.88 724.00,643.58 724.25,643.15 724.50,642.59 724.75,641.79 725.00,639.70 725.25,638.73 725.50,638.15 725.75,637.73 726.00,637.45 726.25,637.29 726.50,637.22 726.75,637.26 727.00,637.39 727.25,637.63 727.50,637.96 727.75,638.41 728.00,639.03 728.25,640.11 728.50,641.80 728.75,642.42 729.00,642.84 729.25,643.14 729.50,643.33 729.75,643.42 730.00,643.42 730.25,643.34 730.50,643.16 730.75,642.90 731.00,642.54 731.25,642.06 731.50,641.35 731.75,639.65 732.00,638.98 732.25,638.54 732.50,638.23 732.75,638.03 733.00,637.91 733.25,637.88 733.50,637.92 733.75,638.05 734.00,638.25 734.25,638.53 734.50,638.92 734.75,639.44 735.00,640.81 735.25,641.66 735.50,642.11 735.75,642.43 736.00,642.65 736.25,642.78 736.50,642.84 736.75,642.83 737.00,642.75 737.25,642.59 737.50,642.37 737.75,642.07 738.00,641.66 738.25,641.02 738.50,639.69 738.75,639.20 739.00,638.88 739.25,638.65 739.50,638.50 739.75,638.42 740.00,638.40 740.25,638.45 740.50,638.56 740.75,638.74 741.00,638.98 741.25,639.31 741.50,639.76 741.75,640.96 742.00,641.51 742.25,641.85 742.50,642.08 742.75,642.24 743.00,642.34 743.25,642.38 743.50,642.35 743.75,642.28 744.00,642.14 744.25,641.95 744.50,641.69 744.75,641.34 745.00,640.73 745.25,639.76 745.50,639.40 745.75,639.16 746.00,638.99 746.25,638.88 746.50,638.83 746.75,638.83 747.00,638.88 747.25,638.98 747.50,639.13 747.75,639.33 748.00,639.61 748.25,640.01 748.50,640.98 748.75,641.37 749.00,641.62 749.25,641.80 749.50,641.91 749.75,641.98 750.00,642.00 750.25,641.97 750.50,641.90 750.75,641.79 751.00,641.62 751.25,641.41 751.50,641.10 751.75,640.32 752.00,639.84 752.25,640.50 752.50,640.50 752.75,640.50 753.00,640.50 753.25,640.50 753.50,640.50 753.75,640.50 754.00,640.50 754.25,640.50 754.50,640.50 754.75,640.50 755.00,638.83 755.25,637.38 755.50,636.30 755.75,635.66 756.00,635.44 756.25,635.56 756.50,635.91 756.75,636.36 757.00,636.77 757.25,637.06 757.50,637.21 757.75,637.25 758.00,637.28 758.25,637.41 758.50,637.80 758.75,638.54 759.00,639.70 759.25,641.26 759.50,643.13 759.75,645.13 760.00,647.04 760.25,648.63 760.50,649.66 760.75,649.98 761.00,649.52 761.25,648.28 761.50,646.41 761.75,644.10 762.00,641.62 762.25,639.22 762.50,637.16 762.75,635.58 763.00,634.59 763.25,634.24 763.50,634.35 763.75,634.76 764.00,635.28 764.25,635.76 764.50,636.09 764.75,636.23 765.00,636.25 765.25,636.23 765.50,636.35 765.75,636.73 766.00,637.52 766.25,638.75 766.50,640.42 766.75,642.40 767.00,644.52 767.25,646.55 767.50,648.25 767.75,649.40 768.00,649.84 768.25,649.52 768.50,648.46 768.75,646.79 769.00,644.71 769.25,642.46 769.50,640.29 769.75,638.40 770.00,636.96 770.25,636.02 770.50,635.57 770.75,635.53 771.00,635.75 771.25,636.08 771.50,636.38 771.75,636.56 772.00,636.59 772.25,636.51 772.50,636.40 772.75,636.39 773.00,636.63 773.25,637.21 773.50,638.22 773.75,639.62 774.00,641.35 774.25,643.25 774.50,645.13 774.75,646.76 775.00,647.95 775.25,648.56 775.50,648.50 775.75,647.79 776.00,646.52 776.25,644.84 776.50,642.97 776.75,641.11 777.00,639.45 777.25,638.13 777.50,637.22 777.75,636.72 778.00,636.57 778.25,636.64 778.50,636.83 778.75,637.00 779.00,637.07 779.25,637.01 779.50,636.85 779.75,636.66 780.00,636.55 780.25,636.65 780.50,637.07 780.75,637.86 781.00,639.03 781.25,640.52 781.50,642.20 781.75,643.91 782.00,645.45 782.25,646.65 782.50,647.36 782.75,647.50 783.00,647.08 783.25,646.14 783.50,644.81 783.75,643.27 784.00,641.70 784.25,640.25 784.50,639.07 784.75,638.21 785.00,637.69 785.25,637.47 785.50,637.45 785.75,637.52 786.00,637.59 786.25,637.58 786.50,637.45 786.75,637.23 787.00,636.98 787.25,636.79 787.50,636.79 787.75,637.06 788.00,637.66 788.25,638.62 788.50,639.88 788.75,641.35 789.00,642.88 789.25,644.31 789.50,645.48 789.75,646.26 790.00,646.55 790.25,646.35 790.50,645.68 790.75,644.66 791.00,643.41 791.25,642.09 791.50,640.85 791.75,639.80 792.00,639.01 792.25,638.50 792.50,638.24 792.75,638.15 793.00,638.15 793.25,638.14 793.50,638.07 793.75,637.90 794.00,637.63 794.25,637.34 794.50,637.09 794.75,637.00 795.00,637.14 795.25,637.58 795.50,638.35 795.75,639.40 796.00,640.67 796.25,642.03 796.50,643.35 796.75,644.46 797.00,645.26 797.25,645.66 797.50,645.63 797.75,645.18 798.00,644.41 798.25,643.41 798.50,642.32 798.75,641.27 799.00,640.36 799.25,639.65 799.50,639.16 799.75,638.88 800.00,638.76 800.25,638.70 800.50,638.65 800.75,638.53 801.00,638.33 801.25,638.04 801.50,637.72 801.75,637.43 802.00,637.26 802.25,637.30 802.50,637.60 802.75,638.20 803.00,639.07 803.25,640.15 803.50,641.35 803.75,642.53 804.00,643.58 804.25,644.38 804.50,644.84 804.75,644.94 805.00,644.67 805.25,644.10 805.50,643.32 805.75,642.44 806.00,641.55 806.25,640.77 806.50,640.14 806.75,639.69 807.00,639.42 807.25,639.27 807.50,639.18 807.75,639.10 808.00,638.96 808.25,638.73 808.50,638.44 808.75,638.10 809.00,637.78 809.25,637.56 809.50,637.51 809.75,637.70 810.00,638.14 810.25,638.85 810.50,639.76 810.75,640.80 811.00,641.86 811.25,642.82 811.50,643.60 811.75,644.10 812.00,644.29 812.25,644.16 812.50,643.76 812.75,643.16 813.00,642.45 813.25,641.72 813.50,641.05 813.75,640.51 814.00,640.11 814.25,639.85 814.50,639.69 814.75,639.59 815.00,639.49 815.25,639.33 815.50,639.11 815.75,638.81 816.00,638.46 816.25,638.13 816.50,637.87 816.75,637.76 817.00,637.85 817.25,638.17 817.50,638.73 817.75,639.48 818.00,640.37 818.25,641.31 818.50,642.19 818.75,642.92 819.00,643.44 819.25,643.69 819.50,643.67 819.75,643.41 820.00,642.96 820.25,642.40 820.50,641.80 820.75,641.24 821.00,640.78 821.25,640.42 821.50,640.18 821.75,640.03 822.00,639.93 822.25,639.82 822.50,639.66 822.75,639.44 823.00,639.15 823.25,640.50 823.50,640.50 823.75,640.50 824.00,640.50 824.25,640.50 824.50,640.50 824.75,640.50 825.00,640.50 825.25,640.50 825.50,640.50 825.75,640.50 826.00,640.50 826.25,640.50 826.50,640.50 826.75,640.50 827.00,640.50 827.25,640.50 827.50,640.50 827.75,640.50 828.00,640.50 828.25,640.50 828.50,640.50 828.75,640.50 829.00,640.50 829.25,640.50 829.50,640.50 829.75,640.50 830.00,640.50 830.25,640.50 830.50,640.50 830.75,640.50 831.00,640.50 831.25,640.50 831.50,640.50 831.75,640.50 832.00,640.50 832.25,640.50 832.50,640.50 832.75,640.50 833.00,640.50 833.25,640.50 833.50,640.50 833.75,640.50 834.00,640.50 834.25,640.50 834.50,640.50 834.75,640.50 835.00,640.50 835.25,640.50 835.50,640.50 835.75,640.50 836.00,640.50 836.25,640.50 836.50,640.50 836.75,640.50 837.00,640.50 837.25,640.50 837.50,640.50 837.75,640.50 838.00,640.50 838.25,640.50 838.50,640.50 838.75,640.50 839.00,640.50 839.25,640.50 839.50,640.50 839.75,640.50 840.00,640.50 840.25,640.50 840.50,640.50 840.75,640.50 841.00,640.50 841.25,640.50 841.50,640.50 841.75,640.50 842.00,640.50 842.25,640.50 842.50,640.50 842.75,640.50 843.00,640.50 843.25,640.50 843.50,640.50 843.75,640.50 844.00,640.50 844.25,640.50 844.50,640.50 844.75,640.50 845.00,640.50 845.25,640.50 845.50,640.50 845.75,640.50 846.00,640.50 846.25,640.50 846.50,640.50 846.75,640.50 847.00,640.50 847.25,640.50 847.50,640.50 847.75,640.50 848.00,640.50 848.25,640.50 848.50,640.50 848.75,640.50 849.00,640.50 849.25,640.50 849.50,640.50 849.75,640.50 850.00,640.50 850.25,640.50 850.50,640.50 850.75,640.50 851.00,640.50 851.25,640.50 851.50,640.50 851.75,640.50 852.00,640.50 852.25,627.32 852.50,624.82 852.75,627.32 853.00,640.50 853.25,649.16 853.50,650.80 853.75,649.16 854.00,640.50 854.25,631.20 854.50,629.44 854.75,631.20 855.00,640.50 855.25,652.40 855.50,654.65 855.75,652.40 856.00,640.50 856.25,626.54 856.50,623.90 856.75,626.54 857.00,640.50 857.25,652.07 857.50,654.26 857.75,652.07 858.00,640.50 858.25,630.09 858.50,628.12 858.75,630.09 859.00,640.50 859.25,654.64 859.50,657.32 859.75,654.64 860.00,640.50 860.25,632.34 860.50,630.79 860.75,632.34 861.00,640.50 861.25,653.88 861.50,656.42 861.75,653.88 862.00,640.50 862.25,630.77 862.50,628.93 862.75,630.77 863.00,640.50 863.25,649.29 863.50,650.95 863.75,649.29 864.00,640.50 864.25,631.88 864.50,630.25 864.75,631.88 865.00,620.95 865.25,621.41 865.50,622.44 865.75,624.07 866.00,626.33 866.25,629.36 866.50,633.63 866.75,644.78 867.00,649.93 867.25,653.07 867.50,655.27 867.75,656.77 868.00,657.66 868.25,658.00 868.50,657.80 868.75,657.08 869.00,655.84 869.25,654.05 869.50,651.64 869.75,648.37 870.00,642.60 870.25,633.55 870.50,630.26 870.75,628.00 871.00,626.42 871.25,625.41 871.50,624.91 871.75,624.90 872.00,625.36 872.25,626.28 872.50,627.68 872.75,629.60 873.00,632.17 873.25,635.94 873.50,645.02 873.75,648.63 874.00,650.96 874.25,652.59 874.50,653.69 874.75,654.32 875.00,654.50 875.25,654.26 875.50,653.60 875.75,652.52 876.00,651.00 876.25,648.96 876.50,646.14 876.75,638.82 877.00,634.32 877.25,631.89 877.50,630.21 877.75,629.04 878.00,628.32 878.25,628.00 878.50,628.06 878.75,628.51 879.00,629.32 879.25,630.52 879.50,632.14 879.75,634.33 880.00,637.75 880.25,644.84 880.50,647.43 880.75,649.16 881.00,650.38 881.25,651.18 881.50,651.61 881.75,651.69 882.00,651.42 882.25,650.83 882.50,649.90 882.75,648.61 883.00,646.88 883.25,644.43 883.50,638.05 883.75,635.10 884.00,633.31 884.25,632.05 884.50,631.19 884.75,630.68 885.00,630.49 885.25,630.60 885.50,631.01 885.75,631.72 886.00,632.75 886.25,634.12 886.50,636.00 886.75,639.30 887.00,644.47 887.25,646.36 887.50,647.65 887.75,648.56 888.00,649.13 888.25,649.42 888.50,649.43 888.75,649.16 889.00,648.64 889.25,647.84 889.50,646.74 889.75,645.27 890.00,643.11 890.25,637.91 890.50,635.85 890.75,634.52 891.00,633.58 891.25,632.95 891.50,632.59 891.75,632.49 892.00,632.63 892.25,633.01 892.50,633.62 892.75,634.49 893.00,635.66 893.25,637.27 893.50,641.46 893.75,644.04 894.00,645.42 894.25,646.39 894.50,647.06 894.75,647.47 895.00,647.65 895.25,647.62 895.50,647.36 895.75,646.90 896.00,646.21 896.25,645.28 896.50,644.03 896.75,642.07 897.00,638.02 897.25,636.54 897.50,635.54 897.75,634.85 898.00,634.39 898.25,634.14 898.50,634.10 898.75,634.25 899.00,634.59 899.25,635.12 899.50,635.86 899.75,636.85 900.00,638.25 900.25,641.90 900.50,643.59 900.75,644.62 901.00,645.33 901.25,645.83 901.50,646.12 901.75,646.23 902.00,646.16 902.25,645.93 902.50,645.52 902.75,644.94 903.00,644.15 903.25,643.08 903.50,641.19 903.75,638.23 904.00,637.15 904.25,636.41 904.50,635.89 904.75,635.56 905.00,635.40 905.25,635.39 905.50,635.54 905.75,635.84 906.00,636.30 906.25,636.93 906.50,637.77 906.75,639.01 907.00,641.98 907.25,643.16 907.50,643.92 907.75,644.46 908.00,644.82 908.25,645.02 908.50,645.08 908.75,645.00 909.00,644.79 909.25,644.43 909.50,643.94 909.75,643.27 910.00,642.35 910.25,639.95 910.50,638.48 910.75,637.68 911.00,637.13 911.25,636.75 911.50,636.51 911.75,636.41 912.00,636.43 912.25,636.57 912.50,636.84 912.75,637.23 913.00,637.76 913.25,638.48 913.50,639.60 913.75,641.92 914.00,642.77 914.25,643.34 914.50,643.73 914.75,644.00 915.00,644.14 915.25,644.16 915.50,644.08 915.75,643.88 916.00,643.58 916.25,643.15 916.50,642.59 916.75,641.79 917.00,639.70 917.25,638.73 917.50,638.15 917.75,637.73 918.00,637.45 918.25,637.29 918.50,637.22 918.75,637.26 919.00,637.39 919.25,637.63 919.50,637.96 919.75,638.41 920.00,639.03 920.25,640.11 920.50,641.80 920.75,642.42 921.00,642.84 921.25,643.14 921.50,643.33 921.75,643.42 922.00,643.42 922.25,643.34 922.50,643.16 922.75,642.90 923.00,642.54 923.25,642.06 923.50,641.35 923.75,639.65 924.00,638.98 924.25,638.54 924.50,638.23 924.75,638.03 925.00,637.91 925.25,637.88 925.50,637.92 925.75,638.05 926.00,638.25 926.25,638.53 926.50,638.92 926.75,639.44 927.00,640.81 927.25,641.66 927.50,642.11 927.75,642.43 928.00,642.65 928.25,642.78 928.50,642.84 928.75,642.83 929.00,642.75 929.25,642.59 929.50,642.37 929.75,642.07 930.00,641.66 930.25,641.02 930.50,639.69 930.75,639.20 931.00,638.88 931.25,638.65 931.50,638.50 931.75,638.42 932.00,638.40 932.25,638.45 932.50,638.56 932.75,638.74 933.00,638.98 933.25,639.31 933.50,639.76 933.75,640.96 934.00,641.51 934.25,641.85 934.50,642.08 934.75,642.24 935.00,642.34 935.25,642.38 935.50,642.35 935.75,642.28 936.00,642.14 936.25,641.95 936.50,641.69 936.75,641.34 937.00,640.73 937.25,639.76 937.50,639.40 937.75,639.16 938.00,638.99 938.25,638.88 938.50,638.83 938.75,638.83 939.00,638.88 939.25,638.98 939.50,639.13 939.75,639.33 940.00,639.61 940.25,640.01 940.50,640.98 940.75,641.37 941.00,641.62 941.25,641.80 941.50,641.91 941.75,641.98 942.00,642.00 942.25,641.97 942.50,641.90 942.75,641.79 943.00,641.62 943.25,641.41 943.50,641.10 943.75,640.32 944.00,639.84 944.25,640.50 944.50,640.50 944.75,640.50 945.00,640.50 945.25,640.50 945.50,640.50 945.75,640.50 946.00,640.50 946.25,640.50 946.50,640.50 946.75,640.50 947.00,640.50 947.25,640.50 947.50,640.50 947.75,640.50 948.00,640.50 948.25,640.50 948.50,640.50 948.75,640.50 949.00,640.50 949.25,640.50 949.50,640.50 949.75,640.50 950.00,640.50 950.25,640.50 950.50,640.50 950.75,640.50 951.00,640.50 951.25,640.50 951.50,640.50 951.75,640.50 952.00,640.50 952.25,640.50 952.50,640.50 952.75,640.50 953.00,638.83 953.25,637.38 953.50,636.30 953.75,635.66 954.00,635.44 954.25,635.56 954.50,635.91 954.75,636.36 955.00,636.77 955.25,637.06 955.50,637.21 955.75,637.25 956.00,637.28 956.25,637.41 956.50,637.80 956.75,638.54 957.00,639.70 957.25,641.26 957.50,643.13 957.75,645.13 958.00,647.04 958.25,648.63 958.50,649.66 958.75,649.98 959.00,649.52 959.25,648.28 959.50,646.41 959.75,644.10 960.00,641.62 960.25,639.22 960.50,637.16 960.75,635.58 961.00,634.59 961.25,634.24 961.50,634.35 961.75,634.76 962.00,635.28 962.25,635.76 962.50,636.09 962.75,636.23 963.00,636.25 963.25,636.23 963.50,636.35 963.75,636.73 964.00,637.52 964.25,638.75 964.50,640.42 964.75,642.40 965.00,644.52 965.25,646.55 965.50,648.25 965.75,649.40 966.00,649.84 966.25,649.52 966.50,648.46 966.75,646.79 967.00,644.71 967.25,642.46 967.50,640.29 967.75,638.40 968.00,636.96 968.25,636.02 968.50,635.57 968.75,635.53 969.00,635.75 969.25,636.08 969.50,636.38 969.75,636.56 970.00,636.59 970.25,636.51 970.50,636.40 970.75,636.39 971.00,636.63 971.25,637.21 971.50,638.22 971.75,639.62 972.00,641.35 972.25,643.25 972.50,645.13 972.75,646.76 973.00,647.95 973.25,648.56 973.50,648.50 973.75,647.79 974.00,646.52 974.25,644.84 974.50,642.97 974.75,641.11 975.00,639.45 975.25,638.13 975.50,637.22 975.75,636.72 976.00,636.57 976.25,636.64 976.50,636.83 976.75,637.00 977.00,637.07 977.25,637.01 977.50,636.85 977.75,636.66 978.00,636.55 978.25,636.65 978.50,637.07 978.75,637.86 979.00,639.03 979.25,640.52 979.50,642.20 979.75,643.91 980.00,645.45 980.25,646.65 980.50,647.36 980.75,647.50 981.00,647.08 981.25,646.14 981.50,644.81 981.75,643.27 982.00,641.70 982.25,640.25 982.50,639.07 982.75,638.21 983.00,637.69 983.25,637.47 983.50,637.45 983.75,637.52 984.00,637.59 984.25,637.58 984.50,637.45 984.75,637.23 985.00,636.98 985.25,636.79 985.50,636.79 985.75,637.06 986.00,637.66 986.25,638.62 986.50,639.88 986.75,641.35 987.00,642.88 987.25,644.31 987.50,645.48 987.75,646.26 988.00,646.55 988.25,646.35 988.50,645.68 988.75,644.66 989.00,643.41 989.25,642.09 989.50,640.85 989.75,639.80 990.00,639.01 990.25,638.50 990.50,638.24 990.75,638.15 991.00,638.15 991.25,638.14 991.50,638.07 991.75,637.90 992.00,637.63 992.25,637.34 992.50,637.09 992.75,637.00 993.00,637.14 993.25,637.58 993.50,638.35 993.75,639.40 994.00,640.67 994.25,642.03 994.50,643.35 994.75,644.46 995.00,645.26 995.25,645.66 995.50,645.63 995.75,645.18 996.00,644.41 996.25,643.41 996.50,642.32 996.75,641.27 997.00,640.36 997.25,639.65 997.50,639.16 997.75,638.88 998.00,638.76 998.25,638.70 998.50,638.65 998.75,638.53 999.00,638.33 999.25,638.04 999.50,637.72 999.75,637.43 1000.00,637.26 1000.25,637.30 1000.50,637.60 1000.75,638.20 1001.00,639.07 1001.25,640.15 1001.50,641.35 1001.75,642.53 1002.00,643.58 1002.25,644.38 1002.50,644.84 1002.75,644.94 1003.00,644.67 1003.25,644.10 1003.50,643.32 1003.75,642.44 1004.00,641.55 1004.25,640.77 1004.50,640.14 1004.75,639.69 1005.00,639.42 1005.25,639.27 1005.50,639.18 1005.75,639.10 1006.00,638.96 1006.25,638.73 1006.50,638.44 1006.75,638.10 1007.00,637.78 1007.25,637.56 1007.50,637.51 1007.75,637.70 1008.00,638.14 1008.25,638.85 1008.50,639.76 1008.75,640.80 1009.00,641.86 1009.25,642.82 1009.50,643.60 1009.75,644.10 1010.00,644.29 1010.25,644.16 1010.50,643.76 1010.75,643.16 1011.00,642.45 1011.25,641.72 1011.50,641.05 1011.75,640.51 1012.00,640.11 1012.25,639.85 1012.50,639.69 1012.75,639.59 1013.00,639.49 1013.25,639.33 1013.50,639.11 1013.75,638.81 1014.00,638.46 1014.25,638.13 1014.50,637.87 1014.75,637.76 1015.00,637.85 1015.25,638.17 1015.50,638.73 1015.75,639.48 1016.00,640.37 1016.25,641.31 1016.50,642.19 1016.75,642.92 1017.00,643.44 1017.25,643.69 1017.50,643.67 1017.75,643.41 1018.00,642.96 1018.25,642.40 1018.50,641.80 1018.75,641.24 1019.00,640.78 1019.25,640.42 1019.50,640.18 1019.75,640.03 1020.00,639.93 1020.25,639.82 1020.50,639.66 1020.75,639.44 1021.00,639.15 1021.25,640.50 1021.50,640.50 1021.75,640.50 1022.00,640.50 1022.25,640.50 1022.50,640.50 1022.75,640.50 1023.00,640.50 1023.25,640.50 1023.50,640.50 1023.75,640.50 1024.00,640.50 1024.25,640.50 1024.50,640.50 1024.75,640.50 1025.00,640.50 1025.25,640.50 1025.50,640.50 1025.75,640.50 1026.00,640.50 1026.25,640.50 1026.50,640.50 1026.75,640.50 1027.00,640.50 1027.25,640.50 1027.50,640.50 1027.75,640.50 1028.00,640.50 1028.25,640.50 1028.50,640.50 1028.75,640.50 1029.00,640.50 1029.25,640.50 1029.50,640.50 1029.75,640.50 1030.00,640.50 1030.25,640.50 1030.50,640.50 1030.75,640.50 1031.00,640.50 1031.25,640.50 1031.50,640.50 1031.75,640.50 1032.00,640.50 1032.25,640.50 1032.50,640.50 1032.75,640.50 1033.00,640.50 1033.25,640.50 1033.50,640.50 1033.75,640.50 1034.00,640.50 1034.25,640.50 1034.50,640.50 1034.75,640.50 1035.00,640.50 1035.25,640.50 1035.50,640.50 1035.75,640.50 1036.00,640.50 1036.25,640.50 1036.50,640.50 1036.75,640.50 1037.00,640.50 1037.25,640.50 1037.50,640.50 1037.75,640.50 1038.00,640.50 1038.25,640.50 1038.50,640.50 1038.75,640.50 1039.00,640.50 1039.25,640.50 1039.50,640.50 1039.75,640.50 1040.00,640.50 1040.25,640.50 1040.50,640.50 1040.75,640.50 1041.00,640.50 1041.25,640.50 1041.50,640.50 1041.75,640.50 1042.00,640.50 1042.25,640.50 1042.50,640.50 1042.75,640.50 1043.00,640.50 1043.25,640.50 1043.50,640.50 1043.75,640.50 1044.00,640.50 1044.25,640.50 1044.50,640.50 1044.75,640.50 1045.00,640.50 1045.25,640.50 1045.50,640.50 1045.75,640.50 1046.00,640.50 1046.25,640.50 1046.50,640.50 1046.75,640.50 1047.00,640.50 1047.25,640.50 1047.50,640.50 1047.75,640.50 1048.00,640.50 1048.25,640.50 1048.50,640.50 1048.75,640.50 1049.00,640.50 1049.25,630.65 1049.50,628.79 1049.75,630.65 1050.00,640.50 1050.25,653.61 1050.50,656.09 1050.75,653.61 1051.00,640.50 1051.25,631.48 1051.50,629.77 1051.75,631.48 1052.00,640.50 1052.25,652.10 1052.50,654.30 1052.75,652.10 1053.00,640.50 1053.25,628.53 1053.50,626.26 1053.75,628.53 1054.00,640.50 1054.25,650.76 1054.50,652.70 1054.75,650.76 1055.00,640.50 1055.25,629.11 1055.50,626.96 1055.75,629.11 1056.00,640.50 1056.25,648.77 1056.50,650.33 1056.75,648.77 1057.00,640.50 1057.25,632.25 1057.50,630.69 1057.75,632.25 1058.00,640.50 1058.25,649.69 1058.50,651.43 1058.75,649.69 1059.00,640.50 1059.25,628.26 1059.50,625.94 1059.75,628.26 1060.00,640.50 1060.25,651.11 1060.50,653.12 1060.75,651.11 1061.00,640.50 1061.25,630.62 1061.50,628.75 1061.75,630.62 1062.00,620.95 1062.25,621.41 1062.50,622.44 1062.75,624.07 1063.00,626.33 1063.25,629.36 1063.50,633.63 1063.75,644.78 1064.00,649.93 1064.25,653.07 1064.50,655.27 1064.75,656.77 1065.00,657.66 1065.25,658.00 1065.50,657.80 1065.75,657.08 1066.00,655.84 1066.25,654.05 1066.50,651.64 1066.75,648.37 1067.00,642.60 1067.25,633.55 1067.50,630.26 1067.75,628.00 1068.00,626.42 1068.25,625.41 1068.50,624.91 1068.75,624.90 1069.00,625.36 1069.25,626.28 1069.50,627.68 1069.75,629.60 1070.00,632.17 1070.25,635.94 1070.50,645.02 1070.75,648.63 1071.00,650.96 1071.25,652.59 1071.50,653.69 1071.75,654.32 1072.00,654.50 1072.25,654.26 1072.50,653.60 1072.75,652.52 1073.00,651.00 1073.25,648.96 1073.50,646.14 1073.75,638.82 1074.00,634.32 1074.25,631.89 1074.50,630.21 1074.75,629.04 1075.00,628.32 1075.25,628.00 1075.50,628.06 1075.75,628.51 1076.00,629.32 1076.25,630.52 1076.50,632.14 1076.75,634.33 1077.00,637.75 1077.25,644.84 1077.50,647.43 1077.75,649.16 1078.00,650.38 1078.25,651.18 1078.50,651.61 1078.75,651.69 1079.00,651.42 1079.25,650.83 1079.50,649.90 1079.75,648.61 1080.00,646.88 1080.25,644.43 1080.50,638.05 1080.75,635.10 1081.00,633.31 1081.25,632.05 1081.50,631.19 1081.75,630.68 1082.00,630.49 1082.25,630.60 1082.50,631.01 1082.75,631.72 1083.00,632.75 1083.25,634.12 1083.50,636.00 1083.75,639.30 1084.00,644.47 1084.25,646.36 1084.50,647.65 1084.75,648.56 1085.00,649.13 1085.25,649.42 1085.50,649.43 1085.75,649.16 1086.00,648.64 1086.25,647.84 1086.50,646.74 1086.75,645.27 1087.00,643.11 1087.25,637.91 1087.50,635.85 1087.75,634.52 1088.00,633.58 1088.25,632.95 1088.50,632.59 1088.75,632.49 1089.00,632.63 1089.25,633.01 1089.50,633.62 1089.75,634.49 1090.00,635.66 1090.25,637.27 1090.50,641.46 1090.75,644.04 1091.00,645.42 1091.25,646.39 1091.50,647.06 1091.75,647.47 1092.00,647.65 1092.25,647.62 1092.50,647.36 1092.75,646.90 1093.00,646.21 1093.25,645.28 1093.50,644.03 1093.75,642.07 1094.00,638.02 1094.25,636.54 1094.50,635.54 1094.75,634.85 1095.00,634.39 1095.25,634.14 1095.50,634.10 1095.75,634.25 1096.00,634.59 1096.25,635.12 1096.50,635.86 1096.75,636.85 1097.00,638.25 1097.25,641.90 1097.50,643.59 1097.75,644.62 1098.00,645.33 1098.25,645.83 1098.50,646.12 1098.75,646.23 1099.00,646.16 1099.25,645.93 1099.50,645.52 1099.75,644.94 1100.00,644.15 1100.25,643.08 1100.50,641.19 1100.75,638.23 1101.00,637.15 1101.25,636.41 1101.50,635.89 1101.75,635.56 1102.00,635.40 1102.25,635.39 1102.50,635.54 1102.75,635.84 1103.00,636.30 1103.25,636.93 1103.50,637.77 1103.75,639.01 1104.00,641.98 1104.25,643.16 1104.50,643.92 1104.75,644.46 1105.00,644.82 1105.25,645.02 1105.50,645.08 1105.75,645.00 1106.00,644.79 1106.25,644.43 1106.50,643.94 1106.75,643.27 1107.00,642.35 1107.25,639.95 1107.50,638.48 1107.75,637.68 1108.00,637.13 1108.25,636.75 1108.50,636.51 1108.75,636.41 1109.00,636.43 1109.25,636.57 1109.50,636.84 1109.75,637.23 1110.00,637.76 1110.25,638.48 1110.50,639.60 1110.75,641.92 1111.00,642.77 1111.25,643.34 1111.50,643.73 1111.75,644.00 1112.00,644.14 1112.25,644.16 1112.50,644.08 1112.75,643.88 1113.00,643.58 1113.25,643.15 1113.50,642.59 1113.75,641.79 1114.00,639.70 1114.25,638.73 1114.50,638.15 1114.75,637.73 1115.00,637.45 1115.25,637.29 1115.50,637.22 1115.75,637.26 1116.00,637.39 1116.25,637.63 1116.50,637.96 1116.75,638.41 1117.00,639.03 1117.25,640.11 1117.50,641.80 1117.75,642.42 1118.00,642.84 1118.25,643.14 1118.50,643.33 1118.75,643.42 1119.00,643.42 1119.25,643.34 1119.50,643.16 1119.75,642.90 1120.00,642.54 1120.25,642.06 1120.50,641.35 1120.75,639.65 1121.00,638.98 1121.25,638.54 1121.50,638.23 1121.75,638.03 1122.00,637.91 1122.25,637.88 1122.50,637.92 1122.75,638.05 1123.00,638.25 1123.25,638.53 1123.50,638.92 1123.75,639.44 1124.00,640.81 1124.25,641.66 1124.50,642.11 1124.75,642.43 1125.00,642.65 1125.25,642.78 1125.50,642.84 1125.75,642.83 1126.00,642.75 1126.25,642.59 1126.50,642.37 1126.75,642.07 1127.00,641.66 1127.25,641.02 1127.50,639.69 1127.75,639.20 1128.00,638.88 1128.25,638.65 1128.50,638.50 1128.75,638.42 1129.00,638.40 1129.25,638.45 1129.50,638.56" fill="none" stroke="#5f5fa8" stroke-width="1.1"/><rect x="660" y="633.5" width="5" height="14" fill="#6464c8" fill-opacity="0.8"/><rect x="852" y="633.5" width="5" height="14" fill="#6464c8" fill-opacity="0.8"/><rect x="1049" y="633.5" width="5" height="14" fill="#6464c8" fill-opacity="0.8"/><rect x="853" y="626.5" width="1" height="35" fill="#5f5fa8"/><rect x="1050" y="626.5" width="1" height="35" fill="#5f5fa8"/><rect x="660" y="640.0" width="470" height="1" fill="#2e2e44"/></svg><div style="position:absolute;left:745.2px;top:390.6px;width:236.3px;height:85.1px;background:#e8e8ea;border:3.5px solid #c0272d;box-shadow:0 0 1px #700;"></div><div style="position:absolute;left:765.70px;top:417.48px;font-size:15.5px;line-height:15.5px;white-space:pre;color:#000;font-weight:bold;letter-spacing:0.35px;transform:scaleX(1.0113);transform-origin:0 0;">Le fondu en fermeture a</div><div style="position:absolute;left:765.70px;top:436.68px;font-size:15.5px;line-height:15.5px;white-space:pre;color:#000;font-weight:bold;letter-spacing:0.4px;transform:scaleX(1.0091);transform-origin:0 0;">été ajouté à notre piste.</div><div style="position:absolute;left:0px;top:171px;width:1151px;height:29px;background:#e8e8ea;"></div><div style="position:absolute;left:12.5px;top:172.5px;width:25.5px;height:26.5px;background:#dcdde1;border-radius:4px;"></div><svg style="position:absolute;left:18px;top:178px;" width="14" height="14" viewBox="0 0 14 14"><path d="M11.04 5.03 L13.14 5.58 L13.14 8.42 L11.04 8.97 L10.73 9.52 L11.30 11.61 L8.84 13.02 L7.31 11.49 L6.69 11.49 L5.16 13.02 L2.70 11.61 L3.27 9.52 L2.96 8.97 L0.86 8.42 L0.86 5.58 L2.96 5.03 L3.27 4.48 L2.70 2.39 L5.16 0.98 L6.69 2.51 L7.31 2.51 L8.84 0.98 L11.30 2.39 L10.73 4.48 Z" fill="none" stroke="#222" stroke-width="1.15" stroke-linejoin="round"/><circle cx="7" cy="7" r="1.75" fill="none" stroke="#222" stroke-width="1.15"/></svg><div style="position:absolute;left:620.2px;top:171.5px;width:39.6px;height:28.5px;background:#b8c9ef;"></div><div style="position:absolute;left:199.80px;top:178.84px;font-size:12px;line-height:12px;white-space:pre;color:#222;font-weight:bold;">15:53,60</div><div style="position:absolute;left:290.56px;top:178.84px;font-size:12px;line-height:12px;white-space:pre;color:#222;font-weight:bold;">15:53,80</div><div style="position:absolute;left:381.32px;top:178.84px;font-size:12px;line-height:12px;white-space:pre;color:#222;font-weight:bold;">15:54,00</div><div style="position:absolute;left:472.08px;top:178.84px;font-size:12px;line-height:12px;white-space:pre;color:#222;font-weight:bold;">15:54,20</div><div style="position:absolute;left:562.84px;top:178.84px;font-size:12px;line-height:12px;white-space:pre;color:#222;font-weight:bold;">15:54,40</div><div style="position:absolute;left:653.60px;top:178.84px;font-size:12px;line-height:12px;white-space:pre;color:#222;font-weight:bold;">15:54,60</div><div style="position:absolute;left:744.36px;top:178.84px;font-size:12px;line-height:12px;white-space:pre;color:#222;font-weight:bold;">15:54,80</div><div style="position:absolute;left:835.12px;top:178.84px;font-size:12px;line-height:12px;white-space:pre;color:#222;font-weight:bold;">15:55,00</div><div style="position:absolute;left:925.88px;top:178.84px;font-size:12px;line-height:12px;white-space:pre;color:#222;font-weight:bold;">15:55,20</div><div style="position:absolute;left:1016.64px;top:178.84px;font-size:12px;line-height:12px;white-space:pre;color:#222;font-weight:bold;">15:55,40</div><div style="position:absolute;left:1103.80px;top:178.84px;font-size:12px;line-height:12px;white-space:pre;color:#222;font-weight:bold;">15:55,60</div><div style="position:absolute;left:201px;top:196.5px;width:1px;height:3.5px;background:#222;"></div><div style="position:absolute;left:223px;top:195px;width:1px;height:5px;background:#222;"></div><div style="position:absolute;left:246px;top:196.5px;width:1px;height:3.5px;background:#222;"></div><div style="position:absolute;left:269px;top:195px;width:1px;height:5px;background:#222;"></div><div style="position:absolute;left:291px;top:196.5px;width:1px;height:3.5px;background:#222;"></div><div style="position:absolute;left:314px;top:195px;width:1px;height:5px;background:#222;"></div><div style="position:absolute;left:337px;top:196.5px;width:1px;height:3.5px;background:#222;"></div><div style="position:absolute;left:360px;top:195px;width:1px;height:5px;background:#222;"></div><div style="position:absolute;left:382px;top:196.5px;width:1px;height:3.5px;background:#222;"></div><div style="position:absolute;left:405px;top:195px;width:1px;height:5px;background:#222;"></div><div style="position:absolute;left:428px;top:196.5px;width:1px;height:3.5px;background:#222;"></div><div style="position:absolute;left:450px;top:195px;width:1px;height:5px;background:#222;"></div><div style="position:absolute;left:473px;top:196.5px;width:1px;height:3.5px;background:#222;"></div><div style="position:absolute;left:496px;top:195px;width:1px;height:5px;background:#222;"></div><div style="position:absolute;left:518px;top:196.5px;width:1px;height:3.5px;background:#222;"></div><div style="position:absolute;left:541px;top:195px;width:1px;height:5px;background:#222;"></div><div style="position:absolute;left:564px;top:196.5px;width:1px;height:3.5px;background:#222;"></div><div style="position:absolute;left:586px;top:195px;width:1px;height:5px;background:#222;"></div><div style="position:absolute;left:609px;top:196.5px;width:1px;height:3.5px;background:#222;"></div><div style="position:absolute;left:632px;top:195px;width:1px;height:5px;background:#222;"></div><div style="position:absolute;left:655px;top:196.5px;width:1px;height:3.5px;background:#222;"></div><div style="position:absolute;left:677px;top:195px;width:1px;height:5px;background:#222;"></div><div style="position:absolute;left:700px;top:196.5px;width:1px;height:3.5px;background:#222;"></div><div style="position:absolute;left:723px;top:195px;width:1px;height:5px;background:#222;"></div><div style="position:absolute;left:745px;top:196.5px;width:1px;height:3.5px;background:#222;"></div><div style="position:absolute;left:768px;top:195px;width:1px;height:5px;background:#222;"></div><div style="position:absolute;left:791px;top:196.5px;width:1px;height:3.5px;background:#222;"></div><div style="position:absolute;left:813px;top:195px;width:1px;height:5px;background:#222;"></div><div style="position:absolute;left:836px;top:196.5px;width:1px;height:3.5px;background:#222;"></div><div style="position:absolute;left:859px;top:195px;width:1px;height:5px;background:#222;"></div><div style="position:absolute;left:881px;top:196.5px;width:1px;height:3.5px;background:#222;"></div><div style="position:absolute;left:904px;top:195px;width:1px;height:5px;background:#222;"></div><div style="position:absolute;left:927px;top:196.5px;width:1px;height:3.5px;background:#222;"></div><div style="position:absolute;left:949px;top:195px;width:1px;height:5px;background:#222;"></div><div style="position:absolute;left:972px;top:196.5px;width:1px;height:3.5px;background:#222;"></div><div style="position:absolute;left:995px;top:195px;width:1px;height:5px;background:#222;"></div><div style="position:absolute;left:1018px;top:196.5px;width:1px;height:3.5px;background:#222;"></div><div style="position:absolute;left:1040px;top:195px;width:1px;height:5px;background:#222;"></div><div style="position:absolute;left:1063px;top:196.5px;width:1px;height:3.5px;background:#222;"></div><div style="position:absolute;left:1086px;top:195px;width:1px;height:5px;background:#222;"></div><div style="position:absolute;left:1108px;top:196.5px;width:1px;height:3.5px;background:#222;"></div><div style="position:absolute;left:1131px;top:195px;width:1px;height:5px;background:#222;"></div><div style="position:absolute;left:0px;top:200px;width:1151px;height:1px;background:#000;"></div><div style="position:absolute;left:0px;top:728px;width:1151px;height:64.5px;background:#f7f7f7;"></div><div style="position:absolute;left:3.0px;top:753.5px;width:2px;height:2px;background:#9a9a9a;border-radius:1px;"></div><div style="position:absolute;left:3.0px;top:758.7px;width:2px;height:2px;background:#9a9a9a;border-radius:1px;"></div><div style="position:absolute;left:3.0px;top:763.9px;width:2px;height:2px;background:#9a9a9a;border-radius:1px;"></div><div style="position:absolute;left:8.4px;top:753.5px;width:2px;height:2px;background:#9a9a9a;border-radius:1px;"></div><div style="position:absolute;left:8.4px;top:758.7px;width:2px;height:2px;background:#9a9a9a;border-radius:1px;"></div><div style="position:absolute;left:8.4px;top:763.9px;width:2px;height:2px;background:#9a9a9a;border-radius:1px;"></div><div style="position:absolute;left:17.60px;top:741.04px;font-size:12px;line-height:12px;white-space:pre;color:#222;transform:scaleX(1.0495);transform-origin:0 0;">Tempo</div><div style="position:absolute;left:83.10px;top:741.04px;font-size:12px;line-height:12px;white-space:pre;color:#222;transform:scaleX(1.0350);transform-origin:0 0;">Indication de mesure</div><div style="position:absolute;left:17.6px;top:759.6px;width:41.3px;height:21.6px;background:#fff;border:1px solid #e6e6e6;border-bottom:1px solid #8a8a8a;border-radius:2px;"></div><div style="position:absolute;left:23.90px;top:764.84px;font-size:12px;line-height:12px;white-space:pre;color:#111;">120</div><div style="position:absolute;left:61.5px;top:759.6px;width:14px;height:21.5px;background:#fbfbfb;border:1px solid #d6d6d6;border-radius:2px;"></div><div style="position:absolute;left:61.5px;top:770.1px;width:14px;height:1px;background:#d6d6d6;"></div><svg style="position:absolute;left:61.5px;top:759.6px;" width="14" height="22" viewBox="0 0 14 22"><path d="M4 7.5 L7 4 L10 7.5 Z" fill="#222"/><path d="M4 14 L7 17.5 L10 14 Z" fill="#222"/></svg><div style="position:absolute;left:83.7px;top:759.6px;width:31.4px;height:21.6px;background:#fff;border:1px solid #e6e6e6;border-bottom:1px solid #8a8a8a;border-radius:2px;"></div><div style="position:absolute;left:88.50px;top:764.84px;font-size:12px;line-height:12px;white-space:pre;color:#111;">4</div><div style="position:absolute;left:117.5px;top:759.6px;width:14px;height:21.5px;background:#fbfbfb;border:1px solid #d6d6d6;border-radius:2px;"></div><div style="position:absolute;left:117.5px;top:770.1px;width:14px;height:1px;background:#d6d6d6;"></div><svg style="position:absolute;left:117.5px;top:759.6px;" width="14" height="22" viewBox="0 0 14 22"><path d="M4 7.5 L7 4 L10 7.5 Z" fill="#222"/><path d="M4 14 L7 17.5 L10 14 Z" fill="#222"/></svg><div style="position:absolute;left:138.35px;top:762.88px;font-size:15.5px;line-height:15.5px;white-space:pre;color:#222;">/</div><div style="position:absolute;left:148.5px;top:759.6px;width:49px;height:21.6px;background:#fff;border:1px solid #d0d0d0;border-radius:2px;"></div><div style="position:absolute;left:152.50px;top:765.34px;font-size:12px;line-height:12px;white-space:pre;color:#111;">4</div><svg style="position:absolute;left:182px;top:766px;" width="10" height="7" viewBox="0 0 10 7"><path d="M1 1.5 L5 5.5 L9 1.5" stroke="#444" stroke-width="1" fill="none"/></svg><div style="position:absolute;left:211.0px;top:753.5px;width:2px;height:2px;background:#9a9a9a;border-radius:1px;"></div><div style="position:absolute;left:211.0px;top:758.7px;width:2px;height:2px;background:#9a9a9a;border-radius:1px;"></div><div style="position:absolute;left:211.0px;top:763.9px;width:2px;height:2px;background:#9a9a9a;border-radius:1px;"></div><div style="position:absolute;left:216.4px;top:753.5px;width:2px;height:2px;background:#9a9a9a;border-radius:1px;"></div><div style="position:absolute;left:216.4px;top:758.7px;width:2px;height:2px;background:#9a9a9a;border-radius:1px;"></div><div style="position:absolute;left:216.4px;top:763.9px;width:2px;height:2px;background:#9a9a9a;border-radius:1px;"></div><div style="position:absolute;left:225.2px;top:740px;width:12.5px;height:11.5px;background:#fff;border:1px solid #555;border-radius:2px;"></div><div style="position:absolute;left:240.50px;top:739.84px;font-size:12px;line-height:12px;white-space:pre;color:#222;transform:scaleX(0.9619);transform-origin:0 0;">Ancrer</div><div style="position:absolute;left:225.2px;top:759.2px;width:149.3px;height:22.5px;background:#f9f9f9;border:1px solid #8a8a8a;border-radius:2px;"></div><div style="position:absolute;left:229.6px;top:763.6px;width:125.2px;height:13.7px;background:#e9e9e9;"></div><div style="position:absolute;left:230.60px;top:764.84px;font-size:12px;line-height:12px;white-space:pre;color:#9a9a9a;">1/8</div><svg style="position:absolute;left:360px;top:766px;" width="10" height="7" viewBox="0 0 10 7"><path d="M1 1.5 L5 5.5 L9 1.5" stroke="#bbb" stroke-width="1" fill="none"/></svg><div style="position:absolute;left:383.0px;top:753.5px;width:2px;height:2px;background:#9a9a9a;border-radius:1px;"></div><div style="position:absolute;left:383.0px;top:758.7px;width:2px;height:2px;background:#9a9a9a;border-radius:1px;"></div><div style="position:absolute;left:383.0px;top:763.9px;width:2px;height:2px;background:#9a9a9a;border-radius:1px;"></div><div style="position:absolute;left:388.4px;top:753.5px;width:2px;height:2px;background:#9a9a9a;border-radius:1px;"></div><div style="position:absolute;left:388.4px;top:758.7px;width:2px;height:2px;background:#9a9a9a;border-radius:1px;"></div><div style="position:absolute;left:388.4px;top:763.9px;width:2px;height:2px;background:#9a9a9a;border-radius:1px;"></div><div style="position:absolute;left:394.3px;top:740.4px;width:229.2px;height:39.1px;background:#2c2f40;border:1.5px solid #c9c9c9;box-shadow:inset 0 0 0 0.5px #777;"></div><div style="position:absolute;left:400.40px;top:747.10px;font-size:28px;line-height:28px;white-space:pre;color:#ffffff;font-weight:normal;">0</div><div style="position:absolute;left:420.40px;top:747.10px;font-size:28px;line-height:28px;white-space:pre;color:#ffffff;font-weight:normal;">0</div><div style="position:absolute;left:446.00px;top:747.10px;font-size:28px;line-height:28px;white-space:pre;color:#ffffff;font-weight:normal;">h</div><div style="position:absolute;left:473.60px;top:747.10px;font-size:28px;line-height:28px;white-space:pre;color:#ffffff;font-weight:normal;">1</div><div style="position:absolute;left:491.00px;top:747.10px;font-size:28px;line-height:28px;white-space:pre;color:#ffffff;font-weight:normal;">5</div><div style="position:absolute;left:517.00px;top:747.10px;font-size:28px;line-height:28px;white-space:pre;color:#ffffff;font-weight:normal;">m</div><div style="position:absolute;left:548.60px;top:747.10px;font-size:28px;line-height:28px;white-space:pre;color:#ffffff;font-weight:normal;">5</div><div style="position:absolute;left:567.70px;top:747.10px;font-size:28px;line-height:28px;white-space:pre;color:#ffffff;font-weight:normal;">4</div><div style="position:absolute;left:594.00px;top:747.10px;font-size:28px;line-height:28px;white-space:pre;color:#ffffff;font-weight:normal;">s</div><svg style="position:absolute;left:615px;top:758px;" width="8" height="6" viewBox="0 0 8 6"><path d="M0.5 0.5 L7.5 0.5 L4 5 Z" fill="#fff"/></svg><div style="position:absolute;left:627.7px;top:728px;width:1px;height:64px;background:#dddddd;"></div><div style="position:absolute;left:630px;top:728px;width:1px;height:64px;background:#e6e6e6;"></div><div style="position:absolute;left:634.0px;top:753.0px;width:2px;height:2px;background:#9a9a9a;border-radius:1px;"></div><div style="position:absolute;left:634.0px;top:758.2px;width:2px;height:2px;background:#9a9a9a;border-radius:1px;"></div><div style="position:absolute;left:634.0px;top:763.4px;width:2px;height:2px;background:#9a9a9a;border-radius:1px;"></div><div style="position:absolute;left:639.4px;top:753.0px;width:2px;height:2px;background:#9a9a9a;border-radius:1px;"></div><div style="position:absolute;left:639.4px;top:758.2px;width:2px;height:2px;background:#9a9a9a;border-radius:1px;"></div><div style="position:absolute;left:639.4px;top:763.4px;width:2px;height:2px;background:#9a9a9a;border-radius:1px;"></div><div style="position:absolute;left:648.70px;top:736.34px;font-size:12px;line-height:12px;white-space:pre;color:#222;transform:scaleX(1.0067);transform-origin:0 0;">Sélection</div><div style="position:absolute;left:676.5px;top:758.4px;width:21.9px;height:21.9px;background:#dcdde1;border-radius:3px;"></div><svg style="position:absolute;left:680.5px;top:762.4px;" width="14" height="14" viewBox="0 0 14 14"><path d="M11.04 5.03 L13.14 5.58 L13.14 8.42 L11.04 8.97 L10.73 9.52 L11.30 11.61 L8.84 13.02 L7.31 11.49 L6.69 11.49 L5.16 13.02 L2.70 11.61 L3.27 9.52 L2.96 8.97 L0.86 8.42 L0.86 5.58 L2.96 5.03 L3.27 4.48 L2.70 2.39 L5.16 0.98 L6.69 2.51 L7.31 2.51 L8.84 0.98 L11.30 2.39 L10.73 4.48 Z" fill="none" stroke="#222" stroke-width="1.15" stroke-linejoin="round"/><circle cx="7" cy="7" r="1.75" fill="none" stroke="#222" stroke-width="1.15"/></svg><div style="position:absolute;left:705.2px;top:734.5px;width:163.3px;height:21px;background:#2c2f40;border:1.5px solid #c9c9c9;"></div><div style="position:absolute;left:710.80px;top:740.84px;font-size:12px;line-height:12px;white-space:pre;color:#ffffff;">0</div><div style="position:absolute;left:721.70px;top:740.84px;font-size:12px;line-height:12px;white-space:pre;color:#ffffff;">0</div><div style="position:absolute;left:733.00px;top:740.84px;font-size:12px;line-height:12px;white-space:pre;color:#ffffff;">h</div><div style="position:absolute;left:745.80px;top:740.84px;font-size:12px;line-height:12px;white-space:pre;color:#ffffff;">1</div><div style="position:absolute;left:756.00px;top:740.84px;font-size:12px;line-height:12px;white-space:pre;color:#ffffff;">5</div><div style="position:absolute;left:768.40px;top:740.84px;font-size:12px;line-height:12px;white-space:pre;color:#ffffff;">m</div><div style="position:absolute;left:784.30px;top:740.84px;font-size:12px;line-height:12px;white-space:pre;color:#ffffff;">5</div><div style="position:absolute;left:794.00px;top:740.84px;font-size:12px;line-height:12px;white-space:pre;color:#ffffff;">4</div><div style="position:absolute;left:805.70px;top:740.84px;font-size:12px;line-height:12px;white-space:pre;color:#ffffff;">.</div><div style="position:absolute;left:813.60px;top:740.84px;font-size:12px;line-height:12px;white-space:pre;color:#ffffff;">4</div><div style="position:absolute;left:824.20px;top:740.84px;font-size:12px;line-height:12px;white-space:pre;color:#ffffff;">7</div><div style="position:absolute;left:834.00px;top:740.84px;font-size:12px;line-height:12px;white-space:pre;color:#ffffff;">4</div><div style="position:absolute;left:845.20px;top:740.84px;font-size:12px;line-height:12px;white-space:pre;color:#ffffff;">s</div><svg style="position:absolute;left:855.4px;top:743.0px;" width="10" height="6" viewBox="0 0 10 6"><path d="M0.5 0.5 L9.5 0.5 L5 5.5 Z" fill="#fff"/></svg><div style="position:absolute;left:705.2px;top:758.9px;width:163.3px;height:21px;background:#2c2f40;border:1.5px solid #c9c9c9;"></div><div style="position:absolute;left:710.80px;top:765.24px;font-size:12px;line-height:12px;white-space:pre;color:#ffffff;">0</div><div style="position:absolute;left:721.70px;top:765.24px;font-size:12px;line-height:12px;white-space:pre;color:#ffffff;">0</div><div style="position:absolute;left:733.00px;top:765.24px;font-size:12px;line-height:12px;white-space:pre;color:#ffffff;">h</div><div style="position:absolute;left:745.80px;top:765.24px;font-size:12px;line-height:12px;white-space:pre;color:#ffffff;">1</div><div style="position:absolute;left:756.00px;top:765.24px;font-size:12px;line-height:12px;white-space:pre;color:#ffffff;">5</div><div style="position:absolute;left:768.40px;top:765.24px;font-size:12px;line-height:12px;white-space:pre;color:#ffffff;">m</div><div style="position:absolute;left:784.30px;top:765.24px;font-size:12px;line-height:12px;white-space:pre;color:#ffffff;">5</div><div style="position:absolute;left:794.00px;top:765.24px;font-size:12px;line-height:12px;white-space:pre;color:#ffffff;">4</div><div style="position:absolute;left:805.70px;top:765.24px;font-size:12px;line-height:12px;white-space:pre;color:#ffffff;">.</div><div style="position:absolute;left:813.60px;top:765.24px;font-size:12px;line-height:12px;white-space:pre;color:#ffffff;">5</div><div style="position:absolute;left:824.20px;top:765.24px;font-size:12px;line-height:12px;white-space:pre;color:#ffffff;">6</div><div style="position:absolute;left:834.00px;top:765.24px;font-size:12px;line-height:12px;white-space:pre;color:#ffffff;">0</div><div style="position:absolute;left:845.20px;top:765.24px;font-size:12px;line-height:12px;white-space:pre;color:#ffffff;">s</div><svg style="position:absolute;left:855.4px;top:767.4px;" width="10" height="6" viewBox="0 0 10 6"><path d="M0.5 0.5 L9.5 0.5 L5 5.5 Z" fill="#fff"/></svg><div style="position:absolute;left:877.0px;top:737.4px;width:2px;height:2px;background:#9a9a9a;border-radius:1px;"></div><div style="position:absolute;left:877.0px;top:742.6px;width:2px;height:2px;background:#9a9a9a;border-radius:1px;"></div><div style="position:absolute;left:877.0px;top:747.8px;width:2px;height:2px;background:#9a9a9a;border-radius:1px;"></div><div style="position:absolute;left:882.4px;top:737.4px;width:2px;height:2px;background:#9a9a9a;border-radius:1px;"></div><div style="position:absolute;left:882.4px;top:742.6px;width:2px;height:2px;background:#9a9a9a;border-radius:1px;"></div><div style="position:absolute;left:882.4px;top:747.8px;width:2px;height:2px;background:#9a9a9a;border-radius:1px;"></div><div style="position:absolute;left:875.7px;top:760px;width:276px;height:1px;background:#e2e2e2;"></div><div style="position:absolute;left:886.6px;top:731.4px;width:26.1px;height:26.1px;background:#dcdde1;border-radius:3px;"></div><svg style="position:absolute;left:891px;top:736px;" width="17" height="16" viewBox="0 0 17 16"><path d="M1.5 1 L15.5 7.5 L1.5 14 Z" fill="#3d8b5e" stroke="#3d8b5e" stroke-width="0.8" stroke-linejoin="round"/></svg><div style="position:absolute;left:918.3px;top:738px;width:4.9px;height:1.3px;background:#222;"></div><div style="position:absolute;left:1047.29px;top:732.69px;font-size:11px;line-height:11px;white-space:pre;color:#222;font-weight:bold;">+</div><div style="position:absolute;left:918.8px;top:748px;width:136.7px;height:2px;background:#c8d0da;"></div><div style="position:absolute;left:919px;top:745px;width:1px;height:3px;background:#d4dae2;"></div><div style="position:absolute;left:930px;top:745px;width:1px;height:3px;background:#d4dae2;"></div><div style="position:absolute;left:941px;top:745px;width:1px;height:3px;background:#d4dae2;"></div><div style="position:absolute;left:953px;top:745px;width:1px;height:3px;background:#d4dae2;"></div><div style="position:absolute;left:964px;top:745px;width:1px;height:3px;background:#d4dae2;"></div><div style="position:absolute;left:975px;top:745px;width:1px;height:3px;background:#d4dae2;"></div><div style="position:absolute;left:986px;top:745px;width:1px;height:3px;background:#d4dae2;"></div><div style="position:absolute;left:997px;top:745px;width:1px;height:3px;background:#d4dae2;"></div><div style="position:absolute;left:1009px;top:745px;width:1px;height:3px;background:#d4dae2;"></div><div style="position:absolute;left:1020px;top:745px;width:1px;height:3px;background:#d4dae2;"></div><div style="position:absolute;left:1031px;top:745px;width:1px;height:3px;background:#d4dae2;"></div><div style="position:absolute;left:1042px;top:745px;width:1px;height:3px;background:#d4dae2;"></div><div style="position:absolute;left:1053px;top:745px;width:1px;height:3px;background:#d4dae2;"></div><svg style="position:absolute;left:958px;top:742px;" width="13" height="13" viewBox="0 0 13 13"><circle cx="6.5" cy="6.5" r="5.4" fill="#f8f7f2" stroke="#1a1a1a" stroke-width="1.2"/></svg><div style="position:absolute;left:1062.9px;top:728px;width:1px;height:32px;background:#dddddd;"></div><div style="position:absolute;left:1065.3px;top:728px;width:1px;height:32px;background:#e6e6e6;"></div><div style="position:absolute;left:0px;top:792.5px;width:1151px;height:23.5px;background:#f0f0f0;border-top:1px solid #dcdcdc;"></div><div style="position:absolute;left:9.6px;top:793px;width:1px;height:23px;background:#d8d8d8;"></div><div style="position:absolute;left:232.5px;top:793px;width:1px;height:23px;background:#d8d8d8;"></div><div style="position:absolute;left:973.8px;top:793px;width:1px;height:23px;background:#d8d8d8;"></div><div style="position:absolute;left:14.30px;top:799.74px;font-size:12px;line-height:12px;white-space:pre;color:#111;transform:scaleX(0.9552);transform-origin:0 0;">Arrêté.</div><div style="position:absolute;left:237.70px;top:799.74px;font-size:12px;line-height:12px;white-space:pre;color:#111;transform:scaleX(0.9897);transform-origin:0 0;">Cliquer et glisser pour sélectionner l’audio</div><div style="position:absolute;left:921.30px;top:792.69px;font-size:17.5px;line-height:17.5px;white-space:pre;color:#ffffff;font-weight:bold;font-style:italic;transform:scaleX(1.0230);transform-origin:0 0;text-shadow:1px 1px 1px #000, 0 0 2px #333;">www.astucesinternet.com</div></body></html>
